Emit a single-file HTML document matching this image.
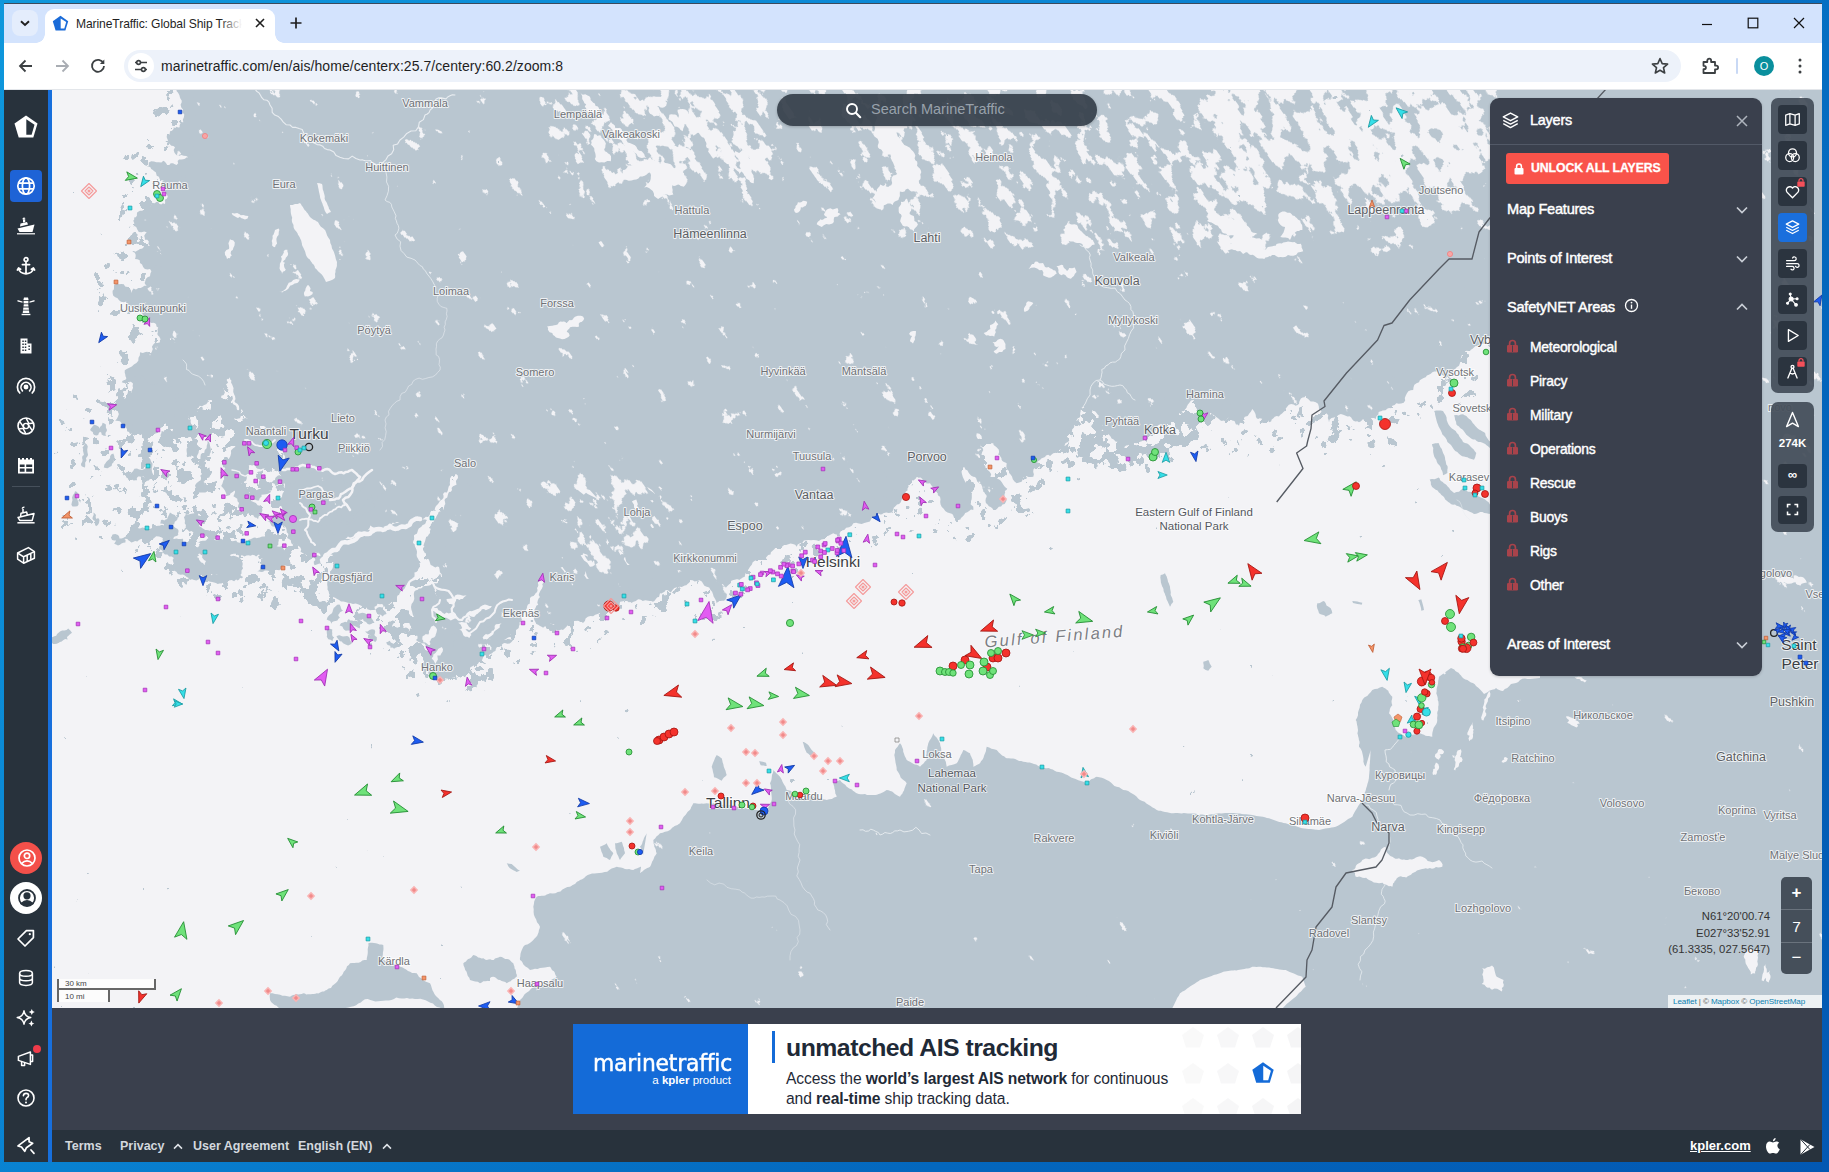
<!DOCTYPE html>
<html lang="en">
<head>
<meta charset="utf-8">
<title>MarineTraffic: Global Ship Tracking Intelligence</title>
<style>
*{box-sizing:border-box;margin:0;padding:0}
html,body{width:1829px;height:1172px;overflow:hidden}
body{font-family:"Liberation Sans",sans-serif;background:linear-gradient(135deg,#0e97dc 0%,#0a86d4 35%,#0467bd 70%,#0358b2 100%);position:relative}
.abs{position:absolute}
#win{position:absolute;left:4px;top:3px;width:1818px;height:1159px;background:#fff;overflow:hidden}
#wintop{position:absolute;left:0;top:0;width:1818px;height:1px;background:#3b4a5c}
#tabbar{position:absolute;left:0;top:1px;width:1818px;height:39px;background:#d3e3fd}
#tab{position:absolute;left:41px;top:5px;width:230px;height:34px;background:#fff;border-radius:9px 9px 0 0}
#tab:before,#tab:after{content:"";position:absolute;bottom:0;width:9px;height:9px;background:radial-gradient(circle at 0 0,rgba(255,255,255,0) 8.5px,#fff 9px)}
#tab:before{left:-9px}
#tab:after{right:-9px;background:radial-gradient(circle at 100% 0,rgba(255,255,255,0) 8.5px,#fff 9px)}
#tabdd{position:absolute;left:8px;top:6px;width:26px;height:26px;border-radius:8px;background:#e4edfc}
#tabtitle{position:absolute;left:31px;top:6px;width:166px;height:18px;line-height:18px;font-size:12.1px;color:#1f1f1f;white-space:nowrap;overflow:hidden;letter-spacing:-0.1px}
#tabtitle:after{content:"";position:absolute;right:0;top:0;width:22px;height:18px;background:linear-gradient(90deg,rgba(255,255,255,0),#fff)}
#toolbar{position:absolute;left:0;top:40px;width:1818px;height:47px;background:#fff;border-bottom:1px solid #e3e6ea}
#omni{position:absolute;left:120px;top:7px;width:1557px;height:32px;border-radius:16px;background:#edf2fa}
#omni .chip{position:absolute;left:4px;top:3px;width:26px;height:26px;border-radius:13px;background:#fff}
#url{position:absolute;left:37px;top:8px;font-size:14px;color:#1f1f1f;letter-spacing:0.05px}
#side{position:absolute;left:0;top:87px;width:44px;height:1072px;background:#28323c}
#strip{position:absolute;left:44px;top:87px;width:4px;height:1072px;background:#176fdc}
#map{position:absolute;left:48px;top:87px;width:1770px;height:918px;background:#f3f3f6;overflow:hidden}
#adarea{position:absolute;left:48px;top:1005px;width:1770px;height:122px;background:#3a404d}
#footer{position:absolute;left:48px;top:1127px;width:1770px;height:32px;background:#28323c;color:#d3d8de;font-size:12.5px;font-weight:bold}
#footer span{position:absolute;top:9px;white-space:nowrap}
.sideact{position:absolute;left:6px;top:80px;width:32px;height:32px;border-radius:4px;background:#1e63d6}
.sico{position:absolute;left:11px;width:22px;height:22px}
</style>
</head>
<body>
<div id="win">
<div id="wintop"></div>
<div id="tabbar">
  <div id="tabdd"><svg width="26" height="26" viewBox="0 0 26 26"><path d="M9 11.2 L13 15 L17 11.2" fill="none" stroke="#1f1f1f" stroke-width="1.9"/></svg></div>
  <div id="tab">
    <svg class="abs" style="left:7px;top:6px" width="17" height="17" viewBox="0 0 17 17"><path d="M8.5 0.8 L16.2 6.2 L13.4 15.6 L3.6 15.6 L0.8 6.2 Z" fill="#1a6bd8"/><path d="M8.7 3.4 L14.2 7 L12.3 13.6 L8.7 13.6 Z" fill="#fff"/></svg>
    <div id="tabtitle">MarineTraffic: Global Ship Tracking Intelligence | AIS Marine Traffic</div>
    <svg class="abs" style="left:209px;top:8px" width="12" height="12" viewBox="0 0 12 12"><path d="M2 2 L10 10 M10 2 L2 10" stroke="#1f1f1f" stroke-width="1.6" fill="none"/></svg>
  </div>
  <svg class="abs" style="left:285px;top:12px" width="14" height="14" viewBox="0 0 14 14"><path d="M7 1.5 V12.5 M1.5 7 H12.5" stroke="#1f1f1f" stroke-width="1.7" fill="none"/></svg>
  <svg class="abs" style="left:1696px;top:12px" width="14" height="14" viewBox="0 0 14 14"><path d="M2 8.5 H12" stroke="#111" stroke-width="1.2"/></svg>
  <svg class="abs" style="left:1742px;top:12px" width="14" height="14" viewBox="0 0 14 14"><rect x="2.2" y="2.2" width="9.6" height="9.6" stroke="#111" stroke-width="1.2" fill="none"/></svg>
  <svg class="abs" style="left:1788px;top:12px" width="14" height="14" viewBox="0 0 14 14"><path d="M2 2 L12 12 M12 2 L2 12" stroke="#111" stroke-width="1.2" fill="none"/></svg>
</div>
<div id="toolbar">
  <svg class="abs" style="left:12px;top:13px" width="20" height="20" viewBox="0 0 20 20"><path d="M16 10 H4.5 M9.5 4.5 L4 10 L9.5 15.5" stroke="#3c4043" stroke-width="1.8" fill="none"/></svg>
  <svg class="abs" style="left:48px;top:13px" width="20" height="20" viewBox="0 0 20 20"><path d="M4 10 H15.5 M10.5 4.5 L16 10 L10.5 15.5" stroke="#a9adb3" stroke-width="1.8" fill="none"/></svg>
  <svg class="abs" style="left:84px;top:13px" width="20" height="20" viewBox="0 0 20 20"><path d="M15.4 7.2 A6 6 0 1 0 16 10" stroke="#3c4043" stroke-width="1.8" fill="none"/><path d="M16.3 3.6 V8 H11.9 Z" fill="#3c4043"/></svg>
  <div id="omni">
    <div class="chip"><svg width="26" height="26" viewBox="0 0 26 26"><path d="M13 9.5 H19 M7 9.5 H8.4 M7 16.5 H13 M17.6 16.5 H19" stroke="#3c4043" stroke-width="1.7" fill="none"/><circle cx="10.6" cy="9.5" r="1.9" fill="none" stroke="#3c4043" stroke-width="1.6"/><circle cx="15.4" cy="16.5" r="1.9" fill="none" stroke="#3c4043" stroke-width="1.6"/></svg></div>
    <div id="url">marinetraffic.com/en/ais/home/centerx:25.7/centery:60.2/zoom:8</div>
    <svg class="abs" style="left:1526px;top:6px" width="20" height="20" viewBox="0 0 20 20"><path d="M10 2.6 L12.2 7.6 L17.6 8.1 L13.5 11.7 L14.7 17 L10 14.2 L5.3 17 L6.5 11.7 L2.4 8.1 L7.8 7.6 Z" fill="none" stroke="#3c4043" stroke-width="1.6" stroke-linejoin="round"/></svg>
  </div>
  <svg class="abs" style="left:1695px;top:12px" width="22" height="22" viewBox="0 0 22 22"><path d="M4.5 7 H8.3 V5.6 A1.9 1.9 0 0 1 12.1 5.6 V7 H16 V10.6 H17.2 A1.9 1.9 0 0 1 17.2 14.4 H16 V18 H4.5 V14.2 H5.2 A1.7 1.7 0 0 0 5.2 10.8 H4.5 Z" fill="none" stroke="#3c4043" stroke-width="1.8" stroke-linejoin="round"/></svg>
  <div class="abs" style="left:1732px;top:15px;width:2px;height:16px;background:#c9d9f5;border-radius:1px"></div>
  <div class="abs" style="left:1750px;top:13px;width:20px;height:20px;border-radius:10px;background:#0a8f9d;color:#fff;font-size:11px;text-align:center;line-height:20px">O</div>
  <svg class="abs" style="left:1786px;top:12px" width="20" height="22" viewBox="0 0 20 22"><circle cx="10" cy="5" r="1.5" fill="#3c4043"/><circle cx="10" cy="11" r="1.5" fill="#3c4043"/><circle cx="10" cy="17" r="1.5" fill="#3c4043"/></svg>
</div>
<div id="side">
  <!-- logo -->
  <svg class="abs" style="left:9px;top:24px" width="26" height="26" viewBox="0 0 26 26"><path d="M13 1.5 L24.5 9.5 L20.3 23.5 L5.7 23.5 L1.5 9.5 Z" fill="#fff"/><path d="M13.3 5.2 L21.5 10.7 L18.6 20.8 L13.3 20.8 Z" fill="#28323c"/></svg>
  <div class="sideact"></div>
  <!-- globe -->
  <svg class="sico" style="top:85px" viewBox="0 0 22 22" fill="none" stroke="#fff" stroke-width="1.7"><circle cx="11" cy="11" r="8.2"/><ellipse cx="11" cy="11" rx="3.6" ry="8.2"/><path d="M3.4 8.2 H18.6 M3.4 13.8 H18.6"/></svg>
  <!-- ship -->
  <svg class="sico" style="top:125px" viewBox="0 0 22 22" fill="#fff"><path d="M2.5 13.5 L19.5 9.5 L17.5 17 H4.5 Z"/><path d="M5 11.5 L5.5 8.5 L12 7 L13 9.6 Z"/><path d="M8 7.6 V4.2 H10.2 V7.1 Z"/><path d="M7.6 4.6 Q7 2.6 8.8 2.4 Q10.4 2.4 10.4 3.6 Z"/><path d="M2 18.2 H20 V19.4 H2 Z"/></svg>
  <!-- anchor -->
  <svg class="sico" style="top:165px" viewBox="0 0 22 22" fill="none" stroke="#fff" stroke-width="1.7" stroke-linecap="round"><circle cx="11" cy="4.6" r="1.9"/><path d="M11 6.6 V18.6 M7.4 9.6 H14.6 M3.6 13 Q4.4 18.4 11 18.8 Q17.6 18.4 18.4 13 M3.6 13 L2.4 15 M3.6 13 L5.6 14.2 M18.4 13 L19.6 15 M18.4 13 L16.4 14.2"/></svg>
  <!-- lighthouse -->
  <svg class="sico" style="top:205px" viewBox="0 0 22 22" fill="#fff"><path d="M9 2.5 H13 L13.6 5 H8.4 Z"/><path d="M8.6 5.8 H13.4 V8.4 H8.6 Z"/><path d="M8.8 9.2 H13.2 L13.5 11.6 H8.5 Z"/><path d="M8.4 12.4 H13.6 L13.9 14.8 H8.1 Z"/><path d="M8 15.6 H14 L14.3 18 H7.7 Z"/><path d="M6.6 18.8 H15.4 V20.2 H6.6 Z"/><path d="M2.5 5 L7.5 6.6 V7.8 L2.5 6.6 Z"/><path d="M19.5 5 L14.5 6.6 V7.8 L19.5 6.6 Z"/></svg>
  <!-- building -->
  <svg class="sico" style="top:245px" viewBox="0 0 22 22" fill="#fff"><path d="M5.5 3.5 H12.5 V8.5 H16.5 V18.5 H5.5 Z M7.3 5.5 V7 H8.8 V5.5 Z M9.8 5.5 V7 H11.3 V5.5 Z M7.3 8.5 V10 H8.8 V8.5 Z M9.8 8.5 V10 H11.3 V8.5 Z M7.3 11.5 V13 H8.8 V11.5 Z M9.8 11.5 V13 H11.3 V11.5 Z M7.3 14.5 V16 H8.8 V14.5 Z M9.8 14.5 V16 H11.3 V14.5 Z M13.4 10.6 V12.1 H14.9 V10.6 Z M13.4 13.6 V15.1 H14.9 V13.6 Z" fill-rule="evenodd"/></svg>
  <!-- signal -->
  <svg class="sico" style="top:285px" viewBox="0 0 22 22" fill="none" stroke="#fff" stroke-width="1.7" stroke-linecap="round"><circle cx="11" cy="12" r="1.6" fill="#fff"/><path d="M7.4 15.8 A5 5 0 1 1 14.6 15.8"/><path d="M4.8 18 A8.6 8.6 0 1 1 17.2 18"/></svg>
  <!-- aperture -->
  <svg class="sico" style="top:325px" viewBox="0 0 22 22" fill="none" stroke="#fff" stroke-width="1.6"><circle cx="11" cy="11" r="8"/><path d="M11 3 L14.2 9.2 M18.4 8 L11.8 9 M17.4 15.6 L13.6 10.2 M11 19 L7.8 12.8 M3.6 14 L10.2 13 M4.6 6.4 L8.4 11.8" stroke-width="1.5"/><circle cx="11" cy="11" r="2.6" stroke-width="1.4"/></svg>
  <!-- calendar/table -->
  <svg class="sico" style="top:365px" viewBox="0 0 22 22" fill="#fff"><path d="M3 4.5 H19 V18.5 H3 Z M4.8 9.4 V12 H9.6 V9.4 Z M11.2 9.4 V12 H17.2 V9.4 Z M4.8 13.6 V16.7 H9.6 V13.6 Z M11.2 13.6 V16.7 H17.2 V13.6 Z" fill-rule="evenodd"/><path d="M3 3 H5 V5 H3 Z M7 3 H9 V5 H7 Z M11 3 H13 V5 H11 Z M15 3 H17 V5 H15 Z" /></svg>
  <div class="abs" style="left:8px;top:396px;width:28px;height:1px;background:#46505b"></div>
  <!-- ship outline -->
  <svg class="sico" style="top:414px" viewBox="0 0 22 22" fill="none" stroke="#fff" stroke-width="1.5" stroke-linejoin="round"><path d="M3 13.4 L19 9.6 L17.2 16.4 H4.8 Z"/><path d="M5.6 12.6 L6 9.2 L11.6 8 L12.4 11"/><path d="M8 8.6 V5 M7.4 4.8 Q7.4 3 9.4 3.2"/><path d="M2.4 18.8 H19.6"/></svg>
  <!-- box -->
  <svg class="sico" style="top:454px" viewBox="0 0 22 22" fill="none" stroke="#fff" stroke-width="1.5" stroke-linejoin="round"><path d="M2.6 9 L13.4 3.6 L19.4 7.6 V14.2 L8.6 19.2 L2.6 15.2 Z"/><path d="M2.6 9 L8.6 12.8 L19.4 7.6 M8.6 12.8 V19.2 M12.2 11.2 V17.4 M15.8 9.4 V15.8"/></svg>

  <!-- bottom -->
  <div class="abs" style="left:6px;top:752px;width:32px;height:32px;border-radius:16px;background:#f4504a"></div>
  <svg class="sico" style="top:757px;left:11.5px" viewBox="0 0 22 22" fill="none" stroke="#fff" stroke-width="1.7"><circle cx="11" cy="11" r="8"/><circle cx="11" cy="8.8" r="2.7"/><path d="M5.4 16.6 Q11 11.2 16.6 16.6"/></svg>
  <div class="abs" style="left:6px;top:792px;width:32px;height:32px;border-radius:16px;background:#fff"></div>
  <svg class="sico" style="top:797px;left:11.5px" viewBox="0 0 22 22" fill="none" stroke="#28323c" stroke-width="1.8"><circle cx="11" cy="11" r="8"/><circle cx="11" cy="8.8" r="2.7" fill="#28323c"/><path d="M5.4 16.6 Q11 11.2 16.6 16.6 Q11 20 5.4 16.6 Z" fill="#28323c"/></svg>
  <!-- tag -->
  <svg class="sico" style="top:837px" viewBox="0 0 22 22" fill="none" stroke="#fff" stroke-width="1.7" stroke-linejoin="round"><path d="M11.4 3.6 H18.4 V10.6 L10 19 L3 12 Z"/><circle cx="14.8" cy="7.2" r="1.1" fill="#fff" stroke="none"/></svg>
  <!-- db -->
  <svg class="sico" style="top:877px" viewBox="0 0 22 22" fill="none" stroke="#fff" stroke-width="1.5"><ellipse cx="11" cy="6.4" rx="6.4" ry="2.8"/><path d="M4.6 6.4 V15.6 Q4.6 18.4 11 18.4 Q17.4 18.4 17.4 15.6 V6.4 M4.6 11 Q4.6 13.8 11 13.8 Q17.4 13.8 17.4 11"/></svg>
  <!-- sparkle -->
  <svg class="sico" style="top:917px" viewBox="0 0 22 22" fill="#fff"><path d="M9 3.8 Q10 9.6 15.8 10.5 Q10 11.4 9 17.2 Q8 11.4 2.2 10.5 Q8 9.6 9 3.8 Z" fill="none" stroke="#fff" stroke-width="1.4" stroke-linejoin="round"/><path d="M16.8 2 Q17.2 4.6 19.8 5 Q17.2 5.4 16.8 8 Q16.4 5.4 13.8 5 Q16.4 4.6 16.8 2 Z"/><path d="M16.4 13.6 Q16.8 16.2 19.4 16.6 Q16.8 17 16.4 19.6 Q16 17 13.4 16.6 Q16 16.2 16.4 13.6 Z"/></svg>
  <!-- megaphone -->
  <svg class="sico" style="top:957px" viewBox="0 0 22 22" fill="none" stroke="#fff" stroke-width="1.5" stroke-linejoin="round"><path d="M3.4 9.4 L15.4 5 V17.4 L3.4 13.4 Z"/><path d="M6.6 14.6 V18.6 H9.6 V15.6"/><path d="M15.4 8 H17.6 V14.4 H15.4"/></svg>
  <div class="abs" style="left:29px;top:955px;width:8px;height:8px;border-radius:4px;background:#ef3b4a"></div>
  <!-- help -->
  <svg class="sico" style="top:997px" viewBox="0 0 22 22" fill="none" stroke="#fff" stroke-width="1.6"><circle cx="11" cy="11" r="8"/><path d="M8.4 8.8 Q8.6 6.4 11 6.4 Q13.6 6.4 13.6 8.6 Q13.6 10 11.8 10.8 Q11 11.4 11 12.8" stroke-linecap="round"/><circle cx="11" cy="15.4" r="1" fill="#fff" stroke="none"/></svg>
  <!-- pin -->
  <svg class="sico" style="top:1044px;transform:scaleX(-1)" viewBox="0 0 22 22" fill="none" stroke="#fff" stroke-width="1.7" stroke-linejoin="round"><path d="M9 3.2 L18.8 13 L15.2 13.6 L11.4 17.4 L10.2 13.6 L4.6 8.4 L8.4 7.4 Z" transform="rotate(-8 11 11)"/><path d="M6 16 L3 19.4" stroke-linecap="round"/></svg>
</div>
<div id="strip"></div>
<div id="map">
<svg id="mapsvg" width="1770" height="918" viewBox="52 90 1770 918" style="position:absolute;left:0;top:0">
<defs>
<filter id="lk" filterUnits="userSpaceOnUse" x="-700" y="-1000" width="3300" height="2900" color-interpolation-filters="sRGB">
<feGaussianBlur in="SourceGraphic" stdDeviation="12" result="den"/>
<feTurbulence type="fractalNoise" baseFrequency="0.07 0.042" numOctaves="5" seed="4" result="n"/>
<feColorMatrix in="n" type="matrix" values="0 0 0 0 0 0 0 0 0 0 0 0 0 0 0 1 0 0 0 0" result="na"/>
<feComposite in="na" in2="den" operator="arithmetic" k1="0" k2="1" k3="1" k4="0" result="s"/>
<feComponentTransfer in="s" result="t"><feFuncA type="linear" slope="70" intercept="-58.1"/></feComponentTransfer>
<feFlood flood-color="#f3f3f6"/><feComposite operator="in" in2="t"/>
</filter>
<filter id="il" filterUnits="userSpaceOnUse" x="0" y="0" width="1900" height="1100" color-interpolation-filters="sRGB">
<feGaussianBlur in="SourceGraphic" stdDeviation="7" result="den"/>
<feTurbulence type="fractalNoise" baseFrequency="0.085" numOctaves="4" seed="9" result="n"/>
<feColorMatrix in="n" type="matrix" values="0 0 0 0 0 0 0 0 0 0 0 0 0 0 0 1 0 0 0 0" result="na"/>
<feComposite in="na" in2="den" operator="arithmetic" k1="0" k2="1" k3="1" k4="0" result="s"/>
<feComponentTransfer in="s" result="t"><feFuncA type="linear" slope="70" intercept="-60.2"/></feComponentTransfer>
<feFlood flood-color="#b9c6d0"/><feComposite operator="in" in2="t"/>
</filter>
</defs>
<rect x="52" y="90" width="1770" height="918" fill="#b9c6d0"/>
<g filter="url(#lk)" transform="rotate(-35 900 300)"><g transform="rotate(35 900 300)" fill="#000">
<polygon points="150,60 177,89 182,102 183,122 167,136 175,147 188,157 163,161 147,167 157,176 167,189 165,204 140,211 133,221 147,232 150,246 127,247 135,259 150,269 147,286 117,284 113,296 130,306 150,322 160,342 150,356 140,352 127,369 122,382 137,389 147,406 163,422 183,426 197,409 210,399 230,377 233,389 223,409 237,419 242,409 250,422 263,426 270,442 283,452 283,452 281,468 285,485 279,500 284,512 281,524 287,538 300,547 313,556 322,562 330,553 338,542 352,537 363,532 380,527 397,522 413,520 428,517 436,506 443,494 450,481 456,474 458,478 452,490 445,502 438,514 431,524 426,537 423,550 429,560 439,567 442,577 433,583 422,588 414,596 411,607 414,617 411,628 416,640 428,652 424,668 436,678 458,671 478,664 484,654 497,647 510,637 519,626 524,613 530,600 537,588 543,578 546,583 540,597 535,612 540,626 563,630 583,623 600,613 617,607 637,600 659,597 660,593 680,587 690,580 707,587 717,603 727,597 733,580 750,567 767,557 780,547 797,547 813,540 833,533 853,523 873,517 893,510 903,497 907,483 917,477 930,483 940,497 950,513 960,520 973,510 967,487 960,467 973,477 987,497 993,510 1007,500 1000,480 983,450 977,433 993,443 1007,463 1017,483 1033,477 1040,460 1053,453 1070,440 1077,420 1083,407 1097,413 1107,433 1120,447 1137,443 1153,433 1173,420 1187,407 1193,400 1219,419 1239,426 1252,409 1269,422 1296,406 1306,396 1319,409 1329,422 1346,416 1359,422 1376,419 1392,406 1406,396 1419,382 1432,372 1446,379 1459,366 1472,349 1486,339 1496,322 1500,330 1500,60" fill-opacity=".075"/>
<rect x="1219" y="50" width="275" height="150" fill-opacity=".3"/>
<ellipse cx="1400" cy="140" rx="90" ry="55" fill-opacity=".12"/>
<rect x="1219" y="200" width="275" height="60" fill-opacity=".1"/>
<rect x="950" y="40" width="300" height="205" fill-opacity=".2"/><rect x="640" y="40" width="320" height="140" fill-opacity=".12"/>
<ellipse cx="895" cy="150" rx="45" ry="80" fill-opacity=".16"/>
<rect x="545" y="50" width="225" height="140" fill-opacity=".19"/>
<ellipse cx="605" cy="515" rx="60" ry="55" fill-opacity=".2"/>
<rect x="1765" y="90" width="60" height="540" fill-opacity=".1"/>
</g></g>
<path d="M52 89l125 0 -.3 0 -.2 2 1.4 1.4 .9 1.5 .7 1.6 .4 1.8 .7 1.6 1.1 1.5 0 1.9 -1.1 2.5 .7 2.6 1.7 2.2 -.6 2.7 1.9 2.1 -.4 2.8 -1.1 2.5 .5 2.6 -1.9 0 -1.2 1.5 -.6 1.7 .1 1.8 -1.6 .3 -1.5-.8 -1.4 1.1 -1.6-.7 .1 1.6 -.9 1.3 -1.2 1 -1.6 .2 -.2 1.6 -.3 1.5 -1.4 .7 -1.4 .6 .1 1.9 .8 1.8 .5 1.9 .5 1.8 1.5 1.3 1.3 1.4 2 .3 1.6 1.2 -1.3 2.7 .8 2.8 1.8 2.1 2.6 1.1 2.4-.9 2.4 .6 2.5 .3 2.1 1.3 -1.9 .1 -1.4 1.4 -1.8 .5 -1.9 .1 -2.2 .1 -1.5 1.5 .6 2.3 -1.6 1.7 -1.8-.8 -1.8-.9 -2.3-.1 -1.4 1.8 -2.1-.1 -1.1-1.7 -1.2-1.5 -1.6-1 -1.9 1.8 -2.7-.3 -2.4 .1 -2.3-.9 -2.8-.2 -2.4 1.3 0 2.9 -2.1 1.9 1.8-.9 1.9 .9 .8 1.8 1.7 1 1.3 1.1 1.6 1 .5 1.7 .4 1.8 2.2 1.1 .8 2.3 2 1.1 2.3 .4 1.7 1.7 1.4 1.9 .6 2.5 -1 2.3 -1.5 1.8 0 2.3 1.7 1.5 .9 2.1 -1 2 -2 1.1 .4 2.1 -.2 2.1 -2.1-.8 -1.7 1.4 -1.9-.8 -1.1-1.7 -1.9 0 -1.6 1.1 -1.8-.1 -1.7-.7 .3 2.1 -1.3 1.7 -1.9 .6 -1.8 1 -1.5 1 -1.3 1.4 -1.8 .5 -1.9 0 -1.4 .9 -1.5 .9 -.2 1.6 0 1.7 -1.1 1.4 -1.7 .3 .2 1.7 -1 1.5 1 2.5 -.5 2.6 2.4 1.3 1.1 2.4 1.5 2.4 2.8 .3 2.6-.8 2.5 .9 -1.5 1.6 -1 1.8 .6 2 .2 2.1 2.3 0 1.5 1.8 -.5 2.4 1.7 1.7 -1.7 .1 -1.3 1.1 -1.6-.4 -1.6 0 -.7 1.5 -1.5 .8 -1.7 .2 -1.3 .9 -1.6 .8 -1.5 1 -1.7-.8 -1.8 .6 -1.5-.9 -.9-1.5 -1.1-1.6 -1.8-.2 2.2-.2 2 .8 1.1 1.9 .8 2 2 1 .9 2 -.1 2.2 -.6 2 2.5 .3 2.2 1 .3 2.7 2.1 1.6 1 2.4 1.8 1.9 2.5 .6 2.6-.5 1.4 2.2 -1 2.4 -.4 2.6 -2.5 1 -1.6 1.7 -.7 2.3 -.4 2.6 1.9 1.9 -2.3 .1 -1.8 1.2 -2 .9 -2.2 .2 -2.4 1.4 -2.5-1 -1.3 2.1 -1 2.3 -.2-2.5 -1.4-2.1 -2-1.4 -2.5-.4 -1.3-2.2 -2.5-.4 -2.3 .4 -2.3-.3 -1.8 .5 -.9 1.6 .1 1.7 -.3 1.7 -1.2 1.2 0 1.8 .2 1.6 .5 1.6 2 1.5 2.3 1 1.4 2 2 1.6 2.7 .4 2.7-.6 -.3 1.7 1 1.3 1.3 .9 1.6 .2 1.1 1.3 1 1.4 .8 1.6 1.7 .7 1.9 .3 1.8-.8 2 .6 .7 2 1.4 .9 .7 1.7 .6 1.5 1.3 1.2 1.1 1.2 1.4 .9 .7 1.6 1.8 .5 1.6 .6 1.8-.2 1.7 .5 1.1 1.3 .3 1.9 1.7 1.1 -.6 1.7 .1 1.8 .1 1.6 -.5 1.5 .7 1.4 1.2 1.1 .8 1.3 .6 1.4 -.8 1.4 .2 1.6 -2.5 .6 -2.5-.1 -1.7 1.8 -1.4 2.1 .9 2.3 -.9 2.4 -1 2.1 -.9 2.2 -.4-1.5 -1.1-1.2 -1.2-1.2 -1.7 .3 -2.8 .8 -2.8-.6 -.1 3 -1.4 2.5 -.2 3 -1.9 2.3 -2.5 1.4 -2.1 2 -2.5 1.3 -2.6 1.2 -1.9 1.2 -.1 2.2 .5 1.9 .3 1.9 .9 2.1 -1.3 1.9 -2.2 .3 -1.2 1.8 2.3 .6 2.3 .3 2.2-1.2 2.4-.2 2.1 1.8 -.4 2.8 2.6 .4 1.5 2.2 1.9 2.2 2.9 .4 1.1 2.7 -.5 2.8 2.9 .6 1.1 2.8 -.1 2.6 .7 2.6 .3 1.5 1.2 1.1 .7 1.5 1.6 .4 1.5 .7 .7 1.5 1.4 .5 1.4 .6 1.8-.1 1.8 .1 .6 1.7 1.3 1.3 1.4 1 .8 1.5 .4 1.7 -.3 1.6 2.3 1.4 2.5 .7 2.2 1.6 2.7 .2 2.7 .4 2.4-1.3 2.5 1.4 2.7-1 1-1.6 1.7-.4 .7-1.6 .8-1.5 .6-1.7 -.8-1.5 -.8-1.5 -.4-1.6 1.6 .5 1.6-.5 1.7-.6 .6-1.7 2.5-1.6 2.6-1.4 1.9-1.2 1.2-2 2.3 .5 2.1-1.2 2-.9 1.4-1.7 .6-2.1 1.8-1.4 2.1 1.5 2.2 1.4 2.8-.3 2-1.8 2.1-1.6 .1-2.5 2.4-.8 1.2-2.3 -.8-2.1 -.5-2.2 1.4-1.8 1.1-1.9 1.5-1.6 1.5-1.5 -.6-2.3 1.5-1.9 .1 1.9 1.3 1.4 -.3 1.9 -1.5 1.2 .8 1.6 1.6 .7 1.3 1.2 0 1.8 -1.1 1.2 .1 1.7 -.1 1.6 .5 1.5 -.9 1.4 -.8 1.5 -.2 1.8 1.5 1.3 -.3 1.7 -.1 1.7 -.8 1.6 -1.4 1.1 -1.8-.2 -1.7 .3 -1.4 .9 -1.5 .9 1.5 1.7 .7 2.2 1.5 1.7 1.1 2 1.2 2.3 2.6 .5 2.3-1 2.5 .6 1.6-.4 1.7-.4 .7-1.6 .4-1.6 -.3-1.6 -.4-1.5 .6-1.4 .7-1.5 1.1 2.3 2.5 .4 -.2 2.2 -.1 2.3 1 1.8 1.9 1 .9 1.7 1.2 1.6 2 0 1.2 1.5 1.7 .2 1.8-.1 1.5 1.2 1.9-.6 1.3 1.3 1.9-.1 2.2 1.2 .7 2.4 1.4 1.8 1.2 2 -1.6 2.2 .6 2.6 1.2 2.2 1 2.2 2.2 .6 2.3-.1 .8 2.4 2.4 .8 1.7 1.6 2.4 .4 1.9 1.8 -.4 2.5 -.3-.3 .6 2.2 1.3 1.8 .1 2.2 -.6 2.1 -.8 2 -.3 2.1 -.4 2.3 -1.9 1.3 .8 2.2 .9 2.3 -.3 2.4 -1.4 2.1 1.6 1.7 1.6 1.7 .6 2.3 .2 2.3 -.4 2 -.3 2 0 2.2 -1.4 1.7 -.7 2 -.2 2.1 -1.7 1.3 -1.3 1.7 -.1 1.7 .2 1.7 .6 1.8 1.6 .9 .8 1.5 1.4 1.1 -.3 1.7 .8 1.6 -.4 1.7 -1.1 1.4 -1.7 .6 -.7 1.7 -.1 1.9 1.5 1.3 -.9 1.6 .4 1.8 1.5 1.5 2.1 .7 1.4 1.6 .6 2.1 .2 2.3 1.6 1.7 -.5 2.1 -.9 2 2 .9 1.8 1.3 .3 2.2 1.1 2 2.2-1 2.3 .4 1.4 1.9 1.9 1.3 1.2 2.2 -.6 2.5 2 1.2 2 1.3 2 1 2 1 2.2 .3 2.2-.5 1.5-.8 1.6 .4 1.6 .5 .7 1.5 1.7 2.3 1.9 2.1 .7-1.4 1.5-.7 .6-1.5 1.3-.8 1.1-1.3 .2-1.6 1.7-.2 .9-1.5 .5-2.1 1.9-1.1 2.1 .6 1.8-1.2 .9-1.7 -.2-1.9 .2-1.9 .8-1.7 1.7-.8 1.8-.5 1.8-.5 1.6-.9 1.8-1.2 1.2-1.7 2 1 2.1-.4 1.4-.8 .9-1.4 1.1-1.2 1.3-.9 1.3-1.1 1.7-.2 1.7 .3 1.6 .3 2.8-.2 2.1-1.7 1.7-2.1 .7-2.6 2.1 1.6 2.5 .9 2.5-.7 2.6-.2 2.4 .7 2-1.5 2.3 .2 2-1.1 2.5-.5 1.3-2.1 2.3 .2 2.2-.9 2.1 .8 1.8 1.1 2.3 .5 2.1-1.2 2.2 .4 2.3-.5 2-1.1 1.2-2 2 .4 2-.5 2.1-.6 1.8 1.2 1.6-1.2 1.7-1.1 1.6-1.5 2.2 .3 1.2-1.3 .8-1.5 .2-1.8 1-1.5 1.9-.4 1.6-1 .4-1.8 .9-1.7 1.3-1.2 1.1-1.4 .9-1.5 1.2-1.3 1.6-1.2 1.3-1.5 .2-2 -.6-1.9 1.6-1.7 2.3 .2 .9-2 .4-2.1 .5-1.9 1.3-1.6 -.2-1.9 .2-2 0-2.6 1.4-2.2 2.2-1.4 2.4-.8 1.8 1.6 .2 2.4 -1.1 1.5 -1 1.6 .3 1.8 .3 1.8 -1.8 .7 -1.7 .9 -1.4 1.6 .4 2.1 -1.1 1.7 -1.9 .4 -.8 1.6 -.5 1.8 -.5 2 -1.7 .9 -1 1.7 .5 1.9 .3 1.9 -.9 1.7 -.4 1.8 -.5 1.8 -1 1.7 -2 .4 -1.9 .8 -.6 1.9 -.9 1.2 -.7 1.4 -.6 1.4 -.9 1.3 -.9 1.3 -.5 1.5 -1.3 .9 -1.2 1 -.3 1.8 -1 1.6 1 1.8 -.8 1.8 .2 2.1 -1.4 1.4 -.9 1.7 -1.8 .8 -1.3 1.4 .1 1.8 -1.4 1.2 -.6 1.7 0 2.1 1.7 1.3 -1.5 1.4 0 2.1 1 1.4 .8 1.5 1.7 .4 1.6 .4 -.1 1.8 -.9 1.6 .9 1.5 1 1.4 .6 1.6 .5 1.6 .6 1.8 1.8 .7 1.4 1 1.6 .7 1.7-.9 1.8 .5 .6 2.6 .3 2.6 1.8 2.1 .3 2.7 -1.6 2.5 -1.6 2.5 -1.3 .9 -1.4 .7 -1.5-.6 -1.6 0 -1.3 .9 -1.1 1.1 -1.4 .5 -1.6 .2 -1.6 .2 -1.5 .2 -1.7 .3 -.8 1.6 -1.5 .6 -1.7-.2 -.9 1.4 -1.7 .4 -1.5 .9 -.7 1.6 -.2 1.6 .2 1.7 .3 2.9 -1 2.8 -1.7 2.4 -.6 2.9 .4 2.6 .8 2.5 .6 2.6 1.2 2.3 .1 1.6 -.8 1.4 -1.6 .5 -.6 1.6 -1.2 1.2 -.1 1.7 1.3 1.2 -.1 1.8 1.6 .8 1.5 1.1 .8 1.6 1.2 1.4 .6 1.8 .8 1.8 0 2.1 -1.5 1.4 1.9 1.4 2 1.1 2.2 .8 2.4 .2 1.2 2 1.1 2 1.2 2.1 0 2.4 -1.4 1.8 0 2.3 1.2 2 -.5 2.2 -.8 2.2 .6 2.3 -1.8 1.4 -1.3 1.8 1.7 1.2 1.6 1.4 1.1 1.9 .3 2.1 1.7 1.2 1.4 1.6 2.1 .6 2.1 0 1.6 .4 1.7-.3 1.6 .5 1.6-.8 1.7 .2 1.5 .6 1.8 0 1.2 1.3 .7-1.9 1.9-.8 1.9 .1 1.8-.1 1-1.4 .5-1.7 .4-1.7 1.1-1.4 1.3-.9 1-1.2 1.4-.9 1.6 .3 1.5 .6 1.5-.2 1.2 1 1.5 .6 1.2-2.8 2.6-1.4 2.4-1.4 2.8-.7 .4-1.6 1.4-.8 1.4-.7 .9-1.2 1.2-2.8 .7-2.9 1.8 1.5 2.4-.1 1.8-1.2 2-1 1.5-1.5 1.9-.8 .5-2.1 1.1-1.8 2.4 .1 1.8-1.6 .4-2.3 1.4-1.9 1.4-1.5 1.8-1.1 1.8-1.1 2-.6 .3-1.9 1.3-1.3 1.3-1.3 1-1.5 1.7-.8 1.6-.9 1.5-1.4 .3-1.9 .7-1.8 -.3-1.8 1.8-.9 .7-1.8 -.7-1.9 1-1.7 .9-1.5 .9-1.6 1.6-1.1 .3-2 .9-1.5 .5-1.8 .5-1.9 1.9-1 .2-1.8 .1-1.9 0-2.1 1.6-1.5 2-.3 1.6-1.1 .5-2 1.8-1.1 0-2 -.5-1.9 .9-1.3 .5-1.6 -.5-1.6 .3-1.6 1.3-1 .6-1.6 1.4-.6 1.5-.7 .6 1.4 .2 1.5 1.3 .9 .9 1.2 -1.8 1.1 -1.8 1.2 -1.4 1.6 -1.3 1.7 -.8 2 0 2.2 -.3 2.3 1.4 1.9 -1.4 1.6 -.8 2 -.5 2.1 .9 2 -1.9 1.1 -.8 2.1 -1.1 1.9 .6 2.2 -.5 2 -.4 2 -.3 2.1 .5 2 1.1 1.9 .9 1.9 1.9 .9 1.8 1.2 1.6 .7 1.5 1.1 1.4-1.2 1.9-.2 1.2-1.1 1.3-1 1.6-.5 1.7 .1 1.8 .7 1.4 1.2 1.1 1.7 -.3 2 1.6 .8 1.8 0 1.6-.7 1.8 .4 2.2-1.9 1.9-2.2 1.2-1.2 1.7 .2 .2-1.7 1.3-1.1 1.1-1.1 1.6-.4 1.6 .4 1.6-.3 1.5 .4 1.2 1 1.6 0 1.3 .9 1.9-2 .7-2.6 2.2-1.6 2.6-.7 2.7 .1 2.2-1.4 2.3-.9 2.4-.9 2.6 .5 2.3-1.5 1.1-2.3 1.8-1.7 2.4 .9 2.2-1.2 2.3-.4 2.3-.3 1.6-.5 1.1-1.4 0-1.7 .4-1.6 1.5-.2 1.5-.3 1.4-.6 1.5 0 1.6 .5 1.1 1.1 1.7-.4 1.3 1.1 1.2-.9 1.4-.6 1.6-.4 1.1-1.1 1.4-.7 1.6 .2 1.4 .6 1.2 .9 2.8-.8 2.9 .6 1.5 .3 1.5-.2 1.6 .8 1.5-.8 .9-1.2 .9-1.3 1.2-1.2 1.6-.2 1-3.7 1.6 .1 1.4-.8 1.4-.7 .8-1.4 1.6-.4 1.5 .3 1.1 1.2 1.4 .8 1.7-2.3 1.9-2.2 2.8-.7 2.8-.5 1.7 .3 1.5-.8 1.5-.7 1.6-.2 1.2-1.2 1.3-1 1.2-1.3 0-1.8 2.6 .2 2.1 1.3 2.4-.5 2.4-.7 2.3 1.1 1.2 2.2 1.4 2.1 2.3 1 2.5 .9 1.3 2.3 1.6 1.9 .9 2.4 .6 2.4 1.4 2.1 1.1 2.2 .6 2.4 1-1.2 1.3-1 1.6-.2 1.6-.1 1.7-.1 1.4-1 .9-1.4 .5-1.6 .1-2.5 -.8-2.4 -.3-2.5 .7-2.4 1.8-1.7 1.9-1.6 .8-2.5 2.4-1.1 1.6-.2 1.4-.6 1.6 .1 1.4 .6 1.3-.8 1.2-.9 1.3-.9 1.5-.4 .7-2.8 1.2-2.7 2.1-2.1 1.4-2.6 1.8-1.9 .9-2.5 2.1-1.5 2.5-.9 2.6 .2 2.7 0 2.4-1.3 1.7-2.1 1.5-1.8 2.3-.4 .4-2.2 1.7-1.6 1.7-1.5 1.3-1.8 2.3 0 2.1-.7 2.3-.2 1.8-1.4 2.1-.2 2.1-.6 2.3-.7 2.3 .4 2.3 .8 1.5 1.9 1-2.3 2.3-1.1 2.5-.6 1.4-2.1 2.4-.3 2.3-.3 2.4 .3 2.3-.3 2.9 .2 2.7 .8 2.4-1.4 2.8-.6 1.5-2.5 2.9-.7 2.3-1.4 2.5-1.1 1.4 .8 1.6 .4 1.6-.1 1.6-.4 .5-1.6 1-1.4 1.5-.7 1.7-.2 .9-1.2 1.1-1.1 1.5-.2 1.5-.3 2.6-1.5 1.5-2.5 2.8-.6 2.7 .9 2.9 .3 2.6-1 2.8-.7 2.8-.8 1.4-2.6 2-2.1 2.6-1.2 1.9-2.1 1.4 .6 1.4 .6 1.5-.4 1.2-.9 2.8-.8 2.7 .6 2.9-.6 1.6-2.5 .4-2.3 1.7-1.5 1.6-1.6 2.1-.7 1.5-1.5 .8-2 .7-2 1.2-1.7 .8-1.7 1-1.6 .7-1.8 1.7-1 0-2.1 1.1-1.7 -.3-2.1 -1.6-1.4 1.3-.6 1.3-.8 1.1-1.1 1.4-.6 1.7 .2 1.4-1.1 1.2-1.1 .6-1.5 1.8 1 2-.1 1.6 1.2 .9 1.8 1.8 .9 1.2 1.7 2 .2 2-.1 1.3 1.9 1.4 1.8 1 2.1 -.6 2.4 2.4-.1 2.1 1.2 .3 2.6 2.1 1.5 .5 2.6 -.3 2.6 .4 2.6 1.2 2.4 1.9 1.9 1.5 2.2 2.3 1.4 2.5 .9 1.7 .4 1.3 1.1 .6 1.6 .5 1.6 1.6-.1 1.7 .2 1.2 1 1.4 .9 1-2 1.7-1.4 1.4-1.7 1.1-1.8 2.1-.8 1.8-1.4 1.9-1.3 2.3 .4 .1-1.7 -.2-1.8 -1.3-1.1 -1.3-1.2 .4-1.6 0-1.6 .6-1.5 .2-1.7 0-1.6 0-1.6 0-1.7 -1.3-1.2 -.1-1.7 -1.1-1.4 -1.4-.9 -1.2-1 0-2.8 -1.7-2.3 -1.1-2.4 -1.1-2.3 -.8-2.6 -.5-2.6 .1-2.8 -1.6-2.2 2.2 .7 2.3-.2 .9 2.2 2.1 1.2 1 1.9 1.3 1.7 1.5 1.6 2 .9 1.7 .3 1.2 1.3 .5 1.6 .5 1.5 1.2 1 1 1.1 1.6 .6 .7 1.4 .7 1.5 0 1.5 .7 1.5 .1 1.5 1.3 1 .7 1.4 1.2 1.1 .3 1.7 -.9 1.9 -.3 2.2 .4 2.2 1.7 1.5 1.2 1.7 1.8 .9 1.7 1.1 1 1.8 2.3-.1 1.7-1.4 1.5-1.7 2.3-.4 1.4-1.8 2.2-.7 1.1-1.9 .9-2 -1.1-1.2 -.7-1.5 -.4-1.5 0-1.6 .7-1.6 -.4-1.7 1.6-.8 .9-1.4 -2.3-1.8 -1.7-2.2 -1.5-2.5 -1.8-2.2 -2.4-1.2 -1.9-1.9 -2.6 .1 -2.7 .1 .8-2.8 -1.5-2.5 -2-1.7 -2-1.8 -.5-2.5 -2.1-1.6 .4-2.5 -1.4-2.2 .4-2.6 -1-2.3 .6-2.4 1.2-2.2 -.8-2.3 -2.1-1.3 .7-2.5 -1.3-2.2 -1.1-2 -1.6-1.7 -.8-2.3 .4-2.4 2.8 .5 2 2.1 .4 2.8 1.4 2.4 2.6 1.1 2.6-.8 2.1 1.8 2.7 .1 .3 1.8 1.4 1 1.3 1 1.2 1.1 1.2 1.4 .3 1.7 -.1 1.7 -.8 1.6 1.5 .7 .9 1.4 .9 1.4 .2 1.6 .8 1.4 1.5 .8 1.4 .6 1.4 .8 -.3 3 .2 3 1.4 .8 1 1.1 .1 1.7 1.1 1.1 1.8 2.4 .8 2.8 1.7 2.3 2.2 1.8 2.4-.9 2.5-.7 1.1-2.3 1.1-2.4 2.4-1 2.4 1 2.4 0 2.3-.3 .6-2.4 -.7-2.3 .2-2.5 1.7-1.8 1.3-2 .4-2.3 1.2-2.1 2-1.3 1.3-1.5 1.8-.7 1.9-.7 1-1.7 2.2-.6 1.9 1.1 1.6-1.3 1.6-1.3 2.9-.5 1.8-2.4 2.6-.9 2.5-1 1.3-2.6 1-2.6 2.5-1.4 2.1-1.9 1.5-2.3 .3-2.8 .2-2.6 .1-2.7 1.9-2.1 .4-2.7 1.5-2.2 .8-2.6 1.1-1.7 1.9-.9 .7-2 -.3-2 .5-1.9 .1-1.9 1-1.8 1.6-1.1 1.3 1.5 1.8 .8 1.8 .8 2-.1 1.8 .5 1.8 .5 1.8 1 1.1 1.6 .9 1.2 1.2 1 -.3 1.5 .3 1.5 .9 2.7 1.3 2.5 1.1 1.1 .3 1.6 .6 1.6 -.8 1.4 2.3 2 2.2 1.9 2.1 1.1 1.6 1.9 1.2 2.1 2.1 1.2 1.8 2 2.7 .4 .7 2.4 1.1 2.3 2.2-.3 2.2 .7 1.7-1.5 2.3-.3 1.6-1.6 2.4-.1 2.1-.5 2.2 .2 2-1.4 2.4-.5 2.3-.9 2.1-1.3 2.1-1.8 .8-2.5 2.2-1.5 2.7-.1 1.4-1 .6-1.6 .9-1.4 .1-1.7 1-1.4 1.2-1.2 1.7-.5 1.7 0 1.5-1.1 1.8 .3 .9-1.4 1-1.5 1.5 .9 1.7-.6 1.3-1 1.7-.1 1.4-2.2 2.6-.6 .7-2.3 1.7-1.8 2-1.8 2.6-.2 1-2.3 1.4-2.1 1.2-2.1 1.5-1.9 1.5-2.1 2.4-.6 25.7 19 1.2 1.3 1.6 .6 1.7-.3 1.6 .6 1.2-1.2 1.1-1.2 1.4-1 1.8-.1 .8 1.3 .5 1.5 1.6 .3 1.4 .7 .4 1.6 .7 1.5 1.7-.2 1.3 1.3 .9-2.9 2.7-1.2 .7-2.6 1.6-2.3 2.8-.8 1.6-2.3 1.7-2.2 1.3-2.4 1.8 2.3 1.3 2.5 .4 1.5 .1 1.5 .8 1.4 1.4 .7 1.4-.7 1.6 .3 1.4 .4 1.5 .2 1.7-.1 1.4 .9 1.3 .9 .6 1.5 2.1-.8 .6-2.1 1.7-1.1 1.3-1.6 2.1-.7 2.1 .5 1.4-1.7 1.8-1.2 1.4-1.7 1.8-1.3 .5-2.1 1.4-1.8 1.6-1.9 2.4-.7 2.4 .3 2.1 1.3 1.9-.6 1.5-1.3 .1-1.9 .9-1.8 .8-1.7 1.7-.9 1.9-.2 1.2-1.6 1.1 2.2 1.9 1.6 1.9 1.9 2.7 0 2.5 .8 2.2 1.6 .8 2.6 .2 2.6 1.8 1.6 1.2 2.2 2.3 1 2.5-.2 1.5 2 -.5 2.4 .8 2.1 .4 2.2 .5-2.6 2-1.8 2.5-.3 2.5-.8 1.9-1.8 2.4-.9 2.5 .6 2.4 1 1.9 .7 2-.1 1.6 1.2 1 1.8 1.3 1.4 1.8 .9 2-.3 1.7 1 2-1.1 1.5-1.8 2.1-.8 2.2-.4 2.3 .8 2.2-.9 2.3-.1 2.1 1 .7-2.8 2.1-1.9 -.1-1.7 1.3-1.1 1.5-.3 1.4-.6 2.9-.3 2.1-1.8 1.5-.5 1.5 .2 1.1-1.1 .6-1.4 2.3-.8 1.8-1.6 2.3 .5 2.4-.3 2.6-.7 1.5-2.2 -.4-2.5 .9-2.4 1.1-2.3 1.5-2.2 2.4-.9 2.5-.4 .3-2.6 .9-2.5 2.1-1.6 2.5-.9 .8-2.1 2-1.1 1.8-1.1 2.1-.7 1.2-1.8 2-.8 1.9-.9 1.5-1.5 2-.7 2.1 0 1.8 1 1.7 1.3 1.8 .9 2 .7 .6 1.9 1.4 1.6 1.5-2.2 2.6-.3 1.2-2 1.7-1.8 .5-2.6 2.2-1.4 1.6-1.7 2-1.3 1-2.8 .5-2.9 .6-2.8 .9-2.8 .3-1.7 1.6-.7 1.3-.8 1.5-.4 1.6 .2 1.6 0 1-1.3 1.4-.7 1.6-1.6 1.6-1.5 2.2-.1 2.1-.7 2.1-1.1 2.2-.6 1-2.1 .6-2.3 2.7-.6 2.4-1.3 2.1-1.9 1.5-2.3 -.2-2.7 .3-2.7 0-2.7 1.2-2.5 44.3-22.3 0 378 -10 1 -2.5-.1 -2.5-.3 -2.6 .2 -2.3 1.2 -1.8 1.9 -2.3 1.1 -2.5 .5 -2.5 .5 -1.7 2.1 -2 1.8 -2.5 1 -1.8 2.1 -1.9-.2 -1.9-.7 -1.7-.8 -1.5-1.3 -1.3 1.2 -1.7 .4 -1.6 .4 -1.7 .5 -1.2 1.1 -1.5 .8 -1.5 .8 -1.5 .8 -1.8-2.2 -1.9-2.1 -2-2 -2.3-1.7 -1.2-1.8 -1.9-1.1 -1.9-.7 -1.9-1.1 -1.7-1.3 -2-.6 -1.8-1 -1.6-1.4 -1-1.5 -1.3-1.3 -1.1-1.4 -1.6-.9 -1.6-1 -1.1-1.4 -1.6-.8 -1.7-.7 -12 8.7 -.3 2.1 -.5 2 -.1 2.1 -.4 2.1 -.6 2 -.5 2.1 .1 2.1 -.4 2.1 .6 1.6 .5 1.6 .4 1.7 -.1 1.7 .7 1.6 .1 1.7 .1 1.7 -.4 1.7 0 1.7 0 1.7 -.7 1.6 -.3 1.7 .3 1.6 -.2 1.7 -.2 1.7 .2 1.7 -.3 2.2 -.8 2.1 -1.3 1.8 -1.3 1.9 -.5 2.1 -.6 2.1 -.3 2.2 .1 2.3 -1.7-.3 -1.6-.5 -1.8 0 -1.7-.2 -1.5-1 -1.6-.5 -1.7-.7 -1.7-.2 -1.7 .3 -1.6 .6 -1.7 .2 -1.7 .4 -1.8 .1 -1.6 .4 -1.5 .9 -1.7 .5 -1.4-.8 -1.1-1 -1.4-.5 -1.3-.8 -1.4-.7 -1.4-.6 -.8-1.4 -1.2-.9 -.6-2.2 -1-2.2 -.2-2.3 0-2.3 -1.2-1.9 -1-2 -1.1-2.1 -1.6-1.7 .6-2.1 .3-2.2 .9-2 1.5-1.7 -.6-2.1 -.2-2.2 .6-2.1 .2-2.2 -1.3-1.3 -1.1-1.4 -1.1-1.5 -.5-1.8 -1.5-1 -1.4-1.1 -1.6-.9 -1.5-1 -2.5 .7 -2.3 1.3 -2.7 .3 -2.5 1 -1.1 1.4 -1 1.4 -1.4 1.2 -1 1.4 -1.6 1 -1.6 .8 -1.2 1.3 -1.1 1.5 -.8 2.5 -1.5 2.3 -.3 2.6 -.9 2.5 -.8 2.6 0 2.7 -.9 2.5 -1.4 2.3 .9 1.5 .2 1.7 .3 1.7 .4 1.6 .2 1.7 .3 1.7 -.2 1.8 -.4 1.6 .5 1.6 .3 1.7 .5 1.6 .2 1.7 .6 1.6 .1 1.8 -.6 1.6 0 1.8 1.7 2 1.2 2.5 .6 2.6 .6 2.6 .4 2.7 -.1 2.7 .8 2.6 1.5 2.3 5-16.7 -.2 1.7 -.1 1.6 0 1.7 -.1 1.7 -.1 1.6 -.1 1.7 -.2 1.7 0 1.6 -.3 1.7 0 1.7 -.1 1.6 .1 1.7 -.2 1.7 -.1 1.6 -.2 1.7 -.1 1.7 -.1 1.5 -.3 1.5 -.3 1.5 -.4 1.4 -.5 1.5 -.3 1.5 -.5 1.4 -.5 1.5 -.3 1.4 -.5 1.5 -.6 1.4 -.5 1.4 -.4 1.5 -.4 1.5 -.6 1.4 -.5 1.4 -1.3 2 -1.4 2 -1.4 2 -1.2 2.2 -1.3 2 -1.2 2.1 -1.2 2.1 -1 2.3 -2 1.2 -2.2 1.2 -1.9 1.5 -2 1.5 -2.1 1.1 -2.1 1.3 -2.1 1.2 -2.2 1 -2.1 .5 -2.1 .4 -2.1 .4 -2.1 .3 -2.1 .3 -2.1 .4 -2 .6 -2.1 .4 -2.1-.2 -2.1-.2 -2-.4 -2.1-.2 -2.1 0 -2.1-.2 -2.1-.2 -2.1-.3 -2-.6 -2.1-.6 -2.1-.8 -2-.7 -2.1-.5 -2.1-.7 -2.1-.4 -2.1-.7 -2.2-.4 -2.1-.6 -2.1-.4 -2.1-.7 -2-.7 -2.1-.7 -2.1-.7 -2-.8 -2.1-.4 -2-.6 -2.1-.5 -2.1-.2 -2.1-.4 -2.1-.3 -2.1-.4 -2.1-.5 -2-.3 -2.1-.3 -2.1-.1 -2.1-.1 -2.1-.2 -2-.4 -2.1-.2 -2.1-.2 -2.1-.1 -2.1-.2 -2 .2 -2.1 0 -2.1 0 -2.1 .2 -2.1 .1 -2.1-.1 -12.3 1.7 -2.1 0 -2.1-.4 -2.1-.1 -2.1 0 -2-.7 -2.1-.3 -2.1-.1 -2.1 0 -2.1 .2 -2-.3 -2.1-.2 -2.1 .3 -2.1-.1 -2.1-.2 -2.1 0 -2.1 .2 -2.1-.1 -2.1-.4 -2-.5 -2.1-.4 -2.1-.5 -2.1-.6 -2.1-.1 -2-.7 -2-1.4 -2.1-1.2 -2-1.4 -2.1-1.3 -2.1-1.3 -1.8-1.7 -2.3-.8 -2.3-.9 -1.9-1.6 -1.6-1.8 -1.9-1.6 -2.1-1.3 -2.2-1.2 -2.1-1.4 -2.4-.8 -2.5-.3 -2-1.3 -2.1-1.4 -2.5-.5 -2.3-.8 -1.7-1.8 -1.8-1.6 -2-1.6 -2.2-1 -2.3-1.3 -2.6-.9 -2.5-.6 -2.6-.5 -1.4 .6 -1.2 1 -1.5 .4 -1.5 .5 -1.1 1 -.9 1.3 -1.2 .9 -1.2 .9 -1.7-.7 -1.5-.9 -1.8-.4 -1.7-.5 -1.7-.5 -1.6-.9 -1.7-.6 -1.7-.5 -2.1-.8 -1.9-1.2 -1.9-1.2 -2.1-.9 -2-1 -2.2-.7 -2.2-.5 -2.2-.3 -2.1-.9 -1.8-1.3 -2.1-.6 -2-.8 -2.3 .2 -2.2-.4 -2.1-.5 -2.1-.7 -2.1-.9 -1.7-1.3 -2.2-.4 -2-.9 -2.2-.6 -2.2 0 -2.1-.6 -2.2-.3 -2-.8 -2.2 0 -2-.8 -1.9-1.2 -2.1-.5 -2.1 .1 -2.2-.3 -2.1 .1 -1.4-.9 -1.2-1.1 -1.6-.6 -1.2-1 -1.3-1.1 -1.2-1.2 -1-1.2 -1.1-1.2 -2.6-.7 -2.6-.6 -2.3-1.2 -2.5-.8 -.5 2.2 -.3 2.3 -.8 2.1 -.9 2 -.6 2.3 -1 2 -1.6 1.7 -1 2 -1.7 .9 -1.7 .7 -1.5 1 -1.8 .8 .1-1.8 -.2-1.7 -.3-1.7 -.2-1.8 -.8-1.5 -.7-1.6 -.8-1.6 -.4-1.7 -1.7-.8 -1.6-1 -1.6-.9 -1.8-.6 -.7 1.7 -.8 1.7 -1 1.6 -.6 1.8 -.9 1.6 -.7 1.7 -.8 1.7 -1.1 1.5 -2.5 1 -2.6 .6 -2.6 .6 -2.3 1.2 -.3-1.5 -.3-1.6 -.2-1.5 -.6-1.4 -.7-1.4 -.8-1.3 -.6-1.4 -.7-1.4 -.5-1.4 -.6-1.4 -.2-1.6 0-1.5 -.1-1.5 -.6-1.5 -.3-1.5 -.2-1.5 -.8-1.3 -.6-1.4 -.8-1.2 -.8-1.3 -.9-1.2 -1.2-1 -.9-1.2 -.7-1.4 -1 2.6 -1.3 2.5 -1.6 2.3 -1.1 2.6 -.5 2.1 -.5 2 -.1 2.1 -.6 2.1 0 2.1 -.5 2.1 .4 2.1 .2 2.1 -1.8 1.6 -1.4 1.9 -1.9 1.5 -1.6 1.7 -1.5-1.2 -1.7-.8 -1.9-.2 -1.7-.8 -1.6-1 -1.6-1 -1.7-.8 -1.6-.9 -.9-2.1 -1.1-1.9 -.7-2.2 -.8-2.1 -.1-2.3 -.9-2.1 -.8-2.2 -1.4-1.8 -1.4 1.6 -1 1.9 -1.4 1.5 -1.2 1.7 0 2.6 -.7 2.4 .5 2.5 .4 2.6 .3 2.5 .6 2.4 .5 2.5 .1 2.5 1.2 1.7 1.1 1.8 1 1.9 .6 2.1 1.5 1.5 1.6 1.3 1.7 1.3 1.3 1.7 -.8 1.7 -.7 1.8 -.7 1.7 -.5 1.9 -1 1.5 -.7 1.8 -1.3 1.4 -1 1.6 -1.7-.8 -1.7-.8 -1.7-1 -1.3-1.4 -1.5-1.1 -1.8-.6 -1.8-.7 -1.8-.3 -1.6 .9 -1.5 1 -1.6 .8 -1.6 .8 -1.8 .4 -1.7 .8 -1.7 .3 -1.9 0 -2.1 0 -2.1 .1 -2.1-.2 -2-.8 -2.1 .1 -2.1 .1 -2.1-.4 -2-.6 -1.3-.8 -1.2-.9 -1.3-.8 -.9-1.2 -1.4-.6 -1.4-.6 -1.3-.9 -1.2-.8 -1.5-1.9 -1.9-1.4 -1.9-1.5 -1.4-1.9 -1.7 .8 -1.8 .5 -1.7 .8 -1.5 1.2 .4 1.7 .5 1.6 .2 1.8 .5 1.6 .3 1.7 .1 1.8 .9 1.5 .5 1.7 -2.6 .8 -2.2 1.4 -2.7 .3 -2.5 .8 -1.7-.4 -1.7-.3 -1.7-.5 -1.5-.9 -1.7 0 -1.8-.2 -1.5-.8 -1.8-.2 -1.7-.1 -1.6-.5 -1.7 .2 -1.6 .1 -1.7 .4 -1.6 .2 -1.7 0 -1.7-.3 -1.6-1 -1.6-1 -1.5-1.2 -1.5-1.1 -1.6-1 -1.8-.6 -1.9-.5 -1.8-.3 -.7-1.8 -.6-1.7 -1.1-1.5 -1-1.7 -.8-1.6 -.6-1.8 -1-1.6 -.9-1.6 -1.7-1.6 -1.7-1.7 -1.7-1.6 -1.6-1.8 -.1 1.7 -.6 1.7 -.6 1.6 -.2 1.7 -.2 1.7 -.2 1.7 -.7 1.6 -.7 1.6 .7 2 .2 2.1 .2 2.1 0 2.1 .3 2.1 .2 2.1 .2 2.1 -.1 2.1 -.5 1.7 -1 1.5 -.8 1.7 -.8 1.6 -.5 1.7 -1 1.6 -.3 1.7 -.1 1.8 -2.5-1.1 -2.3-1.3 -2.6-.5 -2.6-.4 -2.1-.3 -2.2-.1 -2-.5 -2.1-.4 -2.1-.4 -2.1-.4 -2.1-.6 -2-.6 -2.1 .2 -2.1-.4 -2.1-.5 -2-.8 -2.1-.1 -2.1 .3 -2.1-.2 -2.1-.2 -2.1-.2 -2-.6 -2-.6 -2.1-.4 -2.2 0 -2 .6 -2.1-.4 -2.1-.1 -1.7 .1 -1.7 .3 -1.6-.1 -1.7 .1 -1.7 .1 -1.6-.4 -1.7-.2 -1.7 .1 -.7 1.4 -.7 1.3 -.8 1.3 -.4 1.5 -.9 1.3 -1.2 .9 -1.1 1 -.8 1.3 -.8 1.3 -1.2 1.1 -1 1.1 -.8 1.3 -.7 1.3 -.7 1.3 -.9 1.2 -.6 1.4 -1.3 .8 -1.2 .9 -1.5 .5 -1.4 .5 -1.2 1 -1.3 .8 -1 1.1 -1.1 1.1 -2.4 1.2 -2.6 .6 -2.4 .9 -2.6 .6 -1.6 1.8 -2 1.3 -1.3 2 -1.8 1.6 .2 1.7 .1 1.7 .6 1.7 .1 1.7 .9 1.5 .7 1.6 .1 1.8 .7 1.6 -1 1.7 -1.2 1.4 -.6 1.8 -.7 1.7 -1 1.6 -.6 1.8 -.6 1.8 -1 1.6 -1.2 .9 -1.5 .5 -1.3 .7 -1.4 .6 -1.2 1 -1 1.1 -1.3 .7 -1.1 1.1 6.7-40 -.9 1.7 -1 1.5 -.9 1.7 -.5 1.8 -.8 1.7 -.4 1.9 -.9 1.7 -1.3 1.4 1.1 1.9 .9 2.1 .8 2.1 .2 2.3 1 2.1 1.1 1.9 .8 2.1 .8 2.1 -1.8 .7 -1.5 1.1 -1.6 1 -1.7 .9 -1.7 .7 -1.7 .7 -1.8 .5 -1.6 1.1 -2.1-.2 -2-.7 -2.2 .1 -2.1-.3 -2-.8 -2-.7 -2.2-.2 -2-.5 -2.5 1.1 -2.6 .8 -2.3 1.4 -2.1 1.7 -2.6 .4 -2.6 .6 -2.7 .2 -2.6 .4 -2.3 .1 -2.4 .1 -2.1 .8 -2.2 .8 -1.9 1.2 -1.7 1.7 -1.9 1.3 -2.2 .7 -1.2 1 -1.4 .5 -1.2 1 -.9 1.2 -1.4 .7 -1.3 .7 -1.3 .9 -1.3 .7 -2.7 .4 -2.5 1.1 -2.4 1.3 -1.9 1.9 -2.7 .6 -2.4 1.2 -2.7 .4 -2.7-.3 -1.7 .6 -1.6 .6 -1.5 .9 -1.7 .4 -1.7 0 -1.7 .1 -1.8 .1 -1.6 .7 -1.5 2.2 -1 2.5 -.3 2.6 -.6 2.7 .4 2.6 -.1 2.7 .3 2.7 1 2.6 1.3 2.3 .8 2.6 1.7 2.1 1.3 2.4 -.4 1.8 -.7 1.8 -.3 1.9 -.7 1.8 -.7 1.7 -1.3 1.5 -1.3 1.4 -1.3 1.4 -1 1.1 -1.2 1 -1.2 .8 -1.3 .9 -1.3 .7 -1.5 .3 -1.4 .8 -1.1 1.1 -.7 1.5 -.7 1.6 -.7 1.6 -.5 1.7 -.3 1.7 -.1 1.7 -.4 1.7 .1 1.8 1.5 1.1 1 1.5 .7 1.6 1.2 1.4 1.4 1.2 1.5 .8 1.5 1.1 1.2 1.3 2.5-.4 2.4-.8 2.6 .1 2.5-.8 2.5-.3 2.5-.4 2.5-.5 2.5-.2 1 1.2 .5 1.4 1 1.2 1.4 .8 .8 1.3 .4 1.5 .6 1.4 1 1.2 -1.4 1.3 -1.8 .8 -1.7 .8 -1.3 1.5 -1.8 .4 -1.7 1 -1.7 .7 -2 .1 -1.4 1.4 -1.8 .7 -1.8 .3 -1.9 .5 -1.8 .5 -1.7 .8 -1.6 1 -1.3 1.5 -1.2 1.3 -1.6 .9 -1.4 1.1 -1.4 1.1 -.9 1.6 -.9 1.5 -1.2 1.3 -1.4 1.2 -.5 2.6 -1.2 2.4 -1 2.4 -.6 2.6 .3 2 -465 0z" fill="#f3f3f6"/>
<path d="M270 993.3l2.6-.1 2.4 .8 2.5 .3 2.6 .4 2.3 1 2.6 .1 2.5 .5 2.5 .4 1.5-.9 1.6-.7 1.7-.4 1.6-.7 1.8 .5 1.7-.2 1.8-.2 1.6-.8 1.6 .3 1.3 .8 1.6-.1 1.5 0 1.5 0 1.5-.2 1.5-.2 1.5-.2 1.5-.4 1.5 .1 1.4-.7 1.4-.6 1.4-.6 1.6 .1 1.1-1 1.5-.6 1.9-1.5 2.4-.6 1.3-2.1 2-1.5 1.8-1.6 1.6-1.8 1.1-2.1 1.2-2.1 1.7-1.3 1.2-1.7 .8-2 1.5-1.5 1.1-1.8 .7-2.1 1.8-1.2 1.2-1.8 2.1-.3 2.2-.1 2.1-.2 2.2 .1 2-.9 1.7-1.3 2.2-.5 2.2-.1 .1-2.1 .5-2 .4-2.1 .1-2.1 -.1-2.1 .3-2.1 .5-2.1 -.2-2.1 1.9-.5 1.9-.1 1.9 .2 1.9 .3 1.9 .5 1.7 .8 2 .1 1.8 .4 .1 1.9 .1 1.9 -.2 1.9 -.4 1.8 0 1.9 -.4 1.9 .6 1.8 .2 1.9 2.2 .7 2.2 .3 2.1 1 2.1 .7 1.9 1.2 1.9 1.2 2.3 .4 2 1.2 2.2 .6 2 1.1 1.9 1.2 1.9 1.3 2.1 .9 2 1.2 2.3 0 2.3 .3 1.2 1.8 1.1 1.9 1.9 .9 1.6 1.5 1.6 1.4 1.9 1 2.1 .6 1.9 .9 .9 1.7 .5 1.8 .5 1.8 .7 1.8 .9 1.6 .8 1.7 1 1.6 1.4 1.4 1.7 1.5 1.5 1.7 1.9 1.4 1.3 1.9 .9 2.2 .2 2.3 1.5 1.8 1 2.2 -2.5-1.3 -2-1.8 -2.5-1 -2.7-.5 -2.2-1.6 -1.8-2 -2.6-.7 -2.4-1.4 -2.4-1.2 -2.6-.8 -2.7-.7 -2.7 .2 -2.7 0 -2.6-.4 -2.7 .2 -2.6-.7 -2.7 .6 -2.7 0 -2.7-.4 -2.6-.8 -2.3 1.5 -2.6 1 -2.6 .7 -2.8-.1 -2.6 .2 -2.7 .3 -2.6 .2 -2.7 .3 -2.5-.8 -2.6-.8 -2.6-.8 -2.7 .2 -2.3 1.5 -1.9 1.8 -2.5 1 -2.2 1.7 -2.4 1 -2.7 .4 -2.6 .8 -2.6 .5 -2.6 .4 -2.5 1 -2.7-.3 -2.5 .8 -2.6 .5 -2.6 .8 -2.6 .2 -2.5 .9 -2.6-.6 -2.7 .3 -2.5 1.3 -2.7 .3 -2.6-.5 -2.5-.7 -2.7 .4 -2.6-.5 -2.7 .4 -2.5 .8 -2.7 .3 -2.6-.4 -2.7 .4 -2.7-.3 -2.4-1.2 -2.7-.6 -1.6-1.6 -1.5-1.6 -2-1.1 -1.5-1.6 -2.1-.9 -1.8-1.3 -1.7-1.6 -1.1-2 -.1-1.7 -.2-1.6 .1-1.7zM463.3 963.3l1.2-1.1 1.5-.8 1-1.3 1.3-1 1.5-.7 1.5-.8 .9-1.3 1.1-1.3 1.8 .5 1.6 .8 1.4 1.1 1.8 .3 1.7 .7 1.9-.1 1.4 1.2 1.8 .5 1.7-.4 1.8-.4 1.7 .9 1.8-.2 1.3-1.3 1.7-.7 1.7-.4 1.6-.8 1.9 .3 1.6 1 1.7 1 2-.1 1.9 .5 1.4 1.3 1.3 1.5 1.5 1.1 .5 1.7 .6 1.6 .2 1.8 1 1.4 .4 1.7 .1 1.8 .8 1.6 -.2 1.8 -1.2 .9 -1.1 1.1 -1.4 .5 -1.3 .8 -1 1.2 -1.5 .5 -1.3 .8 -1.2 .8 -1.4-1.4 -1.8-.5 -1.9-.4 -1.6-.9 -1.9-.4 -1.5-1.2 -1.5-1.2 -1.8-.6 -1.9 .4 -1.6 1.2 -1.1 1.6 -1.5 1.2 -1.9 .1 -2 .1 -1.6 1.1 -1.7 .9 -2.2-1.5 -2.7-.3 -2.6-.7 -2.5-.8 -.7-2.2 -1.5-1.7 -.6-2.2 -.6-2.2 -1.4-1.8 -.6-2.2 -1-2.1zM600 846.7l1.8-.7 1.6-.8 1.7-.8 1.6-1.1 .6 1.4 .7 1.3 .8 1.4 .8 1.2 .8 1.3 .9 1.2 1.1 1 .9 1.2 -.8 1.7 -1 1.6 -.7 1.7 -.8 1.7 -1.7-.8 -1.5-1.1 -1.7-.7 -1.8-.7 -.7-2.6 -1.1-2.4 -.7-2.5zM615 843.3l1.7-.1 1.7-.4 1.7-.5 1.6-.6 .6 1.4 .4 1.4 .4 1.5 .7 1.4 .3 1.5 .1 1.5 .5 1.4 .3 1.5 -1.4 1.6 -1.2 1.7 -1.4 1.6 -1 1.8 -.9-1.6 -.7-1.8 -.8-1.7 -.9-1.6 -.5-2.5 -.8-2.4 -.1-2.5zM506.7 863.3l2.4 .5 2.6 .2 1.9 1.8 2 1.8 2.1 1.8 2.3 1.3 -1.7 .6 -1.6 .7 -1.7-.9 -1.7-.9 -1.7-.9 -1.6-1 -1-1.1 -.9-1.2 -.6-1.4zM716.7 755l1.2 .8 1.4 .7 1.1 1 1.3 .8 .6 2.1 .4 2.2 .7 2 .4 2.2 .8 2 .9 2 .5 2.1 .7 2.1 -1.4 1.4 -1.4 1.2 -1.2 1.4 -1 1.7 -1.9-.9 -1.8-1.1 -2-.9 -2-.5 -.3-2.7 -.7-2.6 -.5-2.7 -.8-2.6 .5-1.5 .5-1.5 .6-1.5 .7-1.5 .6-1.4 .5-1.6 .8-1.3zM759.3 761l1.7 .5 1.7 .3 1.7 .4 1.6 .5 .4 1.6 .3 1.7 -1.5-.1 -1.5-.3 -1.5-.1 -1.5-.2 -.9-2.1zM802.7 741.7l1.5 .6 1.4 .8 1.4 .9 1.3 1 1.5 2.3 1.5 2.2 1.9 1.9 1.8 1.9 -.8 2 -.9 2 -1.7-1 -1.7-1.1 -1.5-1.4 -1.7-1.1 -1.3-2.7 -1.1-2.7 -.7-2.8zM427 520l-1.8-.4 -1.8 0 -1.8-.7 -1.8 .6 -1.9 .5 -1.9-.3 -1.5 1.1 -1.5 1.2 -2.2-.2 -1.9-1.2 -1.9-1.1 -2.2-.2 -1.2 2.1 -2 1.1 -2.3 .2 -2.3 .3 -2.3 .3 -2.1 1 -1.6 1.6 -2 1.1 -2.3-.5 -2.3 .1 -2.3 .3 -2.1 1.1 -1.8 1.5 -2.3 .1 -2.2 .7 -2.1 .5 -2.3-1 -2.4 .5 -1.5 2.1 -2.4 .6 -1.3 2 -2 1.4 -2.4-.1 -2.3 .7 -2 1.3 -2.2 1 -2.3-.3 -2.4-.1 -2.4 0 -2.3-.3 -2.3 .4 -2.1 1 -1.2 1.5 -1.9 .4 -1.5 .9 -1.1 1.5 0 2 -1.3 1.5 -1.5 1.1 -1.5 1.1 2.3 1.1 2.1 1.5 1 2.3 .9 2.4 -.2 2.7 1.6 2.2 -1.5 2.2 -.2 2.6 -.6 1.7 -1.1 1.5 -1.3 1.4 .1 1.9 0 1.9 -.6 1.8 -.9 1.7 -1.6 1.1 .3 2.3 -.1 2.4 .4 2.3 -.1 2.4 1.2 2.2 .4 2.4 1.6 2 2.3 1 2.2 .8 1.9 1.2 2 1.1 1.9 1.3 2.3 0 2.2 .6 2.2 .7 2.3 .3 2.9 .9 2.9-.4 2.8 1 2.6 1.2 1.3 .9 1.2 1 1.5-.1 1.5 .2 .7 1.5 1.6 .5 1.5 .5 1.5-.2 2.2-.1 1.9-.9 1.7-1.4 2-.7 2.2 .6 2.1-.8 2-.6 1.9-1.1 1.3-.8 1.1-1 1.2-1.1 1.4-.5 1.3-.9 1.2-1 1.3-1 .2-1.7 .6-1.5 1.5-.7 .6-1.5 .7-1.3 1.2-1 1.5-.5 1.1-1.2 .8-1.3 1.1-2.5 1.5-2.3 2.8-.7 1.6-2.5 .6-2.1 1.8-1.2 .2-2.1 -.2-2.1 2-.5 1.5-1.5 .9-1.8 1.2-1.7 -.1-2.7 -1-2.4 -.5-2.6 -1.4-2.3 -.4-1.9 .3-1.8 .1-1.9 -.6-1.8 -.7-1.7 -.8-1.7 -.3-2 -1.6-1.2 .3-1.9 .8-1.6 .1-1.9 -.6-1.8 1.4-1.4 1.8-.7 .7-1.8 .5-1.9 .8-1.5 1.5-1 1.3-1.1 1-1.3 1.6-.7 1.4-1.2 .4-1.7zM1160.7 575l2.2-.6 2.1-1.1 .8 1.6 .9 1.6 .5 1.7 .5 1.7 .3 1.8 .8 1.6 .6 1.7 .6 1.7 .1 1.9 .4 1.9 .3 2 -.2 1.9 .7 1.8 .9 1.7 .4 1.9 .7 1.9 -.9 1.2 -1 1.1 -.6 1.4 -.8 1.3 -1.1-2.5 -1.1-2.4 -1.3-2.5 -.5-2.6 -.7-1.4 -.4-1.6 -.7-1.3 -.6-1.5 -.1-1.6 -.5-1.5 -.8-1.3 -.5-1.5 -.8-2.4 -.2-2.5 -.4-2.6zM1203.3 661.7l2.6-.6 2.4-1.1 .9 1.7 .5 1.8 1 1.6 1 1.6 -1.8 1.9 -1.6 2.1 -2.6-.8 -2.4-1.6 .4-1.6 0-1.7 -.4-1.7zM1317.3 603.3l1.8-.1 1.7-.6 1.5-1 1.7-.6 1.6 2 .9 2.4 2.1 1.4 2.1 1.5 1.1 2.4 .5 2.6 -1.8 .6 -1.4 1.2 -1.8 .7 -1.6 .9 -1.4-1.4 -1.9-.5 -1.8-.5 -1.6-1 -.7-2.5 -1-2.3 -.5-2.6zM1418.3 600l1.6-.2 1.4-.5 .8 2.7 .7 2.6 .7 2.7 .5 2.7 -2.7 .7 -.3-2.8 -.8-2.7 -.8-2.6zM1352.3 601l2.6 .2 2.5 .3 2.4 .7 2.5 .5 -.6 2 -2.2-.5 -2.2-.1 -2.1-.7 -2.2-.4zM1434.1 410.9l2.2-.4 2.3-.1 2.2 0 2.2 .5 1.2 2.2 1.5 2.1 .9 2.4 .1 2.5 .9 2.4 1.1 2.2 1.5 2 1.7 1.9 2 1.1 1.8 1.2 1.1 2 1.7 1.5 .8 2.1 1.3 1.8 1.5 1.6 .9 2 2 1 2.2 .6 1.8 1.2 1.5 1.7 1.5 1.6 1.7 1.5 1.1 1.8 1.5 1.7 -.5 1.7 -.4 1.7 -.5 1.7 -.9 1.6 -1.7-.4 -1.6-.6 -1.7-.5 -1.6-.9 -1.7-.2 -1.7-.5 -1.8-.4 -1.5-1 -1.8-1.4 -1.6-1.8 -2.1-1.1 -1.6-1.8 -1.3-2 -1.3-2 -1.8-1.6 -1.8-1.6 -.7-2.1 -1.2-2 -1.5-1.7 -1.6-1.6 -.7-2.1 -1-2.1 -1-1.9 -1.1-2 -.7-1.9 -.8-1.9 -.5-1.9 -.5-2 -.5-1.9 -.5-2 -.2-2zM1454.1 415.3l2.3-.2 2.2 .4 2.1-1.1 2.3-.2 1.6 1.1 1.8 .6 1.2 1.5 1.3 1.4 1.6 1 1.2 1.5 1 1.6 1.3 1.3 1.1 1.5 1.2 1.3 1.2 1.3 1.5 1.1 1.6 .8 1.5 1 1.5 .9 1.5 1 .6 2.6 1.5 2.2 1.4 2.3 2.1 1.7 0 1.7 -.5 1.7 .4 1.6 .1 1.7 -1.4-1.2 -1.3-1.1 -1.5-1 -1.3-1.2 -1.6-.8 -1.6-.8 -1.7-.6 -1.8 0 -1.9-.8 -1.5-1.5 -2.1-.2 -1.9-.8 -1.5-1.4 -1.6-1.2 -1.6-1.3 -1.2-1.6 -.9-1.3 -.9-1.4 -1.2-1.1 -1.4-.8 -1-1.1 -1.1-1.1 -1.4-.9 -1-1.2 -.2-2.3 -1-2.1 -.3-2.3zM1431.9 444.2l1.6-.5 1.7-.5 1.7 0 1.7-.2 .8 2.1 1 2.1 1.4 1.8 .6 2.1 .8 2.2 1.1 2 .7 2.1 .2 2.3 .5 1.6 .3 1.7 .4 1.7 1.1 1.4 .2 1.8 -.3 1.7 -.1 1.7 .1 1.7 -2.1 1.3 -2.3 .9 -.2-2.1 -.6-2.1 -1.1-1.8 -.5-2.2 -1.2-1.8 -1.6-1.4 -1-2 -.5-2.1 -1.3-1.6 -.9-1.9 -.5-2 -.4-2 -.1-2.1 .2-2 -.9-1.9zM1429.7 479.6l2.3-.5 2.3 .1 2.2-.7 2.1-1.1 1.1 1.2 .5 1.6 1.2 1 1.4 .9 1 1.2 1.4 .8 1.3 .9 .9 1.3 1.8 1.6 1.2 2.1 1.9 1.5 1.8 1.4 2.4-.9 2.5-.3 1.8-1.8 2.2-1.4 1.4 .7 1 1.2 1.4 .5 1.3 .9 1.5 0 1.5 .2 1.4 .7 1.5 .2 1 1.4 1.2 1.2 1.5 .7 1.6 .6 1.4 .8 1.6 .4 1.4 .8 1.4 .8 1.8 1.4 1.7 1.3 1.2 1.9 .9 2.1 .4 1.9 -.5 1.9 .5 2 -.4 1.9 -2.2-.2 -2-.5 -2.2-.3 -1.9-.9 -2.2 0 -2 .8 -2 .9 -2.2 .2 -1.8-1.2 -2-.7 -1.9-1.1 -2-.9 -2.2-.4 -1.9-1 -1.7-1.4 -2-1 -1.9-.5 -1.6-1.2 -1.9 .1 -1.9-.4 -1.3-1.4 -1.7-.9 -1.4-1.3 -1.6-1.1 -.8-1.8 -1.2-1.6 -1.8-1.1 -1.1-1.7 -1.6-1.2 -1.1-1.7 -1.9-.7 -1.6-1.3 -2-1.6 -1.2-2.3 -.1-2.6zM186.1 421.1l-1.4 1.1 -1.7 .3 -1.6-.6 -1.7-.1 -1.7 .2 -1.5-.7 -1.2-1.1 -1.3-1.1 -1.6-.3 -1.6-.1 -1.2-1 -1.3-1.1 -1.3-.7 -1.3-.9 -1.6-.6 -.7-1.5 .2 2 -.8 1.7 .3 1.8 -.2 1.9 -1.2 1.2 -1.4 1 -1.1 1.3 -1.1 1.3 -.3 1.9 -1.4 1.3 .6 1.7 .3 1.8 -1.7 .1 -1.5 .7 -1.6-.6 -1.6 .6 -.9 1.6 -1.4 1.1 -1.7 .5 -1.8-.2 .1-2 -1.3-1.5 -1.6-1.1 -.8-1.8 -1.4-1.3 -1.9-.4 -1.2-1.5 -1.7-.8 -1.6-1.2 -2.1-.5 -2.1 0 -1.7 1.3 -1.5-1.2 -1.7-.9 -.7-1.9 -1.8-.9 2.1-1.1 .9-2.2 2.1-1.2 .5-2.4 1-2.2 .3-2.3 .3-2.5 -1.6-2 2.3-1 2.2-1.2 2.2-1.5 2.6 .1 2.7 .3 1.9 2.1 2.5 .2 2.6-.3 -.7-1.3 -.3-1.5 .2-1.5 0-1.5 .3-1.7 -.7-1.6 .7-1.7 -.7-1.7 .3-1.7 .6-1.6 1.3-1.1 .9-1.6 2.7-.2 2.5 1.1 2.4-.9 2.4-1.3 2.7-.4 2.2 1.8 2.7 .3 1.6 2.3 1.7 .4 1.4-1 1.4 .5 1.6 .1 1.6 .2 1.6-.4 1.5 .8 1 1.3 .1 1.5 1.1 1.2 .7 1.5 1.5 .6 1.7 2.4 1.5 2.6 1.6 1.3 1.1 1.7 .7 2 1.4 1.5 .4 2 1 1.7 1.2 1.8 0 2.1 -1.4 .7 -1.7-.1 -1 1.3 -.7 1.3 .3 1.7 -.9 1.3 -1 1.2zM146 402l-1.8 1.7 -.7 2.5 -1.7 1.8 -1 2.2 -1.3-1.6 -1.9-.6 -1.8-.8 -1.5-1.2 0 1.9 .5 1.8 -.2 2 -1.6 1.2 .9 2.2 -.4 2.3 -.7 2.4 -2.1 1.2 -1 2 -1.9 1 -1.6 1.5 -1.2 1.7 -1.5-.6 -.8-1.4 -.7-1.5 -1-1.1 -1.1-1.3 -1.6-.3 -1.6-.2 -1.5-.1 1.7-1.9 1.1-2.3 .9-2.5 -1.1-2.5 .5-2.5 -.7-2.4 1-2.2 .5-2.4 1.8-2.2 2.9-.2 2.4-1.2 2.4-1 2.7-.9 .2-2.2 -.3-2.2 .9-2.1 .9-2 -.2-2.2 1.1-1.8 1.8-1.1 1.6-1.3 2-.9 .6-2 1.3-1.6 .3-1.9 1.2 1.1 1.1 1.2 .7 1.5 1.4 .9 .2 1.7 1.3 1.2 .5 1.6 .4 1.5 .2 2.1 -.4 2 -1 2 .8 2.1 .5 2.1 .1 2.2 -.6 2.3zM139 422l.2 2.1 -.3 2 -.6 1.6 -1.2 1.2 .8 1.6 -.6 1.7 -2-.2 -1.9-.2 -1.4 1.6 -2 .6 -1-1.9 -2-.8 0-2.1 -.9-1.8 .2-2.8 2-1.8 -2.8-.9 -2.9 .1 -1.5-1 -1.4-1.2 -.6-1.7 -.9-1.5 .8-2 -.7-2 1.2-1.7 1.6-1.2 2.5 .7 2.4-.5 2.5 .7 1.5 2.2 .9 1.7 1.3 1.4 -.2 1.9 -.3 1.8 2.6 .6 2.4-1.3 .8 1.9zM272.6 460l-2.2 .7 -1.1 2 -.6 2.1 -.1 2.1 -2 .6 -1.6 1.3 -2.1-.4 -1.9 1.1 -1.7-.4 -1.8-.3 -1.5-1.2 -.5-1.8 -1.6-.8 -1.8 .4 -1.6-.5 -1.7 .4 .3 2 -.3 2 .7 2 -.4 2 -1.5 1.5 -.8 1.9 -.1 2.1 -.7 1.9 -1.5 .7 -1.5 .5 -.7 1.5 -1.5 .7 -.1 1.8 -.9 1.4 -1.7 .5 -1.1 1.3 -1.3 .9 -1.5 .5 -1 1.2 -1.3 .9 -1.5 .8 -.5 1.7 -1.6 .4 -1.4 .6 -.8-2.8 -1.2-2.7 -1.6-2.4 -2.1-2.1 1.3-2.6 .8-2.9 .9-1.4 -.3-1.6 -.8-1.4 -.5-1.5 .4-1.9 .7-1.8 .8-1.8 1.2-1.5 .3-2 .8-1.8 -.3-2 .3-1.9 2.3-1.6 1.3-2.5 .7-2.6 -.1-2.7 1.9-2 2.1-1.6 1-2.5 .4-2.7 2.3-.8 2.5-.1 2.6-.2 2.2 1.4 1.7 .2 1.5 .8 1.5-.9 1.6-.5 .6-1.7 1.4-1 1.7-.2 1.6-.7 2.7-.2 2.6 .9 1.3 2.4 2.3 1.6 2.7-.3 2-1.9 2.6-.2 2.5 .5 .7 2.5 -.3 2.5 -.8 2.4 -1.2 2.2 -.6 2.5 .4 2.5 0 2.6zM266.4 434l1.4 1.3 1.3 1.4 -.3 1.9 .1 1.9 .9 2.6 -1.3 2.5 -.8 2.4 -1.1 2.3 -1.6-.9 -1.4-1.3 -1.9-.5 -1.7 1 -1.2-1.5 -1.3-1.2 -1.9 .2 -1.6-1 -2-.3 -1.4-1.5 -1.9-.1 -1.9 .1 -1.9 .2 -1.6-1 -1.2-1.4 -.9-1.5 1-1.5 -.4-1.8 1.3-1.1 1-1.2 .3-2 -1.1-1.6 -1.2-1.5 -1.8-.8 .8-2.3 .8-2.2 .8-2.3 -.3-2.4 1.5-.4 1.5-.4 1.5 .4 1.4 .6 2.9-.8 2.8-.8 .5 2.7 1.3 2.5 1.7 2.2 2 2 1.8 2 2.5 .9 .7 2.5zM335.5 464.2l-1.7 .7 -1.7 .2 -1.7 .7 -1 1.6 -1.8 .5 -1.6-1.1 -1.7 .6 -1.6 .6 -1.4 1.5 -2 .1 -.6 1.8 -1.2 1.5 -1.8-.5 -1.8-.2 -1.8 .3 -1.7 .8 -2 .5 -1.9 .6 -2 .8 -2.1-.2 -1.1 1.5 -1.3 1.3 -2.5 1.6 -1.9 2.2 -.9 1.3 -1.5 .5 -1.6 .4 -1.5-.5 -1.8 .9 -1.9-.7 -2-.4 -1.7 1.2 -1.9 0 -1.9-.4 -1.5 1.4 -2 .4 -.8-2 -2.1-.7 -2.1 .1 -1.8-1 1.8 .6 1.7-.8 1.2-1.3 1.7-.7 .3-1.8 1.3-1.3 1.4-1.2 1.8-.4 1.9 1.1 1.9 1.2 2-1.1 2.3 .4 1.5-1.6 1.9-.8 2.1-.5 1.9-1 1.6-.7 1.3-1.2 2-.6 2.1-.4 1.5-1.4 1.7-1.4 2.5-1.3 2.5-1.2 2.9-.2 2.7-1.1 2.8-.7 2.9 .1 2.6-1.2 2.5-1.4 2.6-.7 2.3 1.3 2 1.6zM302.6 459l-1.7 .7 -2 .1 -1.9 .6 -1.8-.7 .6 2.2 -1.4 1.6 -.3 2.2 -.3 2.1 -.8 2 -.8 1.6 -1.7 .6 -1.6-.3 -1.7 .4 -1.6-.2 -1.6 .4 -1.3-1 -1.6-.3 -1.2-1.9 -.1-2.2 .4-2.1 1.2-1.9 2-.2 1.7-1 1.2-1.6 1.7-1.1 2.6-.8 -1.1-1.2 -.8-1.4 -.9-1.3 -.9-1.4 1.7-1.1 1.9-.4 1.7-1.1 .8-1.9 1.6 1.6 1.9 1.2 2.2 .8 2.2-1 1.7 1 1 1.8 1.8 1 2-.7 -1.2 1.3 -.5 1.8 -1.2 1.4zM333.8 506l.6 2 -.1 2.1 -1 1.9 -1.5 1.4 -2 1.3 -.7 2.2 -1.7 1.5 -1.4 1.7 -.7 2.7 -1.7 2.2 -2.7 .5 -2.3 1.6 .3 2.6 -.9 2.5 -.1 2.7 -1.9 2 -2.4-.3 -2.4 0 -2.4-.4 -2.3-.7 -1.8-1.8 -1-2.2 -2.4-1.1 -.8-2.5 -1-1.4 -.9-1.5 -.8-1.5 -.3-1.7 -1.8-.4 -1.1-1.6 -1.1-1.3 -.7-1.6 -2.3 .3 -1.7-1.4 -1.3-1.7 -1.2-1.7 -1.4-1.7 -2.2-.5 -.7-2.1 -.2-2.1 1.7-2 2.6-.1 1.7-1.9 2.5-.4 2.5-.2 2.4-.4 2-1.5 2-1.4 2.9 .3 2.8-1 2.8 .5 2.9 .4 2.1-.8 1.2-1.9 1.1-1.9 .2-2.2 .5-2 .5-2 0-2.1 -.2-2.1 1.8 .4 1.7-.6 1-1.6 1.8-.4 1.7-.2 1.6-.4 1.5-.9 1.3-1.1 1.6-1 1.7-1 1.9 .2 1.8 .7 1.5-1.4 1.9-.4 .7-1.8 .6-1.8 .7 2.8 .7 2.8 1.3 2.6 2.3 1.8 -.9 2.8 1.1 2.9 .5 1.5 -.2 1.5 -1.3 1 -.8 1.3 -1.9 1.2 -2.2 .4 -.8 2.2 -2.1 1.1 -1.4 1.7 -.7 2.1 .6 2.3zM358.1 489l.3 1.8 0 1.9 -.6 1.8 -1.3 1.4 -2.3 .8 -2.4-.7 -2.1 1.1 -2.3 .4 -1.6-.2 -1.7-.2 -1.6-.4 -1.5-.5 -1.4-1.7 -1.6-1.5 -1.6-1.3 -2.1 .2 -2 .2 -1.4 1.4 -2-.3 -1.7-1.1 -1.4-1.4 -1.2-1.5 -1.9-.4 -1.9-.2 -1.9 .5 -2-.1 1.6-1.1 1.9 .4 1.8-.5 1.7 .9 1.1-1.5 .5-1.7 1.7-.6 1.2-1.5 1.4-1.5 2-.7 2 0 1.9 .8 2.8 .2 2.5-1.2 1.3 2.2 2.4 .8 2-1.3 2.3 .2 2 1.2 2.3-.6 .3 2 1 1.8 1.8 .8zM319 533.6l.6 2.6 -.7 2.5 2.2 1.4 1.3 2.3 -2.3 1.4 -.7 2.6 -.5 2.7 1.3 2.3 -1.7-.6 -1.8 .3 -1.6 .8 -1.4 1 -1.1 1.5 -.4 1.7 -1.8 .3 -1.4 1.3 -1.7-2.2 .2-2.7 1.6-2 .7-2.5 -.4-2.5 -1.8-1.7 -.2-2.5 -2-1.7 -2.3 .1 -2.3-.2 -.4-3 -1.2-2.8 .6-1.8 0-2 -.5-1.8 -.1-2 .4-1.8 -.9-1.6 1.2-1.3 .7-1.7 .3-1.6 .5-1.7 -.9-1.5 -.1-1.7 1.2-1 1.2-1 .4-1.7 1.3-1 .5-1.7 .8-1.5 1.5-1 1.7-.2 2.3-.2 2.1 .9 2 1.2 1.7 1.5 -1.6 1.4 -1.2 1.9 1 2.2 -.9 2.2 -.9 1.9 -.4 2.1 .2 2.2 1.1 1.9 -.3 2.1 .2 2.1 1.5 1.1 1.2 1.5 1.6 1.3zM348.4 523l-.6 1.7 .9 1.6 1.1 1.3 .9 1.3 -1.2 1.6 -.9 1.7 -2 .2 -1.9 .6 -2.1-.2 -2.1 .2 -1.6 1.5 -1.9 1 -1.8-1.2 -2.2 0 -.7-2 -1.1-1.7 1.2-1.2 1.1-1.3 .4-1.8 -.7-1.7 .3-1.6 -.9-1.9 -.8-1.9 -1.8-1.4 -2.2 0 -2 .5 -1.8-1.1 -1.9-.4 -1.7-1 2.1-1.2 .6-2.3 1.7-1.6 1.8-1.2 2.7 .9 2.9-.1 2.9 .6 1.9 2.3 1.4 .6 1.3 .9 1.3 .8 .7 1.4 -1.3 2.4 -.8 2.6 2.2 .7 2.2-.5 2.3 .2zM278.3 544.7l-1.9 1.7 -1.9 1.9 -1.5 2.2 -2.3 1.4 -1.4 1.4 -1.8 1.1 -2.1 .2 -2-.6 -2.1-.3 -1.9 .6 -1.8 .9 -1.5 1.4 -1.6-1.3 -2-.6 -1.9 1.1 -2.2-.5 -2 .2 -1.9 1.1 -1.7-1.2 -2.2-.1 -2.5-.1 -2-1.5 -2.3 .1 -2.4 .5 -2.1 1.1 -1.8 1.5 -1.1 2.2 -2.1 1.2 -1.4-.9 -.9-1.3 -.7-1.5 -1.6-.6 -1.4 .8 -1.7-.4 -1.5-.3 -1.6 .1 -2.3-.4 -1.9-1.4 -1.8-1.5 -1.3-1.9 -1.1-1.2 -1.3-.8 -.4-1.6 -1.3-1 -.3-1.8 -1.3-1.2 -1.4-1 -1.8 .2 1.8-.6 1.7-.9 2.1-.1 1.6 1.3 1.8-1.1 .5-2 1.7-1.1 2 .1 1.9-.2 1.5 1.3 1.5 .9 1.9 .1 2-.3 1.4-1.4 1.7 1 1.9 .1 2.1-.5 1.8 1.1 1.8 .8 1.9 .1 2.1-.3 2.1-.5 1.3 1.9 2.1 .5 1.8-.6 1.4-1.1 1.7 .6 1.8-.1 1.6-.6 1.1-1.4 1.6-.4 1.6-.7 1.4-.8 1.6-.2 1.6 .7 1.6-.5 1.6-.1 1.4-.8 1.6-.3 1.5 .1 1.9-.6 .9-1.6 1.7 .6 1.8-.1 1.3 1.2 1.4 .9 1.7-.9 1.8 .5 1.7 1.5 .2 2.3 -.5 2.1zM241.8 561l.7 1.7 .2 1.8 -.5 1.9 .9 1.8 -1.6 2.4 0 2.9 -1.7 2.2 -1.5 2.3 -2.2 1.5 -2 1.8 -2.5-1.2 -2.7 .5 -2.6-.5 -2.6 .4 -2.3-1.4 -1.4-2.3 -1.3-1.4 -1.7-.8 -1.9 .2 -1.8-.6 -2-.2 -1.6 1.2 -1.6-1.3 -2 .1 .4-2.2 .2-2.2 -1.9-1.4 -.4-2.3 .5-2.6 1.1-2.3 -1.6-.8 -1.2-1.3 -1.1-1.5 .3-1.9 -1.5-.8 -1.3-1.2 -1.7 .7 -1.7-.6 -.1-1.5 0-1.5 .9-1.3 .6-1.4 1.7-2.5 1-2.8 2.1-1.9 2.8 0 2.3-1.2 2.4-1 2.7 .9 2 1.9 2.7 .8 2.7-.7 1.2 1.5 1.8 .7 1.8 .9 .7 1.9 .5 1.8 .7 1.7 .4 1.9 1.1 1.5 1.3 1.7 1.8 1.2 2.1-.5 2.1 .5 1.9 .7 1.9 .8 1.6 1.4zM284.9 556l1.2 2.1 .8 2.2 1.6 2.1 2.6 .2 -2.3 1.2 -1.6 2.1 -2.7-.7 -2.4 1.3 -.3 1.6 -1.2 1.1 -1.3 1 -1.7-.1 -2.9-.3 -2.7 1.3 -1.9 .5 -1.8-.8 -1.8-.4 -1.8 .1 -1.6 1.3 -2 .2 -1.8-.5 -2-.3 1.8-.7 1.2-1.6 .1-2 1.2-1.5 -.1-1.9 .9-1.7 1-1.6 1-1.6 -3-.3 -1.8-2.3 -.9-2.5 -1.6-2.1 -2-1.7 -2.7-.5 2.3-.9 1.2-2.2 2.3-1 1.3-2.1 1.7 .3 1.4 1.1 1.7-.5 1.7 0 1.5-.9 1-1.6 1.7-.1 1.8 0 1.3 .8 1.2 .9 .4 1.5 1.3 1 1.3 1 1.6 .2 1.7-.1 1.3-1.1 1 1.6 .2 2 1.5 1.1 1.8 .8 .1 2.8zM198.8 558l.3 1.7 1.1 1.5 1.1 1.4 1.7 .5 1 1.4 .9 1.4 1.4 1.2 .2 1.8 -1.3 1.1 -1.5 .8 -.9 1.6 -1.7 .7 .1 1.9 -1.3 1.4 -.2 1.8 -1.2 1.3 -2.1 .9 -2.2-.4 -2.2-.7 -2.2 .6 -1.1-2 -2-1 -1.8-1.3 -1.9-1.1 -2.6 .2 -2.5-.8 -1.5-2.2 -2.5-1.1 .3-2 -.2-2.1 0-2.1 -.6-2 -.7-2.3 1.1-2.1 -2.1-1.5 -2.5 0 -1.8-1.9 -2.5-.2 -1.8-1.7 -.9-2.3 -2.4-1.1 -.9-2.4 1.5-1.3 .2-1.8 .8-1.7 1.5-1.1 -.4-2 1.2-1.6 .7-1.8 1.8-.9 2.1 1.2 1.1 2.2 2.5-.5 2.2 1.4 2.2-.5 2.2 .6 2.3 0 2.2-.4 .2 1.7 -.4 1.6 .5 1.7 .8 1.5 1.2 1.2 1.7 .5 1.3 1.1 .8 1.5 .1 2.7 1.7 2.1 1.4 1.9 2.3 .6 2.1 .3zM177.3 528.7l1.1 1.3 .1 1.8 -.5 1.6 .3 1.6 -1.7 1.1 -2 .3 -1.2 1.5 -1.6 1.3 -1.7-1.4 -2.1-.2 -2.2 0 -1.7 1.3 -2.4-1.5 -2.6-1 -2.9-.1 -2.3 1.9 -2.3-.7 -2.4-.3 -1.9 1 -2.1 .6 -2.2 0 -2.1 .3 -1.9 1 -1.7 1.4 -2.2-.4 -2.1 1 -1.7 .3 -1.4-1.1 -1.3-.9 -1-1.2 -1.6-.5 -1.5 .4 -1.5-.3 -1.6-.2 1.7-.7 1.6-.8 1.6-.8 1.3-1.2 1.6-.8 1.5-.9 1.2-1.3 1.7-.6 1.8-1.9 1.9-1.6 2.6 .5 2.5-1.1 2.5 .6 2.2 1.6 2.6-.6 2.4-1 1.9-.6 1.9-.5 1.7-1.1 2-.1 1.5-.7 1.6 .1 1.6 .5 1.2 1.1 1.1-1.2 1.5-.6 1.5-.6 1.6 .4 1.8 .6 1.2 1.5 1.4 1.1zM198.9 525l.7 1.6 1.6 .6 1.2 1.1 1.4 .8 1.3 .9 1.7 .1 1.6 .2 1.4 .6 -.8 1.8 -1.1 1.6 -1.7 1.2 -1 1.7 -2.8-.4 -2.1-1.7 -2.6-1.2 -2.7 1 -1.1-1.4 -1-1.4 -1.6-1 -1.9 .6 -1.6-1.7 -2-1.3 -.1-1.9 .2-1.8 -1.2-1.8 .3-2.2 -.4-1.9 -.7-1.8 1.3-1.5 .6-1.8 2.3 .6 2.3-.5 2.3-.5 2.3-.3 1.7 1.2 1.8 .9 2.1 .5 2 0 -.6 1.5 -.1 1.7 -.3 1.6 -.1 1.7 -.8 1.8zM255.9 503l1.7 2.2 2.7 .6 1.7 2.1 .4 2.6 -.9 2.4 -2.1 1.5 -.7 2.4 -.7 2.4 -1.2-1.4 -1.9-.4 -1.3-1.4 .1-1.9 -1.4-1.3 -1.9-.2 -1.7 .7 -1.7 .6 -.9-1.3 -.9-1.4 -1.4-.8 -.9-1.4 -2.6-.4 -2.5-1.1 .5-2.3 .8-2.2 -1.6-1.8 -.2-2.5 -1.9-1.2 -2-1.2 .9-2 .7-2.1 1.5-1.8 .4-2.2 2.6 .1 2.4 .9 2.5 1.1 2.6-1 1.5 1.3 .9 1.9 1.5 1.3 1.5 1.3 -.2 1.7 -1.4 1 0 1.6 .4 1.6 2.3 1zM267.3 494l-3 .5 -2.9 .3 .3 1.8 -1.9 1.5 -.8 2.3 -1.9 0 -1.7-.7 -2-.2 -1.5 1.3 -.8-2 -1-1.9 .3-1.5 .8-1.4 1.5-1.1 1.9-.3 .5-2.4 2.1-.2 1.8-.9 2.6-.2 2.6 0 2.2 .1 1.9 1 2.2 .5 2-.8 -1.5 1 -.6 1.7 -1.5 .9zM203.5 482l1.3 1.1 .1 1.6 1.6-.1 1.3 1 -.3 1.5 -.8 1.3 .9 1.4 -.3 1.7 -2 1.1 -2.3 0 -2.4 0 -2.4 0 -.8-1.4 .3-1.6 -1.3-.8 -.7-1.4 -.7-1.6 .7-1.6 1-1.3 1.3-.9 1.3-.9 1.3-.9 .7-2.3 -1.1-2.1 1.4-1.2 .4-1.8 .7-1.7 .3-1.8 1.7 .4 1.8-.1 1.3-1.3 1.7-.7 .2 2.5 .2 2.4 .5 2.6 -1.2 2.3 -1.8 .7 -1.9 .6 -.5 1.9zM151.7 470l.4 2.3 1 2.1 -.4 2.3 -1.4 1.9 -1.8 .9 -1.5 1.5 -1.7-1.1 -1.8-.8 -.5-2.4 -1.4-2 1.7-2.1 -.3-2.6 1.5-2.2 .2-2.4 -1.7-1.8 -.1-2.2 0-2.2 2-1 2.1-1.1 2.2 1.9 1 2.8 1.4 2 -.3 2.5 -.5 1.8zM146.1 474l-1.8 2.2 -2.8 .8 -1.6-.5 -1.7 0 -1.4 1.6 .2 2.1 -1.7 .1 -1.6 .3 -1.7-1 -1.5-1.2 -.8-2.2 -.9-2.2 2.3-.9 1.9-1.8 1.4-2.6 2.6-.1 2.2 1 2.8 .5 2.6-1.2 .1 2.7zM209.7 455.8l-2.2 .4 -1.3 1.8 -.4 1.5 -.6 1.4 -1.5 1.6 -.4 2.2 -2.2 .7 -1.1 2 -1.2-2.2 -1-2.3 1.3-2 1.3-1.9 .1-2.4 .4-2.3 1.4-1.2 1.9-.2 .6-2.9 1.8-1.8 .2-2.6 .8-2.3 -.1-2.5 1.3 1.2 .8 1.5 .5 2.6 .6 2.6 .2 1.8 -.2 1.8 -.9 1.7zM198.5 453l-1.3 2.6 -.9 2.8 -1.3 .7 -1.4 .6 0-3 -.9-2.8 -.8 1.4 -1 1.4 -1.9-.2 -1.8 .8 -.6-1.6 .4-1.6 -.2-1.6 -.2-1.6 0-1.8 .6-1.6 1.6-1 .4-1.8 1.8 1.7 1.7 1.8 .8 1.2 1.7-1.8 .8-2.3 1.6 .2 1.3 1.1 .2 1.7 -.8 1.5 .5 1.6zM243.2 577l-1.4 1.2 -1.8-.1 -.9 1.5 -1.5 1 -1.3-1.1 -1.8-.3 -1.6 .5 -1.8-.3 -1.5-.6 -1.6 .2 -1.5-.3 -1.6 0 -1 1.7 -.9 1.7 -1.4 1.4 -2 .1 -1.9 .3 -1.8-.8 -1.8-.6 -1.9-.4 -1.9-.4 -1.8-.5 .1-2.1 -.3-2.1 2.3-1.3 2.2-1.6 1.8 .1 1.8 .5 1.8 .4 1.8-.7 1.5-.9 1.5-1.1 1.6 1 1.9-.4 1.7-.4 1.3-1.3 1.3 1.1 1.6 .7 1.7 .2 1.6 0 2.3-.2 1.9 1.2 1.4 1.6zM66.9 637l.7 2.6 -2.4-.5 -2.1 1.1 -1.4 1.2 -1.7 .7 -1.6 .9 -1.6 .7 -1.8 .3 -1.8 .1 -1.3-1.2 -1.7-.4 -1.6-.9 -1.7 0 1.6-2 .4-2.6 1.8 .8 2-.7 1.7-.8 1.8-.6 .9-1.7 1.4-1.3 1.5-1.3 2.1-.8 2.2-.1 2.3-.5 1.6-1.6 2.1 2.1 1.7 2.3 -1.3 1 -1.3 1 -1.1 1.2zM288.3 517.6l-1.1 2 -1.8 1.4 -1.2 2.7 -1.7 1.3 -2.2-.4 -1.6-.2 -1.5 .8 -2.1 1.5 -2.6-.3 -1.2-1 -.7-1.4 -1-2.1 -2.3-.9 2 .3 1.8-.9 2-.3 1.5-1.4 2.3 .2 1.9 1.4 1.3-2.5 1.3-2.5 1.3-1 1.4-.7 1.6 .2 1.7 .2 0 2zM177.1 520l-2.3 1.7 -.7 2.7 -2.1 .1 -2-.2 -2.5-.5 -2.1 1.2 -2.5-1.2 -2.7-.3 .5-1.7 .3-1.8 1.7-.2 1.6 .7 1.3-1 1.6-.5 .4-1.6 1.3-2.3 1.1-2.5 2.3 1.3 2.5 1 1.1 1.7 2.1 .5zM125.6 540l-.2 2.4 -2 .4 -1.9 .6 -1.5 1.4 -2 .6 -1.9-.8 -1.9-.8 .9-1.6 1.1-1.6 -2.1 0 -2-.6 -1.2-2.4 .9-1.4 .7-1.6 2.8-.7 2.7 1.1 1.1 1.6 .4 1.9 2.7 .1 1.9 .1zM107 430l-.5 1.5 -.9 1.3 -.1 1.6 .8 1.4 -2.5-.1 -2.2-1.1 -.2-1.8 -1.4-1.1 -1.2 1.5 -.6 1.9 -1.9 .5 -1.9-.5 -1.2-1.2 -.4-1.8 -1.4-.9 -1.3-1.2 .7-1.6 1.1-1.2 1.1-1.4 1.3-1 1.7 .4 1.5 .7 1.5 1 .5 1.8 .5-1.7 1.9-1.8 .7-2.4 1.8 .6 1.5 1.1 0 2.9zM88.1 455l-1.1 2.1 -1 1 .5 2.5 -1.4 2.1 .2 2.4 -.3 2.4 -1.9-.5 -1.7-.9 -.5-2.2 1.2-1.8 .5-2.1 -.5-2 .3-1.9 1.5-1.1 -.2-1.3 -.4-1.5 -.4-1.6 .3-1.6 -.7-1.5 1.5-2.1 1-2.3 1.9 1.3 .9 2.2 -.6 2.9 .3 3zM113.8 462l-1.7 1.8 -.5 2.3 -1.6 .6 -2.4 1.5 -1.9-.2 -1.9-.6 .3-1.5 .3-1.5 1.1-1.1 .7-1.3 1.8-1.7 1-.8 1.1-1.4 -.1-1.7 1.1-2 2.2-.9 .9 2.2 .3 2.4 -.7 1.9zM77.5 500l.8 1.4 .2 1.6 0 1.8 -1.1 1.5 -2.4 .3 -2.5-.2 -1.1-1.6 .3-1.9 .4-1.4 .4-1.5 -.5-2.6 1-2.5 1.4-1.6 .6-2 1.6 .5 1.1 1.3 .6 2.6 -1.2 2.5zM99.5 520l-.5 2.9 -1.2 2.2 -1.8 1.2 -.8-1.3 -.4-1.5 .1-2.4 -1.6-1.1 -.9-1.4 .3-1.7 1-2.1 -.3-2.3 1.4 1.1 1.2 1.3 -.4 2.1 .8 1.9 1.8-1zM180.1 435l-1.6 2.5 -.7 1.7 -.7 1.7 -2.3-1.8 -2.8-.7 -2.3 .6 -2.1 1 -2.7-.6 -2.6-.7 -1.4-1.6 -.4-2.1 .9-1.9 .3-2.1 2.2 .8 2.2 .1 2.5-.2 1.9 1.5 1.5-1.5 1-1.7 1.8-.8 1.8-.3 1.6-1.1 2.6 1.4 2.6 1.4 -1.2 2.5zM190.6 422l.6 2 1.6 1.2 -1.4 1.5 -1.3 1.6 -2.1-2.1 -3-.1 -2.3-1.3 -2.2-1 -2.1-1 -2.3-.8 1.2-1.3 .6-1.6 1.2-1.6 1.9-.5 2-.2 2 .1 1.1 1.2 1.2 1 1.8 .1 1.7 .4zM357 487.1l2.2-.6 1.8-1.4 2.2-.7 2.3 .4 -2.1 1.4 -.7 2.5 -1.6 1.7 -1.4 2 -1.7-.5 -1.7 .8 -1.4 .9 -1.6 .7 -1.5 .9 -1 1.3 -1 1.5 -1.8 .4 -.5-1.7 -.5-1.7 -1.5 1.2 -1.4 1.2 -1.9 .3 -1.6 .9 -2.5-.2 -2.5-.1 -2.4 .8 -2 1.6 1.7-1.1 .8-1.9 1-1.7 .7-1.8 1.9-.6 1.8-.7 1.8-.7 1.8-.5 1.5-2.6 2.4-1.7 2.9-.3 2.5-1.5 2.1 .1 2.1 0zM373.4 502.5l.8 1.4 .7 1.4 -.4 1.6 -1.1 1.1 -1 1.4 -1.4 .6 -1.4 1 -1.1 1.2 -1.6-.2 -1.6 .2 -1.5 1.9 -2.2 1.3 -2.4 1.1 -2.4 .9 -1.2 2.4 -1.3 2.2 -2.6 0 -2.7 .5 -1.9 1.9 -1.9 1.7 1.5-1 1.8-.5 .9-1.8 1.7-.9 1.5-1.2 1-1.6 .8-1.7 .6-1.8 1.3-2.5 2.5-1.3 1-1.6 1.5-.9 1.1-1.5 .3-1.7 1.7-.5 1.5-.8 1.2-1.4 1.8-.4 2.2-.5zM354 512.8l.9 2.3 -1.6 .4 -1.2 1.2 -1.1 1.3 -.6 1.5 -1.7 .6 -1.2 1.2 -1.7 .9 -1.7-.5 -.3-1.6 .5-1.5 -1.8 .6 -1.1 1.6 -1.5 1.2 -1.9 0 -2.6 .5 -2.4-1 1.9-.7 1.5-1.4 .9-1.8 1.5-1.4 1.8 0 1.5-.9 1.4 1.2 1.9 0 1.8-.6 2-.1 1.9-.3 1-1.8zM377.5 494.5l1.5 .2 1.5-.6 1.5-.4 1.4-.6 -2 1.6 -2.4 .7 -1.8 2 -.2 2.7 -2.8 .3 -2.2 1.8 -2.2 1.3 -.7 1.7 -1.7 .7 -1.6 .7 -1.4 1 -.3-2.8 1.7-2.3 1.2-2.6 1.7-.5 1.6-.8 1.1-1.4 .5-1.7 .1 1.7 .8 1.5 1-1.2 .8-1.5 1.4-.8zM337.2 552l-2.6-.1 -2.4 1 -.6 1.9 -2.4 .4 -1.9 1.5 -2.6-1.3 -2.8 0 -.4-1.8 .8-1.6 1.8-1.1 2.1-.5 2.7-.4 1.6-1 1.8-1 2.1 .1 1.8-.9 2.1-.2 2 .7 -.8 2.8zM322 560l-1.4 1 -.4 2.3 -2.8 .9 -2.8 1.1 -.7-1.9 -.1-1.9 1.7-1.5 -.6-1.1 -.3-1.7 .5-1.7 2.7-.3 2.6 1.2 1.3 .9 1.2 .9zM338.1 615l.8 1.4 1 1.3 -1.5 1.1 -1 1.7 -1.8 .4 -1.7 .4 -1.7 .8 -1 1.6 -.4-1.7 -1-1.3 -1.7-.4 -1.4-.8 .9-2.5 1.8-2 2.5-1.7 .7-1.5 .3-1.6 .8-2.2 1.7-1.6 1.8-1.6 2.3-.2 .9 1.5 .5 1.7 .6 1.8 1.5 1 -1.5 .8 -1.5 .8 -.8 1.5zM359.6 628.5l-2-.9 -1.8-1.1 -2.2-.9 -2.1 .7 .5 2.3 -.9 2.2 -1.7-.4 -1.8 0 -1.8 .3 -1.6-.9 -1-1.4 -.6-1.6 -1.4-.9 -1.6-.5 1.4-2.1 2.4-.7 1.7-.8 1.9 .5 .4-1.9 1.5-1.3 1.3 1.3 1.8 .2 1.6 .5 1.7-.5 2.1 2.1 2.1 2 .7 1.9zM371.4 618l1.7 2.4 1.4 2.5 -1.8 0 -1.5 1.1 -1.8 .6 -1.7-.7 -1.7-1.9 -2.3-1.1 -.7-1.8 -1.8 .8 -1.9-.3 -1.5-1.4 -1.9-.2 -.2-2.3 .8-2.1 1.6 0 1.5-.2 1.5-.4 1.5-.2 2.2 .5 1.9 1 1.3 2.2 1.9 .2zM350 640l.8 1.5 1.2 1.4 -1.7 1.7 -2.2 .8 -2.5-1 -2.5-1.1 -1.4-1.9 -1.7-.2 -1.1-1.2 -1.3-1.8 -1.2-1.8 1.5-1 1.8-.1 1.6 .6 1.7 .5 2.1-.1 2.1-.2 1.5 .7 1 1.3zM374.3 635l1.1 1.3 1.4 1 0 2.6 -1.4 2 -1.5-.6 -1.1-1.3 -1.6 .2 -1.7-.1 -.3-2.3 1.2-2 -.7-.8 -2.4-1.6 -2.3-1.8 2.6 0 1.9-1.7 2.5-.7 2.6 .5 .6 1.9 -.3 2zM332.1 635l.7 1.5 1.4 1 -1.3 1.6 -.4 2.2 -1.8-1.6 -2.4-.4 -1.5-2.5 .3-1.8 -.3-1.8 -.1-2.2 .9-2 2.4-.2 2.3 .6 -.2 2.1 .2 2.2zM383.2 610l2.3 1.4 1.1 2.6 -2.4 .7 -1.6 1.9 -1.8-1.8 -2.6-.3 -1.9-2.2 -.5-2.3 -1.1-1.5 -.2-1.8 2.1-.9 .9-2.1 2.4 .5 2.4-.1 1.2 1.9 -.5 2.2zM455.3 640l-2.3 1.4 .8 2.5 -.4 2.7 -1.2-1.2 -1.8-.4 -1.7 .3 -1.6 .3 -2.4-1.6 -2.8-.3 1.3-2 1.6-1.7 .3-2.2 1.5-1 1-1.4 1.5-.4 1.6 .1 1.5-.6 1.2-1 2.7 1 2.3 1.7 -1.1 2.3zM476 629.8l-1.3 1 -.8 1.3 -.1 1.8 .5 1.7 -2.1 1.1 -1.6 1.7 -1.9 1.5 -.6 2.5 -.6-1.6 -1-1.3 -.9-1.3 -1.1-1.3 1.5-1.9 1.3-2 -2.1-1.5 -2.6 .2 1-2 1.6-1.7 1.3-1.3 1.3-1.2 1.7-.8 1.9-.2 2.5 1.2 2.8 .3 -.5 1.9zM501.3 619.9l-2.5 1.4 -.9 2.7 -1.6 .7 -1.4 .9 -1.7-.4 -1.7-.1 -1.3 1.1 -1 1.3 -2.1 .4 -2.1 .3 -1.7-.6 -1.7 .6 -1.8-.4 -1.7 .5 1.1-2.2 1.3-2.1 2 .5 2.1-.1 2.1-.3 1.7-1.3 1.9-.1 2.2-1.4 2.6 .3 .8-2.4 1.9-1.7 2 .8zM448.4 612l-.8 2.6 1 2.6 -2-.3 -1.6 1 -1.8-.5 -1.5-1.1 -1.2-1.1 -1.4-.8 -2-.6 -2-1.4 -2.4-.4 -.2-2.1 .6-2.1 1.6-2.1 2.2-1.6 -.3 2.3 .6 2.1 .8 2.2 2 1.2 2.4-1.4 1.7 .1 1.6-.3 1.2 1.1zM512.8 639.2l-.3 1.6 -1 1.2 -1.8 1.6 -2.3 .2 -2.6-.7 -1.6 .3 -1.2 1 -.8 1.3 -1.5 .7 -2-1.7 .9-1.4 1-1.3 1.8-.3 1.2-1.5 1.4-.4 1.5-.1 1.6-.3 1.5-.4 2 .6zM409.7 630l-1.3 2.1 -2.3 .9 -1.1-1.2 -1.6-.2 -1.6 0 -1.4-.7 -.7 1.5 -1.3 1 -2.3-.2 -2.2-.2 -.6-1.7 -1.3-1.3 1.5-1.2 1.4-1.3 1.9 .3 2-.3 2.7-.6 2.8 1 1.6-.3 1.5 .4 1.1 1.1zM397.6 645l-.7 2.2 -1.5 .6 -1.3 1 -1.6-1.2 -2 .1 -.2-2 -2.7-.7 -1.5-2.6 1.9-.6 1.7-1.1 1.1 1.9 2.1 .8 1.3 .6 1.9 0z" fill="#b9c6d0"/>
<g filter="url(#il)" fill="none" stroke="#000" stroke-linejoin="round" stroke-linecap="round">
<polygon points="115,392 330,392 345,470 330,610 200,600 125,545" fill="#000" stroke="none" fill-opacity=".29"/><polygon points="55,400 115,392 125,545 60,540" fill="#000" stroke="none" fill-opacity=".2"/>
<polyline points="177,89 182,102 183,122 167,136 175,147 188,157 163,161 147,167 157,176 167,189 165,204 140,211 133,221 147,232 150,246 127,247 135,259 150,269 147,286 117,284 113,296 130,306 150,322 160,342 150,356 140,352 127,369 122,382 137,389 147,406 163,422 183,426 197,409 210,399 230,377 233,389 223,409 237,419 242,409 250,422 263,426 270,442 283,452" stroke-width="50" stroke-opacity=".23"/>
<polyline points="450,481 456,474 458,478 452,490 445,502 438,514 431,524 426,537 423,550 429,560 439,567 442,577 433,583 422,588 414,596 411,607 414,617 411,628 416,640 428,652 424,668 436,678 458,671 478,664 484,654 497,647 510,637 519,626 524,613 530,600 537,588 543,578 546,583 540,597 535,612 540,626 563,630 583,623 600,613 617,607 637,600 659,597 660,593 680,587 690,580 707,587 717,603 727,597 733,580 750,567 767,557 780,547 797,547 813,540 833,533 853,523 873,517 893,510 903,497 907,483 917,477 930,483 940,497 950,513 960,520 973,510 967,487 960,467 973,477 987,497 993,510 1007,500 1000,480 983,450 977,433 993,443 1007,463 1017,483 1033,477 1040,460 1053,453 1070,440 1077,420 1083,407 1097,413 1107,433 1120,447 1137,443 1153,433 1173,420 1187,407 1193,400" stroke-width="55" stroke-opacity=".23"/>
<polyline points="1100,440 1219,419 1239,426 1252,409 1269,422 1296,406 1306,396 1319,409 1329,422 1346,416 1359,422 1376,419 1392,406 1406,396 1419,382 1432,372 1446,379 1459,366 1472,349 1486,339 1496,322" stroke-width="70" stroke-opacity=".23"/>
<polyline points="330,600 400,640 470,660" stroke-width="50" stroke-opacity=".2"/>
</g>
<path d="M1170 1011.7l1.3-2.3 1.5-2.2 1.1-2.3 1.2-2.3 1.1-2.4 1.1-2.4 1.5-2.1 1.2-2.4 1.2-.8 1.3-.9 1.3-.6 1.3-.8 1.2-.9 1.2-1 1.2-.8 1.3-.9 1.2-.9 1.2-.8 1.4-.7 1.2-.8 1.3-.9 1.2-.8 1.3-.8 1.2-.9 1.5-.5 1.4-.4 1.5-.5 1.5-.5 1.4-.6 1.5-.5 1.4-.6 1.5-.4 1.4-.7 1.5-.5 1.5-.4 1.5-.5 1.5-.4 1.4-.5 1.4-.6 1.4-.7 1.6-.3 1.7-.2 1.6-.2 1.6-.2 1.7-.3 1.6-.1 1.6-.1 1.7 .1 1.6-.4 1.6-.2 1.6-.4 1.6-.2 1.7-.2 1.6-.4 1.6 0 1.6-.3 1.6-.7 1.4-.9 2.1 0 2.1 .2 2.1-.1 2.1 0 2.1 .4 2.1 .1 2.1 .3 2.1 0 2 .4 2.1 .3 2 .5 2.1 .3 2.1 .5 2.1 .2 2.1 .2 2.1 0 2 .9 2 1 2.1 .9 2.1 .8 2.1 .9 2 .9 2.2 .5 2.1 .8 .8 2.5 .9 2.5 .8 2.5 .9 2.5 -1.4 1.1 -1.3 1.2 -1.1 1.4 -1.2 1.3 -1.4 1.1 -1.2 1.3 -1.1 1.4 -1.3 1.2 -2.3 1.7 -2.1 1.8 -2.1 1.9 -2.3 1.6 -1.9 2.1 -1.9 2 -2 2 -2.1 1.9 -1.7-.1 -1.7-.2 -1.7-.3 -1.7-.3 -1.7-.1 -1.7-.1 -1.7 0 -1.7 .1 -1.7-.2 -1.7-.1 -1.7-.2 -1.7-.1 -1.7 0 -1.7 0 -1.7 0 -1.7 .1 -1.7 .1 -1.7 .1 -1.7-.1 -1.8 0 -1.7-.1 -1.7 0 -1.7-.2 -1.7-.1 -1.7 .2 -1.7 .2 -1.7 .1 -1.7 .1 -1.7 0 -1.7 .2 -1.7 0 -1.7-.1 -1.7-.1 -1.7 0 -1.7-.1 -1.7 0 -1.7-.1 -1.7-.2 -1.7-.2 -1.7-.3 -1.7 0 -1.7 .1 -1.7 0 -1.8-.1 -1.7 .1 -1.7-.1 -1.7 .2 -1.7 .3 -1.7 0 -1.7 0 -1.7 .2 -1.7-.1 -1.7-.1 -1.7-.1 -1.7 0 -1.7 .1 -1.7 .4 -1.7 .3 -1.7 .2 -1.7 .3 -1.7 .3 -1.7 .1 -1.7 0zM1352.3 870l1.8-.6 1.3-1.5 .4-1.8 1.1-1.6 1.5-1 1.6-.7 1.5-1.2 .8-1.6 1.7-.8 1.6-.8 1.8 .3 1.8 .5 1.6-.6 1.6-.8 1.7-.3 1.6-.8 1.5-1.1 .8-1.6 1.3-1.2 1-1.5 .6-1.8 1.5-1.2 1.5-1.1 1.8-.5 0 1.6 1 1.4 -.3 1.7 .8 1.5 1.2 1 1.1 1.3 1.3 1 1.5 .5 1.5 1 1.6 1 1.8 0 1.8-.4 1.5 .9 1.7 .5 1.8-.3 1.7 .6 2.1-.1 2-.7 2.2 .2 2.1-.6 1.8-1.2 2.1-.8 2.1-.5 2.2 .4 2 1.1 1.9 1.2 1.5 1.9 2.4 .5 2.2 .8 2.4-.5 2.1-.8 2.2-.9 1.5 1.3 1.2 1.5 .9 1.8 -.3 2.1 -2 .5 -2.1 .4 -2.2-.5 -1.9 1.1 -2.1 .5 -2.1-.6 -2.1 .7 -2.1-.5 -1.8 .5 -1.8 .3 -1.7 .4 -1.8 .4 -1.6 .7 -1.4 1.2 -1.7 .7 -1.6 .8 -1.3 1.4 -1.7 .7 -1.6 .9 -1.4 1.1 -1.8-.5 -1.9 .2 -1.7-.9 -1.9 .5 -1.2 .9 -1.2 1 -.6 1.5 -1.3 .9 -.5 1.5 -1.2 1.1 -.2 1.6 -.5 1.5 -1.6-.8 -1.8 .3 -1.6-.9 -1.5-.7 -2-.4 -1.2-1.5 -1.8 .3 -1.8 .3 -2.6-.6 -2.6-.3 -2.3-1.5 -2.5-.9 -1.5-1 -1.4-1.2 -1.8 .2 -1.8-.2 -1.7-.7 -1.6-.5 -1.8 .3 -1.7-.2 -.7-1.9 .1-2 -1.8-.9zM290 205l2.6-.1 2.4-.8 2.6-.2 2.4-.9 1 1.3 .8 1.5 1.1 1.2 .8 1.5 .9 1.4 1.2 1.1 1 1.4 1 1.2 .9 1.5 .9 1.4 1.2 1.2 1.3 1.1 1.4 1 1.6 .5 1.3 1 1.6 .7 1.3 2.4 1.6 2.3 2.2 1.6 2.1 1.9 1 2.6 .9 2.6 1.3 2.4 1.6 2.2 .3 2.9 1.2 2.7 .5 2.9 1.5 2.5 1 2.7 .8 2.8 .6 2.8 1.1 2.7 -.1 2 0 2.1 -.6 2 -.8 1.8 0 2.1 -.5 2 .2 2 -.2 2 -2 1.4 -2.3 1 -2.4 .8 -2.3 .8 -.9-2.1 -1.1-1.9 -1.1-2 -1.4-1.8 -1.7-1.4 -1.7-1.6 -1.4-1.7 -1.7-1.5 -.4-1.7 -.8-1.5 -1.3-1.1 -.9-1.5 -1-1.3 -.8-1.5 -1.5-.9 -1.1-1.2 -.9-1.5 -.5-1.6 -.4-1.6 -.5-1.6 -.7-1.5 -.7-1.5 -.8-1.5 -.7-1.5 -.1-1.6 -.4-1.5 -.4-1.6 -.7-1.4 -.6-1.5 -.9-1.3 -.9-1.3 -.5-1.5 -.8-1.4 -1.1-1.2 -1-1.2 -.8-1.4 -.3-1.6 0-1.6 -.8-1.5 -.7-1.4 -.2-2.2 .4-2.1 -.8-2.1 -.5-2.1 -.2-2.1 0-2.2 -.5-2.1zM317 183l2.6 .2 2.4 .8 .5 1.8 .1 1.9 .2 1.8 .7 1.8 .4 1.8 .6 1.8 .3 1.8 -.2 1.9 .7 1.8 1.1 1.5 .7 1.7 .6 1.7 .9 1.7 .4 1.8 1.1 1.5 .9 1.7 -2.2 .7 -1.8 1.3 -1.2-1.5 -1-1.7 -.6-1.8 -.5-1.9 -.7-1.7 -.6-1.8 -.8-1.8 -.6-1.8 -.8-2.1 -.3-2.1 -.5-2.2 -.5-2.1 -.3-2.1 -.5-2.2 -.4-2.1zM683.7 186.8l-1.5-.5 -1.5-.3 -1.1-.9 -1.4-.7 -1.3 .7 -1.5 .6 -1.6 .2 -1.5-.7 -.2 2.4 .6 2.3 -.3 2.3 1 2.2 -2.1 .6 -2.2 .5 -1.9-1 -2.2-.5 -2.1 .8 -1.1 2 -1.8 1 -1.9 1.1 -2.1-1.3 -1.9-1.7 -.2-2.5 -1.1-2.3 -1.9-1.5 -1.9-1.5 -2.3-1 -2.5 .4 1.9-2 2.2-1.7 1.6-2.2 .8-2.7 .1-2 .2-2 -.8-1.9 -1.7-1.1 .4-2 -.7-1.9 2.3-.3 2.3 .8 2.3-.7 1.9-1.6 1.5-1.1 1.7-.6 1.7-.9 1.6-.9 1.8 .3 1.9 .2 1.8 .5 1.7 .6 1.5 1.4 1 1.9 1.9 .9 1.3 1.6 2.1 .1 2 .7 1.8 1 1.7 1.3 .2 2.3 1.2 2 -.1 2.4 1.6 1.8 -.4 1.5 -.8 1.4 -1 1.1zM919.4 189.6l-1.6 1.5 -2.1 .7 -2.2-.5 -2.2 .2 -1.7-1.2 -1.5-1.5 -1.8-1.3 -2.2 0 -2.1-1.8 -2.3-1.5 -1.3-2.4 -1.4-2.3 -.3-2.8 .5-2.7 -.3-2.9 -2-2.1 -.2-2.2 -.8-2.1 -.9-2.1 -1.1-1.9 -.6-1.5 -.8-1.4 .6-1.6 -.6-1.7 -1.7 0 -1.5-.6 -1.3-1.1 -1.6-.4 -1.5-.8 -.9-1.4 -1.3-1 -1.5-.5 -1.3-1.4 -.1-1.9 .6-1.7 .4-1.7 -.6-1.7 -.6-1.6 -1.4-1 -1.4-1 1-2.8 -.9-2.9 0-2.9 -.5-2.8 .8-2.7 1-2.8 .7-1.4 0-1.5 -.6-1.4 -.5-1.4 1.2 1.6 1.6 1.4 2.1-.6 2 .9 1.4 1.3 1.3 1.4 1.3 1.4 1.5 1.2 1 1.8 .9 1.8 1.6 1.3 2 .4 .8 1.9 1.6 1.2 .5 1.9 .6 1.8 .5 1.6 1.3 .9 .7 1.4 .9 1.3 1 1.2 .8 1.4 1 1.2 .9 1.2 1.9 .7 1.9 1 1.8 1.1 1.2 1.8 1.9 1.7 1.4 2 1 2.4 -.8 2.5 .7 2.1 1.8 1.3 .3 2.1 -.4 2 1.4 1.5 1.4 1.4 1 1.7 .5 2 -1 2.1 .4 2.3 -.2 2.4 -1.7 1.7 .3 2.4 1.6 1.9 -1 2.2zM899.9 191.5l-.1 2.2 .1 2.2 -.9 2 -.6 2 -1.8 .9 -1.8 .8 -1.5 1.3 -.5 2 -2.4-1.5 -2.7 .2 -2.2 1.2 -2.3 .8 -2.6-.3 -2.1 1.5 -1.3-2.3 -1.4-2.2 -1.2-2.5 -2.2-1.7 1.4-1.5 .9-1.7 .8-1.9 1.4-1.4 -.1-2.2 1.4-1.6 1.4-1.5 .7-1.9 2.5 1.4 2.8 .4 1.4 .6 1.6 0 1-1.1 1.6-.4 1-2.4 -.7-2.6 .1-2.6 1.6-2.1 2.7-.7 2.1-1.8 .6-2.8 2-2.1 2.2 .1 2.2-.7 2.1 .9 2.2 .4 1.2 1.2 .5 1.6 .5 1.5 1.3 1.1 .3 1.7 -.9 1.5 0 1.6 -.4 1.6 -2.1 1.1 -1.1 2.1 -.7 2.2 .1 2.3 -2.3 1 -1.1 2.2 -2.4 .4zM913.8 216l.5 2.4 .1 2.5 2.3 1.3 1.2 2.2 -1 1.8 -1.5 1.5 -1.3 1.6 -.4 2.1 -1.5-1.6 -2.1-.6 -1.2-1.9 -1.9-1.1 -2.2 .3 -2-.7 -1.3-2.3 -1.4-2.2 .7-2.7 .9-2.6 -.8-1.8 -1.7-1 -.5-1.8 0-1.8 0-2.2 1.4-1.6 1.1-1.8 -.3-2.2 1.9 .1 1.8-.6 .8-1.8 1.6-1.1 .7 2.3 .7 2.3 1.3 2 1.2 2 .6 1.8 -.5 1.9 -1.2 1.5 -.2 1.8 2 1.2zM1086.1 236l1.6 .3 1.1 1.2 1.6 .6 .8 1.5 1.6 .5 .8 1.6 .7 1.4 .5 1.5 -2.6 .5 -1.8 1.8 -2.2 1.6 -2.7-.2 -2.3-1.6 -.9-2.6 -2.5-1.2 -2.8 .2 -2-.6 -1.7-1.1 -2.9 .1 -2.6-1.1 -1.3-2.3 -1.7-2.1 .6-2.6 1.1-2.4 -1.2-2.1 .1-2.4 1.4-1.9 .8-2.2 1.8 1.9 2.7 .2 2.5-.3 2.4 .7 .8 1.6 .4 1.7 1.2 1.3 1.2 1.2 1.4 1 .9 1.4 1.7 1.4zM1076.6 272l-1.7 1.8 -1 2.2 -1.6 1.2 -1.4 1.6 -2-.6 -1.9-.9 -1.7-2.3 -2-.7 -1.9 .9 -2.1-1.1 -1-2.1 .2-1.7 -.3-1.6 -.7-1.6 -1.1-1.2 1.7 .1 1.6-.5 1.6-.8 1.8 .5 .3 1.8 1.2 1.4 1.3 1.2 1.1 1.4 1.4-1.2 .8-1.7 2.9 .1 2.7-.7 .9 2.2zM1052 269l1.4 1.2 1.8 .3 .9 1.5 .5 1.7 -1.5 .9 -1.1 1.2 -1.5 .7 -1.4 .9 -2.2 .4 -2-.8 -2-.7 -1.9-1 .4-2.8 -1.3-2.5 -2.6 .2 -2.4-1.8 -2.8-.9 -3 .3 -2.7 1.2 1.6-1.9 1-2.2 1.2-.9 1.6-.1 .5-1.5 1.2-1 2 .3 1.4 1.6 2-.1 1.9-.1 1.1 1.9 .9 2 1.7 .6 1.8-.5 1.6 1.1zM805.6 206l-1.6 .4 -1.3 1.2 -1.9-.3 -.1 1.8 -.7 1.7 -1.8 1.7 -2.3 .6 -1.4-1.6 -.5-2 1.4-1.5 .2-2 1.6-1.6 .7-2.1 2.1 .1 1.7-.4 1.3-1.2 2.2 .3 2 .7 -.5 2.2zM840.6 214.2l-1.6 .8 -1.1 1.4 -1.7 .4 -1.8 .1 -.5 1.6 -.2 1.5 .2 1.5 -.8 1.4 -1.3 .9 -2.7 .8 -2.8-.7 -2.5 1.3 -2 1.9 -2.6-1.3 -2.5-1.6 .5-1.5 .9-1.2 1.4-.9 .9-1.3 1.6 .6 1.6-.6 1.2-1.1 1.6-.2 .8-.9 -1.9-.8 -1.3-1.6 .6-1.6 1-1.4 .8-1.6 1.5-1.1 2.5-.8 2.4 1.2 2.3-.7 2.3-.8 1 2.3 -.6 2.5 1.5 .5zM996.4 328.4l-1.3 1.7 .7 2.2 -1 2 -.5 2.1 -2.1-.7 -2.2 .2 -1.9-.6 -2 .1 -1.2-1.2 -1.2-1.2 2.7-1.1 2.1-2 1.9-.9 -.4-2 .1-2.1 1.8-.3 1.6-1 1.3-1.3 .5-1.8 1.4 1.9 1.6 1.8 -1.6 1.8zM1005.5 344l-.1 2 .2 2.9 -2.1 1.1 -1.3 2 -3 .1 -2.5 1.7 -1.8-.8 -1.3-1.7 1.6-1 1.5-1 1-1.6 1.3-1.3 -2.3 .5 -2.1-.9 -.4-2.3 -1.7-1.6 1.6 .2 1.5-.4 1.1-1 1-1.2 2.5-.9 2.5 .8 1.1 1.2 .7 1.4zM1030.9 306l-1.3 .9 -.1 1.7 -1.5 2 -1.7 .6 -1.7 .7 -.7-1.7 .1-1.9 1.3-2.3 .9-1.1 0-2 1.8-1.7 2.4 .6 1.5 .5 1.4 .6 -1 1.7zM915.5 336l-.8 1 .3 2.4 -1.1 2 -.9 2.1 -1.4-1.3 -1.7-.9 .6-2.3 .9-2.1 .8-.9 -1.9-.6 -1.2-1.7 1.5-1.9 2.4-.9 2.9 .1 0 1.7 -.2 1.7zM741.4 169.6l-.5 2.4 -1.5 1.9 -.5-1.8 -1.5-1.2 -1.4-1.2 -1.5-1.1 -2 .1 -1.6-1.2 -1.6-1.2 -.5-2 -1.8-.4 -1.5-1.1 -1.5-1.1 -.7-1.8 -.3-1.8 .1-1.8 -1-1.5 -1-1.6 .2-2.8 -1.1-2.6 -2.1-.5 -1.2-1.6 -1.7-1 -1.6-1.1 -.2-2 -.5-2 -1.7-1.2 -1.4-1.6 -.5-2.2 -.5-2.2 -1-2 -1-2 1.6 1.5 2 .9 1.8 1.5 2.3 .2 .7 2.3 2 1.3 2.1 1 2.3-.1 .9 1.3 .2 1.6 1.5 .8 .9 1.3 1 1.2 .9 1.4 1.7 0 1.3 1.2 1.2 2.1 -.1 2.4 1.6 1.6 1 2.1 -1 2.7 .6 2.1 1.5 1.6 .4 2.1 -.3 2.1 1.5 1.5 1.2 1.8 1.9 .9zM753.5 177.2l.7 1.4 -.3 1.6 -.1 1.5 0 1.5 -1.9-.3 -1.8-.8 -.9-1.9 -1.9-.9 -1.4-1 -.4-1.7 -1.2-1.2 -.6-1.5 -1.1-1.3 -1.4-1.1 -.8-1.6 .1-1.8 -.9-1.3 0-1.5 .6-1.5 0-1.5 -1.4-1.9 -.7-2.2 -1.8-1.5 -1.2-1.9 -.3-2 .3-1.9 2 1.1 2.1 1 1.7-1.4 1.6-1.6 1.7 .9 1.7 .6 1.4 1.3 .8 1.7 .8 1.7 -.2 1.8 1.4 1.4 .2 1.9 .3 1.9 1.3 1.5 -.5 1.8 -.4 1.9 .8 1.5 -.4 1.7 .5 1.4 .9 1.2 .7 1.4zM716.6 148.9l-1.6 1.1 -1 1.6 -1.1-1.3 -1.6-.7 -1.4-.7 -1.7-.5 -1.6-.9 -.6-1.7 .5-1.8 -.4-1.7 -.9-1.4 -.4-1.6 -.9-1.5 -1.6-.5 -1.5-1.2 -.5-1.9 -1.3-1.4 -1.8-.4 -.7-1.8 .7-1.8 .5-2.5 -.9-1.6 -.1-1.7 -.4-1.7 .4-1.7 1.8 0 1.4 1.2 1.4 1.2 1.8 0 .9 1.3 .5 1.4 .6 1.5 1.4 .8 .2 1.5 .2 1.5 -.1 1.5 .6 1.4 .3 1.6 .4 1.5 1.8 1.1 1.1 1.8 1 1.8 1.7 1.2 .6 1.8 .5 1.8 .3 2.1zM684.6 123.9l-.2 2.2 -1.1 2.4 -.6 2.7 -2.1-1.2 -1.5-1.9 -2.1-1.3 -2.4-.4 -1.1-2.2 -1-2.2 -2-1.5 -2.1-1.2 .7-2.2 .2-2.4 2-.5 2 .2 1.7 0 1.4 .7 1 1.3 .9 1.3 .6-2 -.5-2 -.8-1.9 0-2 2.5-.5 2.6-.2 2.6 .4 2.2 1.6 .9 2.3 1 2.2 -.4 2.5 .5 2.5 .8 2 -.4 2.2 -2.8 .2zM657 106.1l1.8 1.4 .6 2.1 .1 1.6 -.4 1.6 .1 1.6 -.4 1.6 -2.4-.2 -2.4 .6 -1.8-1.6 -2.2-1.1 -1.1-1.6 -.4-2 .8-1.9 -.8-1.9 -1.7-2 -1.8-1.8 .8-2.8 1.8 .6 1.4 1.3 1.6 1.1 2-.2 .2-2.9 -.7-2.9 1.9-.5 1.9 .6 1.9-.1 1.9 .1 2.6 .3 2.1 1.3 .7 2.4 1.7 1.9 -.5 2.7 -2 1.9 -1.9 .4 -1.9-.1 -1.5-1.4zM655.9 170l-2.3 .1 -2.3 0 -1.4 1.8 -1.9 1.4 -1.6 1.4 -1.8 1 -2.2 .8 -2.4 0 -1.6 1.9 -2.1 1.2 -2.4 .1 -2.4 .8 -2.8 .2 -2.7-.9 -2.9 0 -2.2-1.9 .7-2 1.3-1.7 -.3-2.1 .4-2.1 2-.2 1.4-1.4 1.1-1.5 1-1.6 2.6 .3 2.4-.9 1.9 1.8 2.4 .8 .5-1.9 1.7-1 1.4-.9 1.5-.8 .5-1.6 1.2-1.2 1.6-.5 1.8 .3 .8-1.6 1.5-.9 1.5 2.4 2.7 .7 2.3 1.3 2.6 .4 .8 2.4 -1 2.3 -1.3 2zM611 156.3l.1 2.5 -.3 2.4 -1.7-.1 -1.7 0 -1.6 .6 -1.4 .9 -2.7-.3 -2.7 .2 -2.6-1.2 -1.6-2.3 .9-1.9 -.1-2.1 -.4-2.1 -.8-1.8 -.1-2.5 -1.4-2.1 -1.9-1.7 .8-2.1 -.8-2 1.6-1.3 1-1.7 .2-1.9 .6-1.9 1.9 .6 1.1 1.6 1.8-.9 1.9 .5 .3 1.8 1.4 1.2 1.1 1.4 1 1.4 1 1.9 -.5 2 -.1 2.1 -1.1 1.7 .7 2 1.8 .9 1.5 1.3 1.7 1.2zM646.5 158l-2.3-.6 -2.2 .5 -2.3-.3 -1.9-1.1 -.7-1.5 -.9-1.4 -1.6-.5 -.9-1.4 -1.6-.6 -1.7 .2 -.9-1.5 -1.7-.6 -1.4-1.5 -1.8-1.2 -.6-2.1 -1.3-1.7 -1.1-2.1 -2-1.3 -1.6-.4 -1.1-1.1 -1.2-1.2 -.2-1.6 -.7-1.4 -1.1-1 -1-1.3 -.3-1.5 -1.2-1 -.8-1.3 -1.2-.8 -1.2-1 1.6-1.8 1.4-2 1.1 1.6 1.6 .9 1.3 1.4 0 2 1.8 .3 1.9-.2 1.9 .4 1.3 1.4 .4 2.5 1.7 1.7 2.3 .8 1.7 1.7 -1.1 1.8 -.5 2 1.4 2.2 2.6 .8 2.3 1 2.2 1 1.6 1.7 .8 2.2 1.7 1.6 2.4 .3 1.5 1.5 1.4 1.7 .6 2.2zM599.9 110.7l-1 1.7 -1.2 1.5 -2.7 .3 -2.8-.1 -1.5-.6 -1.7-.3 -1.3-1.1 -1-1.3 -.5-2.4 -1.4-1.9 1.4-2.2 -1.8-1 -.8-2 -1.4-2.4 0-2.7 -1.1-2.6 -2.3-1.5 2.1 1.1 1.9 1.6 2.5-.5 2.3 1.1 1.8 .9 1.1 1.6 .1 2 1.5 1.5 1.1 1.4 1.6 .8 .8 2.5 1.8 .1 1.2 1.4 .6 1.6zM566.7 331.8l2 1.3 1 2.3 -1.3 1.7 -1.9 1 -2.1 1 -2.3 .1 -2.1-.6 -2.2-.5 -1.8-.7 -1.4-1.3 -1.6-1.2 -.7-1.9 -2.7-.8 -1.7-2.4 .2-1.8 -1-1.5 2.6-.5 2.6-.3 1.9-.4 1.9-.2 1.8-.8 .8-1.8 1.6-1.1 1.9 .3 1.7-.1 1.5 .5 1.1 1.2 1.1 1.2 1.6 .2 1.5-.3 1.5 .2 1.5 0 -1.3 1.7 -2.2 .6 -1 1.8 -1.5 1.4zM581.6 322l-1.6 .2 -1.2 1.2 0 1.5 .3 1.5 -2 .6 -2.1-.3 -2.5 .1 -2.4 .5 -2.3-.9 -2.3-1 .8-1.9 1.3-1.5 1.9-2 1.7 .2 1.6-.6 .8-1.6 1.4-1.2 2.8-1 3-.1 2.2 .9 1.2 2.1 -1 1.9zM1757.3 961.4l.4 1.6 .2 1.6 -.5 1.7 -1.2 1.1 -.3 1.5 -.2 1.5 -.7 1.5 .2 1.6 -2.3-.2 -2.1 1.1 0-2.5 -1.4-2.1 -1.2-1.8 -1.3-2.6 -1.1-1.7 -.4-2 -.1-2.1 -1.1-1.7 -.5-1.5 .6-1.5 .7-1.4 0-1.6 1.5-.6 .9-1.3 .5-1.6 1.1-1.1 1.6 1.7 2.3 .7 1.6 1.1 1.6-.9 1.3-1.4 .4 2.4 .5 2.5 -.7 1.9 .4 2.1 -.3 2zM1770.5 975.8l0 1.8 -.5 1.6 -.9 1.6 -.4 1.7 -2.6-1.4 -.1-1.7 -.5-1.6 -1.1 1.6 -.8 1.9 -2-1 .5-3 .4-2.9 1.1-2.3 .4-2.5 -.1-1.6 -.1-1.6 1.2-1.1 .8-1.3 -.4 1.6 .3 1.6 .9 1.5 .2 1.6 0 2.5 2-.7 1.2-1.8 -.8 2.8zM1503.6 980l-.7 2.4 .9 2.3 -.4 2 -1.6 1.2 .6 1.9 -.7 1.8 -2.3-1.5 -2.2-1.4 -2.7-.1 -2.5 1.1 -1.4-1 -1.1-1.3 -1.7 .4 -1.5-.9 -1.9-2.1 -2.7-.7 1.7-1.7 .2-2.4 -.4-1.8 -.1-1.8 -.8-2 .9-2.1 .2-2.2 -1.2-1.8 2.7 .4 2.3-1.4 2.6-.6 2.2-1.3 1.9 2.1 .6 2.7 .6 2.6 .8 2.6 .8 1.4 1.5 .7 2.7 1.3zM1795.5 438l-2.1 2 2.4 1.5 1.6 2.3 -1.6 .3 -1.1 1.3 -.7 1.4 -1.2 1 -2.7-.7 -2.5-1.4 -.4-1.6 -.2-1.6 -1.8-.7 -2.2-1.8 -.6-1.8 .6-1.8 1.8-2.3 2.8-.7 2.1 1.1 2.2 .9 1.9-.4 1.9 .3zM1801.6 583.8l-1.3 2 -1.4-.8 -1.5-.3 -1.4-.9 -.4-1.6 -2 .3 -2.1 1.1 -2.2 .2 -2.4 0 -1.9-1.3 -1.8-.8 -1.2-1.4 -.3-1.9 -1.2-1.5 1.9 .1 1.9 .2 1.8-.6 1.7-.7 1.3 1.1 1.4 .9 1.8-.2 1.5 1 -.1-1.6 0-1.6 1.9-.3 1.8 .7 1.4 1.1 1.8-.2 1.7 .1 1.5 .9 1.9 2.2 1.2 2.6 -2.7 .4zM1249.7 236.7l1.5 .8 .7 1.6 1.5 .7 1.1 1.2 1.1 1.3 .6 1.5 1.1 1.1 1.2 1.1 1.3 1.2 1.6 .7 1.4 .9 1.6 .8 1.9-.1 1.3-1.3 1.8-.1 1.8 .1 -.2 1.7 -.3 1.7 -.1 1.8 -.8 1.6 -.9 1.5 -1.7 .7 -1.8 .4 -1.1 1.5 -1.7-.5 -1.8-.1 -1.8 0 -1.8-.4 -1.4-1.1 -1.4-1.3 -1.7-1 -1.9 .2 -1.8-.7 -1.2-1.4 -1.6-.9 -1.8-.3 -1.6-1.2 -2-.4 -1.6 1.3 -2.1-.1 -1.6-1 -1.8-.5 -.2-1.9 -1.3-1.5 -.3-1.8 -.8-1.6 -.9-1.5 -1-1.4 1.3-.9 1.4-1 1.2-1.2 .6-1.6 -1.6-.1 -1.6 .1 -1.7 .5 -1.5-.6 -1.1-1.4 -1.6-.4 -1.7-.4 -1.1-1.2 -.7-2.4 -1.9-1.5 -1.3-2.1 -2.4-.8 -1.9-1.3 -2.1-1.1 -2.2-.7 -2.2-.9 1-1.3 1.2-1.2 1.3-1.2 .5-1.6 1.1-1.2 1.2-1.2 1.1-1.2 1.1-1.3 .6 1.9 1.3 1.5 1.8 .7 1.5 1.4 2-.8 2 .4 2.1 .8 1.2 1.8 1.9-.3 1.9-.1 1.4 1.3 1.9 .7 1.7 .8 1.9-.2 1.8 .3 1.8 .6 1.5 .5 .9 1.2 .8 1.3 .9 1.2 1.6 .4 1.1 1.2 1 1.2 .4 1.5 1 1.9 2 .7 2.1 .3 1.7 1.1 -2.2 .4 -1.4 1.7 -2.1 .1zM1300.8 243.7l.8 1.8 0 2.1 .9 1.7 .7 1.9 -2.6 .8 -2.7 .4 -1.6 2.4 -2.7 1 -2.9-.1 -2.7-.8 -2.2 1.8 -2.9 .5 -2.2-.1 -2.3 .2 -2-1.1 -1.8-1.2 -2.4 0 -1.9 1.5 -2.1-.9 -2.2-.2 -2.6 .6 -1.7 2 -2.4-.6 -2.5 0 .6-2.1 -.5-2.1 -1.8 .5 -1.8-.1 -1.9-.4 -1.5-1.2 -1.8-.6 -1.8 .7 -1.6 .8 -1.6 1 -1.9-1.9 -2-1.8 -2.7 0 -2.7-.2 -2.6-.9 -2.5 1.2 -2.7-.1 -2.2-1.5 2.2-1.9 2.9 0 1.2-2.5 2.2-1.8 2.5-.8 2.6 .2 2.6-.7 2.6-.2 2.6-1.5 3 .5 2.4-1.6 2.7-.8 2.9 .8 3-.2 1.3 .8 1.4 .7 1.3 .9 .4 1.6 .4 2 -.1 2.1 -.4 2.2 1 1.9 1.5-.8 .7-1.4 1.2-1.2 1.6-.3 1.6-.3 1.5-.2 1.5-.5 1.6 .1 .8-1.7 1.8-.6 1.8-.3 1.7 .4 1.4-1 1.6-.4 1.6-.2 1.6-.6 1.5 .4 1.7 .2 1.6 .3 1.7-.2 1.4 1 1.5 .9 1.7 .1zM1302.1 225l.3 2.5 0 2.6 -1.9 0 -1.5 1 -1.8-.2 -1.6 1 -1.7 1.9 -2 1.6 -.8 2.4 -1.1 2.2 -1.9-1.9 -2.7-.5 -2.6-.2 -2.5-.4 1.7-2.2 1.5-2.4 .9-2.6 .7-2.8 -2.5-.5 -2-1.5 -1.8-2.3 -1-2.7 1-1.9 -.6-2 .3-2.1 1.5-1.3 2.4-1.2 2.6 .1 2.4 1.2 2.6 0 1.5 1.2 1.1 1.6 2 .5 1.3 1.5 2 1.9 2.3 1.3 .5 2.3zM285 262.7l-1.1 1.6 .2 2 .5 1.8 1.2 1.4 -1 1.4 -1.5 .6 -1.1 1.4 -.1 1.7 -.4-2.6 -1.6-2.1 -.6-1.7 .3-1.8 .1-2.7 1.3-2.4 .6-2.5 -.9-2.4 1.4-.8 .7-1.5 .8-1.4 -.1-1.7 1.7-1.2 2 0 0 1.8 .7 1.6 -.1 1.8 -1 1.5 -1.2 1.3 -.5 1.7 -1.4 .9 -.9 1.6zM276.6 238l-.2 1.2 .2 2.2 .5 2.1 -1.4 1.7 -.7 2 -1.6-.5 -1.3-1.2 .2-2.4 -.6-2.2 .6-1.4 .4-1.5 -.2-2.2 1.1-1.3 .8-2.2 .6-2.3 1.8-.7 1.9-.8 .7 1.6 -.6 1.6 -.1 1.6 -.1 1.6 -1.2 1.4zM248.4 216l-.8 2.6 -2.6 .8 -2.5-.8 -1.6-.5 -.9-1.4 -2 1.3 -1.6-.7 -2.1-1.3 -1.8-1 -.8-1.9 2.8 .4 2.7-.4 1.4 .7 1.4 .7 .7 .8 2.6-.4 2.5 .8zM232.7 250l-1.6 1.1 -.5 2.3 1.2 2.1 -1.4 1 -.4 1.7 -1.6-.1 -1.4 .9 -.6-2.2 -1.3-1.9 -.3-2.7 1.6-2.2 2.6-1 .2-1.6 -.3-2.1 -.5-2.1 .9-2 .7-2 1.5 .9 1.7 .1 1.6 2.4 -.3 2.9 -1.1 2.2zM299.8 279.4l-.8 1.8 -1.2 1.6 -1.6 .4 -1.6 .4 -1.4 .8 -1.4 .8 -1.4 .4 -1.1 1.4 -.8 1.5 -1.5 1.2 -1.6 1 -1.8 .5 -1.4 1.3 -1.6-.7 -1.7-.4 2.8 .3 2.3-1.5 2-1.8 1-2.5 .7-1.2 1-1.9 2.6-.7 1.9-2.2 2.9-.8 1.8 .2zM312.7 292l-.1 2.1 -2.1 1.3 -2.5 1.1 -1.6-.2 -1.6 .2 -.9-2.6 .3-1.9 1-1.3 .4-2.1 1-2 1.4-1.8 1.5 1.7 1.1 1.9 -.7 2.7zM1486.6 708.4l-1.3 1.5 -.1 2 1.1 1.6 -.2 2 -1.8 2.3 -.8 2.8 -1.7-.7 -.7-2.5 .9-2.4 .8-2.6 .8-2.6 -.9-2.4 1-2.3 .5-2.4 .2-1.5 -.1-1.6 1.2-1 .8-1.4 .7-1.6 .5-1.6 .9-1.6 1.1-1.3 .9 2.6 -.3 2.8 -2 2 -.3 2.9 -.7 1.3 -.6 1.4 -.7 1.4 -.1 1.6zM1473.4 732.9l-.6 1.6 .3 1.6 -.3 1.7 -.7 1.5 -1.7 .5 -1 1.4 -.9-2.7 1.1-2.7 -.6-.4 -1.5-.3 -.2-2.1 1-2 .9-2.3 1-2.3 1.5-2 1-2.3 -.3 2.2 .6 2.1 -.2 2.5 1.1 .5 -.8 1.7zM1461.9 761.8l-1.8 .4 -1 1.5 -.2 1.7 -.6 1.6 -2.3 1.1 -.8 2.3 -1.5-1.2 1.4-2.6 .3-2.9 .2-1.8 -1-1.6 .3-1.8 .3-2.1 1.4-1.8 .1-2.2 .9-2 1.8-.3 1.5-.9 .6 2.2 -.5 2.1 -.3 1.9 -.7 1.7 1.5 .2 1.1 2.2zM1442.8 754l-1.6 .3 -1.7 0 1.1 1.1 .1 1.6 -1.2 1.2 -.5 1.5 -2.5-1.3 -1.7-2 .6-2.4 1.7-1.1 .6-1.1 .3-1.6 1-1.2 2.7 .3 2.2 1.9 -.1 1.6zM1438.7 769l-.9 1.2 -.9 .7 0 2 -.9 1.9 -1.6-.3 -1.4 .5 -.5-2 .6-2.1 .2-1.9 1.8-.6 -.6-2.3 .7-1.8 .8-1.8 1.3 .7 1.1 1.1 .8 2.6zM1577 723.9l1.1 2 -1.6 1.6 -2.5-1.2 -2.5-1.1 -2-1.5 -2.3-.9 1.6-1.7 .1-1 -1.9-1.5 -1.2-2 2.2-.3 1.9 .8 2.3 .8 2.2 1.2 1.6 1.5 2 .7 1.8 2.2zM1583.2 679l1.7 .9 1.8 .7 -1.8 1.8 -1.8-1.1 -2.1-.4 -.8-1.2 .1-.5 -1.7-.1 -1.7-.1 -2.3-1.8 1.9 .1 1.8-.6 2.7 .3 1.4 .7 0 .9zM1507.2 760l-.5 1 -.7 .8 -1 .2 -1.6 .8 -1.9-.8 1.3-2 1.5-.4 -.5-1.7 1.2-.8 1.5 .4 1.4 .9zM452.7 619.4l-1.9 1 -2.2-1.4 -2.3-1.2 -2.7-.4 -1.6 .4 -1.6-.8 -1.4-.7 -1.5-.7 -1.1-1.7 -1.1-1.9 -1.9-1 -2.1-.2 .8-1.4 .6-1.5 2.3 .1 2.3 0 1.1 2.2 2.4 .9 1.7 1.7 2.1 1.3 1.8-1.5 2.4 .8 2.5-.8 2.2 1.1 2.4 .4 0 2.6 1.6 2.1 -2.5-.3zM465.4 629.2l1.4 1.5 1.7 1.2 1.7 1.3 1.2 1.7 -1.2 1.4 -.8 1.7 -2-1.3 -2.3 .1 -1.8-1.5 -.7-2.2 -1.1-2.3 -2.3-1.4 1.7-.2 1.3-1.1 -.3-.9 -1.3-2.7 -2.4-1.8 1.7-.1 1.6-.7 1.7 .4 1.7 .2 1.7 .6 .9 1.5 1.6 2.4 2.3 1.6 -2.1 1.7 -1.8-1zM435.4 636l-1.4 1.4 -1.9 .6 -1.1 .9 -.5 1.5 -1 1.4 .9 1.5 -.4 1.7 -1.6-.1 -1.2-1.1 -1.8-1.2 -2.1-.4 -.1-1.7 -1-1.3 .2-1.6 .3-1.6 1.5-.5 1.1-1.2 1.6-.1 1.5 .3 .6-1.4 -.1-2 1.1-1.6 1.1-2.7 2.6-1.2 2 1.7 1.4 2.1 -.3 1.7 -.4 1.6 -.6 1.6zM491.8 606l-1 1.7 -1.6 1.1 -1.7 .7 -1.7 .7 -1.8-1.3 -2.2 .3 -1.6 1.3 -2 .6 .4 1.6 -1 1.1 -1.4 .8 -.9 1.2 -1.1 1.1 -2-.1 -1.8-.6 -1.5-1.3 -2 .1 1.9-1.8 2.2-1.5 2-.9 2-.7 2.3-1.1 2.4-.7 2-1 1.1-1.9 2-1 2.2 .5 2.2 1.2zM462.7 599l-1.8 .1 -1.6 .8 -1.6-1 -1.8 .4 .3 .7 -1 1.4 -.2 1.6 -1.5 .5 -1.2 1.1 -1.5-.6 -1.6 0 -.8-1.6 -1.5-1.1 -.4-2.3 2.8-.2 2.8-.6 1.9-.1 1-2.5 2.3-1.2 2.6 .4 1.6 .5 1.7 .4 1.7-.1 1.7 0 -2.3 1.3zM499.7 627.6l-2.4 1.7 -2.4 1.8 -.9 1 -.7 2.2 -2 1.6 -2 1.4 -1.1 1.2 -1.4 .9 -1.6-.4 -1.6 .6 -1-2.1 1.5-2 1.8-1.6 1.7 .5 1.6-.5 1.3-1 1.3-.9 -.4-1 2.2-.6 1.2-2 -.2-2.3 1.3-1.8 2.9-.3 2.8-.7 -1.8 1.8zM440.3 655.6l-3-.2 .3 2.1 .3 2.1 -1.4 2.2 -1.1 2.3 -.9-1.8 -.8-1.9 -1.1-1 -.9-1.2 1.5-1.6 .1-2.2 2.2-1.3 .9-1.4 1-1.3 .7-1.5 1.8-.9 1.9-1 1.2 2.2 -.3 2.4 -1.4 1.8zM567.1 523.6l-1.7-.9 -2-1 -.4-2 2.3 2 2.1 .3zM588 556.7l-2.4-1.3 -3-.1 .4-2 2.2 .8 2.2 .7zM639.8 510.5l-2.7 .6 -3.1-3.5 0-2.8 -2.1-3.2 1.6-1.1 2.8-.9 1.6 4.7 -.8 1.5zM626.9 524.1l-.8 3 -3-3.2 -.8-2.8 .9-1 0-2.1 2.3-2.1 1.7 4.6 -1.2 1.5zM592.4 566.5l-2.4 .2 -2.7-3.9 -3.2-2.2 -3.5-5.3 3.2-.7 4.2 6.4 3.2-.7 3.5 4.7zM653.7 528.1l-1.5-.1 -1.7-2.2 0-1.3 1.2-.8 1.9 2.8zM668.1 519.1l-.9 .8 -.9-1.3 -.1-.9 .9-.5 1.4 .9zM588.8 579.1l-2.2-.3 -2.5-3.8 .9-.8 .6-3.2 1.2 5.1zM577.3 533.3l-.7-2.4 -2.1-1.3 1.4-1.3 .8 2.4 1.7 1.3zM679.4 571.2l-.3 2 -1.7-2.6 1.3-.4 .7-.3 2.4 1.7zM591.1 537.6l-.9 1.3 -1-2.1 .5-.7 .7-1.1 .9 1.8zM661.2 497.9l-1 1.9 -.2-2.7 -.5-1.3 1.3-.3 .9 1.6zM661.2 489.1l.4 2.2 -1.9-2.8 -1.5-1.6 1.5-.3 2.7 2.2zM594.9 565l-1.6-1.6 -.5-1.4 .3-1.4 1.2 .7 .1 1.3zM655.3 494l-4.5-3.3 -1.8-.9 -1.9-3.1 3.3 2.2 1.5 1.1zM627.4 564.9l-1.2-2 -2.5-3.8 1.3-2.3 1.4 5.1 3.3 3zM608.1 543l-.1 2.2 -2.3-3.7 1.2 0 -.1-2.9 2.4 4.3zM632 523.5l-2.2-3.4 -2.1-2.2 .2-3.2 2.4 2.9 1.5 2.6zM652.8 502.5l-.9-.6 -1.8-1.5 1.6-.1 .8-.3 1 1.6zM621.6 554l-.9 1.2 -2.6-4.4 1.2-.8 1.3 .6 3.2 3.7zM564.7 572.8l-1.3-2.2 -2.8-3 2-.6 1.2 2.1 2.3 2.6zM587.7 494l-1.7-1.2 -2.2 2 -8.1-6.6 1.5-3.7 6.3 4.5 1-.6 5.3 1.6 8.1 9.1z" fill="#f3f3f6"/>
<g fill="none" stroke="#f3f3f6" stroke-linecap="round" stroke-linejoin="round">
<path d="M283 470l2.3 0 2-1.1 2.2 .1 2.2-.3 2.3 .1 1.9-1.1 2.4-.2 1.7-1.5 2.3-.9 2.5 .5 2.3 .1 2.4-.1 2.3 1.1 2.4 .3 2.1 1.3 1.7 1.7 2.5-.2 2.2 1 2.1-1.3 2.4-.5 2.3 .7 1.6 1.9 1.7 1.6 2.2 .8 2.2-.6 2.1-1 2.4-.1 2.1 1 1.8-1.4 2.3-.1 1.9-1.2 2.2-.6 2 1.7 2.1 1.7 1.8 2 2.1 1.6" stroke-width="2.5"/>
<path d="M360 477l-1.2 1.9 -1.6 1.6 -1.5 1.8 -2 1 -.6 2.2 -1 2 .4 2.3 -.5 2.2 -1.7 2.6 -1.9 2.4 -3.1 .8 -2.3 2.2 1.3 2.8 2.4 2 1.7 2.6 1.6 2.6" stroke-width="2.5"/>
<path d="M303 490l3.7-1.5 3.9-.1 3.6-1.4 3.8-1 3.5 1.9 1.8 3.6 3.4 1.6 3.3 1.9" stroke-width="1.8"/>
<path d="M300 520l2.2-.8 2.3-.2 2.4-.3 2.3 .7 2.4 .1 1.9 1.4 2.4 .1 2.1 1 1.4-1.6 .5-2 1.8-1 1.4-1.4 1.9-1.1 2.1 0 1.1-1.7 1.8-1.2 2-.7 1.5-1.5 2.1-.7 1.4-1.6 2.1-.9 2.2 .7 1.5-1.8 2.2-.5" stroke-width="1.8"/>
<path d="M425 537l-.9 3.5 -1.3 3.4 -.8 3.7 -3 2.4 1.9 2.6 .2 3.2 -.4 3.2 1.3 3 .2 2.7 -1.1 2.5 -1.7 2.2 -.5 2.6 -1.1 2.6 -1.3 2.4 -1.9 1.9 -2.6 1.1 -1.8 1.1 -1.4 1.7 -.7 2 0 2.1 -2.8 2.9 -3.3 2.2" stroke-width="2.2"/>
<path d="M433 583l1.5 3.6 3.3 2 3.5 1 3.7 .4 3.6 1 2.4 3 1.9 3.1 2.1 2.9 -1.5 2.8 .1 3.2 -1.9 2.7 .3 3.3 2.5 2.2 1.6 2.9 2.4 2.5 3.5 .4 1.6-2.6 2.7-1.1 1.4-2.5 2.3-1.8 2.1 .7 2.2-.1 2.2-.3 2-.8 1.8-1.6 .5-2.3 2-1.1 2.2-.5" stroke-width="2.2"/>
<path d="M470 633l3.1-2.2 3-2.3 1.9-3.3 2-3.2 3.5-.8 2.6-2.6 3.4-1.1 2.5-2.5 2.6-2.7 .9-3.6 1.6-3.4 2.9-2.3 2.8-1.5 3-.7 3-1.4 3.2 .6" stroke-width="2"/>
<path d="M440 600l-.9 3.3 -2.7 2 -3 1.6 -1.4 3.1 .4 3.2 .2 3.3 2.6 2.2 .8 3.3" stroke-width="2"/>
<path d="M543 580l-.7 2.1 -1.2 1.7 .5 2.2 -.8 2.1 -1.2 1.7 -1 1.9 -.9 2 -1.7 1.3 -1.3 1.8 -.5 2.1 -.6 2 -.9 2 -1.6 1.6 -2 1.1 -1 2.1 -.1 2.3 -1.6 3.3 .4 3.6 -2.5 2.5 -2.3 2.6" stroke-width="2.4"/>
<path d="M238 409l-.2-2.5 -1.4-2 -2.2-1.2 -1.2-2.1 1.2-2.2 -.4-2.5 -1.1-2.2 -.7-2.3 .1-3.3 -.8-3.1 -1.5-2.9 -1.8-2.7" stroke-width="2.5"/>
<path d="M322 560l2.4-1.9 1.2-2.8 2.8-1.3 2-2.2 2.6-1.9 3.3 0 2-2.3 1.7-2.6 2-2.3 3-.6 3 .5 2.7-1.1 2.9-.8 2.4-1.5 1.8-2.4 2.2-1.8 2.1-.5 1.8-1.1 2 .6 2.1 .1 2-.6 1.3-1.6 1.9-.9 1.6-1.2 2-.5 2.1-.3 2.1 .2 1.9 .8 2-.7 1.6-1.3 2.1-.4 1.4-1.6 1.5 1.6 2 1 2.2 .3 2.2-.4 1.9-1.1 1.9-.9 2.2 .2 2.1 .2 1.8-1.2 2-.9 .7-2.1 1.4-1.7 1.9-1.1 1.8-1.1 2.2-.2 2.2 .4" stroke-width="4.5"/>
<path d="M330 500l2.2-.3 2.3-.1 2-1.1 2.3-.1 1.3-1.9 .8-2.3 2.1-.9 2-1.3 2-1.6 2.3-1.4 2.5-.9 1.7-2.1 1.2-2.5 2.1-1.9 2.8-.2 2.4-1.4 1.8-3.1 2.5-2.6 2.8-2.3 2.9-2" stroke-width="2.5"/>
<path d="M300 503l1.7 1.2 .7 2 1.7 1.1 1.8 1 1.5 3.7 2.6 3 -.5 2 -1 1.8 -.2 2 0 2 0 2.1 -.6 2 -1.4 1.5 -1.3 1.6 1.8 1.6 .5 2.3 1 2 1.1 2 1.3 2 .6 2.3 2.1 1 1.6 1.8" stroke-width="2"/>
<path d="M245 440l2.4-.1 2.1 1.2 2.3 .7 1.4 1.9 2 1.4 2.3 .2 2.2 .8 2.3-.1 3.7-.4 3-2.2 3.6-.9 2.7-2.5" stroke-width="1.8"/>
<path d="M232 470l3.8 .6 3.7 1.2 .8 2 1.7 1.2 2 .7 2 .3 1.8-1.4 2.2-.2 2.1-.6 2.2-.1 1.9-1.1 1.6-1.5 2.2-.3 2-.8" stroke-width="1.4"/>
</g><g fill="none" stroke="#e9edf1" stroke-linecap="round" stroke-linejoin="round">
<path d="M255 89l1.6 2.3 2.4 1.6 1.5 2.3 1.3 2.5 2.1 2.1 3 .4 2.1 2 1 2.8 2.1 3.3 .1 4 2.6 2.8 3.6 1.5 2.7 2.5 2.2 3 2.8 2.6 3.9 .3 2.6 2.4 3.4 0 3.1 1.2 3.1 1 1.4 3.1 .9 3.3 2.5 2.3 3 1.7 2 2.1 2.6 1.2 2.6 1.3 2.9 .3 2.6 1.3 1.8 2.3 2.7 1.1 2.8 .4 3.8 2 2.3 3.6 3.8 1.6 3.9 1.3 4.7 .4 3.7-2.8 3.7 2.4 4.1 1.5 2.7-.1 2.5 .8 2.7 0 2.6-.2 1.6 2.2 2.6 1.1 2.4 1.6 2.9-.4 3-2.7 3-2.7 2-3.7 3.6-2.1 2.1-4 -.5-4.5 4.4-1.4 2.4-3.9 3.7-2.9 3.1-3.7 4.2-2.4 4.8-.2 2.7-3.9 .8-4.7 4.1-2.6 1.6-4.6 2.3-1 1.9-1.7 1-2.4 2.1-1.6 1.4-4.8 2.4-4.4 2.3-1.2 2.6 0 2.5 .5 2.5 .5 1.7-1.9 2.3-1.2 2.4-1.1 2.6 .3" stroke-width="1.1"/>
<path d="M380 165l3.2 3.5 2.8 3.9 .9 4.7 -.4 4.8 2.1 4.4 -.2 4.9 -1.4 4.5 -2 4.3 2.1 1.6 2.6 .7 1.7 2 .4 2.7 2.2 4.3 2 4.5 -.7 2.6 1.1 2.4 .6 2.5 1.3 2.2 .6 2.7 -.7 2.6 -1 2.5 -2.2 1.7 2.1 4 3.6 2.8 -.7 4.4 1.1 4.4 3.1 3.1 2.6 3.4 4.2 1.2 4 1.7 1.7 1.9 1.6 1.9 1.8 1.8 2.3 1.1 .9 2.4 2.1 1.6 1.1 2.3 1.5 2 2.7 3.3 2.2 3.6 1.9 3.8 .2 4.3" stroke-width="0.8"/>
<path d="M183 360l1.9 1.9 1.6 2.2 .1 2.7 -.1 2.7 2.5 .9 1.5 2.2 2.1 1.5 2.4 .9 3.5 1.2 3 2.3 2.2 3 1.3 3.5" stroke-width="0.8"/>
<path d="M435 290l.7 3.2 2.4 2.2 -.9 3 .1 3.1 1.6 2.7 2 2.3 2.9 1 3 .8 .2 2.7 -.6 2.7 .7 2.8 -.7 2.7 -1.2 2.5 .1 2.8 -1.2 2.7 .9 2.8 -.9 2.6 -.7 2.6 -1.3 2.5 -2.4 1.5 -2.1 1.9 -1.2 2.6 .1 2.7 -.5 2.8 .2 2.8 -.1 2.8 2.5 1.7 .9 2.8 -.1 2.7 -.4 2.7 1.3 2.5 -.3 2.8 -2.4 2.5 -2.2 2.6 -3 1.8 -3.5 .6 -3.2 1 -3.2 .8 -3.4-1.2 -3.4 1.2 -2.7 2 -1.3 3.1 -3.1 1.6 -1.5 3.1 -1.9 3.1 -3.5 1.2 -1.6 3.1 -.1 3.5 -3.1 1.2 -2.5 2.2 -2.3 2.2 -1.8 2.7 -1.8 3 .5 3.5 -2.6 2.1 -1.4 3.1 1 3.9 -.9 3.9 1.1 3.8 -.6 3.9 -.8 4 -2.7 3 .4 4.1 -2.5 3.4" stroke-width="0.6"/>
<path d="M1083 407l2.5-3.9 1.8-4.3 2.8-3.9 -.1-4.9 1-3.7 2.1-3.2 3-2.6 3.9-.5 2.5 1.5 1.4 2.5 2.6 .9 2.7 .9 2.7 .5 2.7-.1 2.7-.6 2.7-.6 2.8 .7 1.7 2.3 2 2 .8 2.7 2.4 1.3 1.4 2.4 1.4 2.4 2.5 1.2" stroke-width="0.9"/>
<path d="M1100 380l1.1-2.5 .4-2.6 .6-2.7 -.4-2.7 2.6-1.1 1.4-2.4 2.4-1.2 1.9-1.9 2.6-.8 2.7 0 2.2-1.6 2.2-1.4 1.1-2.5 .5-2.7 1.7-2.1 2-1.8 -.3-4.1 1.8-3.7 1.8-3.6 1.2-3.8 1.7-3.7 2.4-3.2 -.5-4.1 1.9-3.8 -.7-2.7 -.8-2.7 -.6-2.9 -2-2.2 0-3 -1.3-2.8 -2.1-2 -2.5-1.7 -2.3-3.1 -2.3-3.1 -3.3-2.2 -2-3.5 -3.9 .2 -3.9-.7 -3.9-.6 -3.4-2 -3.3-1.6 -1.8-3.3 -.9-3.4 -1.3-3.3 0-3.5 -1.7-3.1 .1-3.5 -1.1-3.3 -.6-2.6 .9-2.4 -1.1-2.3 -1.6-1.9 -2.1-1.6 -.7-2.6 -2.6-.1 -2.2-1.5" stroke-width="0.9"/>
<path d="M1362 803l2.9 2.2 3.7-.1 1.6 3.2 3.1 1.8 3 2.3 .7 3.6 1.1 3.5 -1.1 3.5 2.7 3.1 1.8 3.7 3.7 1.8 3.8 1.4 .7 4.2 .3 4.3 -1 4.2 0 4.3" stroke-width="0.9"/>
<path d="M1389 790l.7-2.9 1-2.7 2.7-1.3 2.1-2 .8-2.8 .2-2.8 -1.2-2.6 -.3-2.9 -2.6-1.7 -2.7-1.4 -.9-3.1 -2.6-1.9 .2-3 -.4-3 -.8-2.9 -.2-3 2.6-.4 2.6-.2 2-1.8 1.5-2.1 3.2-3.7 3.1-3.8" stroke-width="0.9"/>
<path d="M1389 800l3.3 1.5 1.8 3.2 3.5 .1 3.4 .6 1.2 3.3 1.7 3 3.2 1.4 2.9 1.9 4 .1 3.7-1.4 3.9 .7 4-.4 2.8 3.1 4.1 .6 3.9 .8 3.6 1.5 1.9 3.3 3.6 1.4 2.8 2.3 3.4 1.3 .3 3.8 2.2 3.2 3.8 1.2 2 3.5 1.2 2.7 1.8 2.2 -.2 2.9 1.1 2.8 1.6 2.5 .3 2.9 2.3 1.8 1.9 2.2 2.8 1.5 3.1 .6 3.1-.4 3.1-.7 2.1 2.3 2.7 1.4 2.6 1.5 2.5 1.8" stroke-width="0.8"/>
<path d="M1385 885l-1.4 2.1 -1.5 2.1 -.5 2.6 -.3 2.5 1.8 1.9 .9 2.5 1.2 2.4 -.7 2.7 -3.9 3 -1.9 4.5 -1 4.7 -2.7 4 .6 4.1 -.8 4 -1.4 4 .3 4.1 -.8 4.2 -2.2 3.6 -2.6 3.2 -3.1 2.8 -1.3 4 -3.3 2.6 0 4.1 -2.2 3.6 1.3 4 2.4 3.5 -1.4 4 -.5 4.2" stroke-width="0.8"/>
<path d="M788 800l1.6 3.9 3.4 2.5 2.6 3.4 -.1 4.3 -1.9 3.7 .2 4.2 .1 4.1 1.1 3.9 -.8 4 1.7 3.8 1.7 3.5 2.1 3.3 -.6 3.9 0 3.8 -.9 4 1.8 3.7 -1.3 3.9 -1.3 3.9 .9 4.1 -1.5 4 2.3 3.4 1.9 3.6 1.5 3.9 2.5 3.2 2.3 2.2 2.9 1.1 1.5 2.7 1.7 2.6 1.2 2.9 -.2 3.2 1.8 2.5 1.5 2.7 3 1.1 2.7 1.7 2.3 2.4 1.3 2.9 .7 3.4 -1.4 3.2 1.8 2.7 1.9 2.7" stroke-width="0.6"/>
<path d="M860 830l3-.2 2.5 1.5 3-.3 2.3-1.8 2.6 .9 2.4 1.3 2.7 1.2 1.5 2.4 2.6-.9 2.3-1.6 2.6 .6 2.8 .4 2.4-1 2.1-1.6 2.7 0 2.5-.9 4 1.9 4.4-.6 4.2-1.1 3.3-2.9 3.2 2.7 2.5 3.5 4.4-.5 4 2" stroke-width="0.9"/>
<path d="M707 880l3.5 3 4.2 1.8 4.4-1.7 4.7 1 3.2 3.2 4.3 1.4 4.4 .5 4.3 .8 1.9 2 2.6 1 2 1.9 2.1 1.7 2.4 1.5 2.9 .1 2.6-1.2 2.9 .4 2.7-.5 2.7 .2 2.5-.9 2.7-.1 2.9-.1 2.9 .1 1.3 2.8 2.9 1.1 3.9 2.6 3.3 3.3 1.6 4.3 2.3 4.1 4.5 2.1 2.9 4 .7 4.8 .8 4.8 -.3 4.2 -2.6 3.3 1.2 4.1 -1.7 3.9 -3.4 2.5 -2.3 3.7 -.9 4.1 0 4.2" stroke-width="0.5"/>
<path d="M1457 500l2.7 1.7 1.4 2.9 .9 2.9 .7 3 1.5 2.6 1.4 2.7 2.2 2.1 2.2 2.1" stroke-width="0.5"/>
</g><g fill="none" stroke="#565b63" stroke-width="1.35" stroke-linejoin="round">
<path d="M1606 89l-46 51 -71 79 -10 13 -7 27 -23 0 -10 10 -29.3 31 -17.7 23 -8 2.5 -6.4 14.5 -31.1 33 -22.5 28 1 5.5 -13 8.5 -1 13.6 -3.3 12.4 -1.1 5 -10 7 6.4 15.5 -26.3 33.5"/>
<path d="M1362 803l10 10 5 10 12 10 0 10 -7 17 -6 7 -30 6 -10 14 -4 20 -16 20 -4 23 -5 10 -1 17 -30 31"/>
</g>
<g font-family="'Liberation Sans',sans-serif" text-anchor="middle" paint-order="stroke" stroke="#fff" stroke-opacity=".75" stroke-width="2" stroke-linejoin="round">
<text x="425" y="106.85" font-size="11" fill="#6f7277">Vammala</text>
<text x="324" y="141.85" font-size="11" fill="#6f7277">Kokemäki</text>
<text x="387" y="170.85" font-size="11" fill="#6f7277">Huittinen</text>
<text x="170" y="188.85" font-size="11" fill="#6f7277">Rauma</text>
<text x="284" y="187.85" font-size="11" fill="#6f7277">Eura</text>
<text x="153" y="311.85" font-size="11" fill="#6f7277">Uusikaupunki</text>
<text x="451" y="294.85" font-size="11" fill="#6f7277">Loimaa</text>
<text x="557" y="306.85" font-size="11" fill="#6f7277">Forssa</text>
<text x="374" y="333.85" font-size="11" fill="#6f7277">Pöytyä</text>
<text x="535" y="375.85" font-size="11" fill="#6f7277">Somero</text>
<text x="343" y="421.85" font-size="11" fill="#6f7277">Lieto</text>
<text x="266" y="434.85" font-size="11" fill="#6f7277">Naantali</text>
<text x="354" y="451.85" font-size="11" fill="#6f7277">Piikkiö</text>
<text x="465" y="466.85" font-size="11" fill="#6f7277">Salo</text>
<text x="316" y="497.85" font-size="11" fill="#6f7277">Pargas</text>
<text x="637" y="515.85" font-size="11" fill="#6f7277">Lohja</text>
<text x="347" y="580.85" font-size="11" fill="#6f7277">Dragsfjärd</text>
<text x="562" y="580.85" font-size="11" fill="#6f7277">Karis</text>
<text x="521" y="616.85" font-size="11" fill="#6f7277">Ekenäs</text>
<text x="437" y="670.85" font-size="11" fill="#6f7277">Hanko</text>
<text x="578" y="117.85" font-size="11" fill="#6f7277">Lempäälä</text>
<text x="631" y="137.85" font-size="11" fill="#6f7277">Valkeakoski</text>
<text x="692" y="213.85" font-size="11" fill="#6f7277">Hattula</text>
<text x="994" y="160.85" font-size="11" fill="#6f7277">Heinola</text>
<text x="1134" y="260.85" font-size="11" fill="#6f7277">Valkeala</text>
<text x="1133" y="323.85" font-size="11" fill="#6f7277">Myllykoski</text>
<text x="783" y="374.85" font-size="11" fill="#6f7277">Hyvinkää</text>
<text x="864" y="374.85" font-size="11" fill="#6f7277">Mäntsälä</text>
<text x="771" y="437.85" font-size="11" fill="#6f7277">Nurmijärvi</text>
<text x="812" y="459.85" font-size="11" fill="#6f7277">Tuusula</text>
<text x="705" y="561.85" font-size="11" fill="#6f7277">Kirkkonummi</text>
<text x="1122" y="424.85" font-size="11" fill="#6f7277">Pyhtää</text>
<text x="1205" y="397.85" font-size="11" fill="#6f7277">Hamina</text>
<text x="1441" y="193.85" font-size="11" fill="#6f7277">Joutseno</text>
<text x="1455" y="375.85" font-size="11" fill="#6f7277">Vysotsk</text>
<text x="1472" y="411.85" font-size="11" fill="#6f7277">Sovetsk</text>
<text x="1469" y="480.85" font-size="11" fill="#6f7277">Karasev</text>
<text x="937" y="757.85" font-size="11" fill="#6f7277">Loksa</text>
<text x="804" y="799.85" font-size="11" fill="#6f7277">Maardu</text>
<text x="701" y="854.85" font-size="11" fill="#6f7277">Keila</text>
<text x="1054" y="841.85" font-size="11" fill="#6f7277">Rakvere</text>
<text x="981" y="872.85" font-size="11" fill="#6f7277">Tapa</text>
<text x="1164" y="838.85" font-size="11" fill="#6f7277">Kiviõli</text>
<text x="1223" y="822.85" font-size="11" fill="#6f7277">Kohtla-Järve</text>
<text x="1310" y="824.85" font-size="11" fill="#6f7277">Sillamäe</text>
<text x="1361" y="801.85" font-size="11" fill="#6f7277">Narva-Jõesuu</text>
<text x="1461" y="832.85" font-size="11" fill="#6f7277">Kingisepp</text>
<text x="1369" y="923.85" font-size="11" fill="#6f7277">Slantsy</text>
<text x="1329" y="936.85" font-size="11" fill="#6f7277">Radovel</text>
<text x="1483" y="911.85" font-size="11" fill="#6f7277">Lozhgolovo</text>
<text x="394" y="964.85" font-size="11" fill="#6f7277">Kärdla</text>
<text x="540" y="986.85" font-size="11" fill="#6f7277">Haapsalu</text>
<text x="910" y="1005.85" font-size="11" fill="#6f7277">Paide</text>
<text x="1400" y="778.85" font-size="11" fill="#6f7277">Куровицы</text>
<text x="1513" y="724.85" font-size="11" fill="#6f7277">Itsipino</text>
<text x="1603" y="718.85" font-size="11" fill="#6f7277">Никольское</text>
<text x="1533" y="761.85" font-size="11" fill="#6f7277">Ratchino</text>
<text x="1502" y="801.85" font-size="11" fill="#6f7277">Фёдоровка</text>
<text x="1622" y="806.85" font-size="11" fill="#6f7277">Volosovo</text>
<text x="1737" y="813.85" font-size="11" fill="#6f7277">Koprina</text>
<text x="1780" y="818.85" font-size="11" fill="#6f7277">Vyritsa</text>
<text x="1703" y="840.85" font-size="11" fill="#6f7277">Zamost'e</text>
<text x="1797" y="858.85" font-size="11" fill="#6f7277">Malye Slud</text>
<text x="1702" y="894.85" font-size="11" fill="#6f7277">Беково</text>
<text x="1776" y="576.85" font-size="11" fill="#6f7277">golovo</text>
<text x="1815" y="597.85" font-size="11" fill="#6f7277">Vse</text>
<text x="1780" y="410.85" font-size="11" fill="#6f7277">novo</text>
<text x="710" y="238.375" font-size="12.5" fill="#5c5f64">Hämeenlinna</text>
<text x="927" y="242.375" font-size="12.5" fill="#5c5f64">Lahti</text>
<text x="1117" y="285.375" font-size="12.5" fill="#5c5f64">Kouvola</text>
<text x="927" y="461.375" font-size="12.5" fill="#5c5f64">Porvoo</text>
<text x="814" y="499.375" font-size="12.5" fill="#5c5f64">Vantaa</text>
<text x="745" y="530.375" font-size="12.5" fill="#5c5f64">Espoo</text>
<text x="1160" y="434.375" font-size="12.5" fill="#5c5f64">Kotka</text>
<text x="1386" y="214.375" font-size="12.5" fill="#5c5f64">Lappeenranta</text>
<text x="1388" y="831.375" font-size="12.5" fill="#5c5f64">Narva</text>
<text x="1741" y="761.375" font-size="12.5" fill="#5c5f64">Gatchina</text>
<text x="1792" y="706.375" font-size="12.5" fill="#5c5f64">Pushkin</text>
<text x="309" y="439.425" font-size="15.5" fill="#3c3f44">Turku</text>
<text x="833" y="567.425" font-size="15.5" fill="#3c3f44">Helsinki</text>
<text x="728" y="808.425" font-size="15.5" fill="#3c3f44">Tallinn</text>
<text x="1799" y="650.425" font-size="15.5" fill="#3c3f44">Saint</text>
<text x="1800" y="669.425" font-size="15.5" fill="#3c3f44">Peter</text>
<text x="1470" y="344.375" font-size="12.5" fill="#5c5f64" text-anchor="start">Vyborg</text>
<text x="1194" y="516.025" font-size="11.5" fill="#54585f" stroke-width="1.6">Eastern Gulf of Finland</text>
<text x="1194" y="530.025" font-size="11.5" fill="#54585f" stroke-width="1.6">National Park</text>
<text x="952" y="777.025" font-size="11.5" fill="#54585f" stroke-width="1.6">Lahemaa</text>
<text x="952" y="792.025" font-size="11.5" fill="#54585f" stroke-width="1.6">National Park</text>
<text transform="translate(1055 642) rotate(-4.5)" font-size="16.5" font-style="italic" fill="#7b7e84" letter-spacing="2.2" stroke-width="1.5">Gulf of Finland</text>
</g>
<g stroke-linejoin="round"><path transform="translate(673 693) rotate(255) scale(1.05)" d="M0-9L6 7 0 3.4-6 7z" fill="#f4322c" stroke="#a31410" stroke-width="0.761905"/><path transform="translate(790 668) rotate(255) scale(0.675)" d="M0-9L6 7 0 3.4-6 7z" fill="#f4322c" stroke="#a31410" stroke-width="1.18519"/><path transform="translate(863 656) rotate(255) scale(0.72)" d="M0-9L6 7 0 3.4-6 7z" fill="#f4322c" stroke="#a31410" stroke-width="1.11111"/><path transform="translate(923 644) rotate(250) scale(1.05)" d="M0-9L6 7 0 3.4-6 7z" fill="#f4322c" stroke="#a31410" stroke-width="0.761905"/><path transform="translate(828 683) rotate(105) scale(1)" d="M0-9L6 7 0 3.4-6 7z" fill="#f4322c" stroke="#a31410" stroke-width="0.8"/><path transform="translate(843 682) rotate(100) scale(1)" d="M0-9L6 7 0 3.4-6 7z" fill="#f4322c" stroke="#a31410" stroke-width="0.8"/><path transform="translate(876 675) rotate(105) scale(1.05)" d="M0-9L6 7 0 3.4-6 7z" fill="#f4322c" stroke="#a31410" stroke-width="0.761905"/><path transform="translate(989 628) rotate(250) scale(1)" d="M0-9L6 7 0 3.4-6 7z" fill="#f4322c" stroke="#a31410" stroke-width="0.8"/><path transform="translate(974 654) rotate(120) scale(1)" d="M0-9L6 7 0 3.4-6 7z" fill="#f4322c" stroke="#a31410" stroke-width="0.8"/><path transform="translate(1253 571) rotate(-35) scale(1)" d="M0-9L6 7 0 3.4-6 7z" fill="#f4322c" stroke="#a31410" stroke-width="0.8"/><path transform="translate(1415 581) rotate(150) scale(1.1)" d="M0-9L6 7 0 3.4-6 7z" fill="#f4322c" stroke="#a31410" stroke-width="0.727273"/><path transform="translate(1441 570) rotate(40) scale(1.1)" d="M0-9L6 7 0 3.4-6 7z" fill="#f4322c" stroke="#a31410" stroke-width="0.727273"/><path transform="translate(1461 604) rotate(190) scale(1.1)" d="M0-9L6 7 0 3.4-6 7z" fill="#f4322c" stroke="#a31410" stroke-width="0.727273"/><path transform="translate(550 760) rotate(100) scale(0.63)" d="M0-9L6 7 0 3.4-6 7z" fill="#f4322c" stroke="#a31410" stroke-width="1.26984"/><path transform="translate(446 793) rotate(80) scale(0.63)" d="M0-9L6 7 0 3.4-6 7z" fill="#f4322c" stroke="#a31410" stroke-width="1.26984"/><path transform="translate(141 997) rotate(200) scale(0.72)" d="M0-9L6 7 0 3.4-6 7z" fill="#f4322c" stroke="#a31410" stroke-width="1.11111"/><path transform="translate(763 674) rotate(250) scale(0.72)" d="M0-9L6 7 0 3.4-6 7z" fill="#6fe27a" stroke="#1f8a2f" stroke-width="1.11111"/><path transform="translate(734 705) rotate(100) scale(1)" d="M0-9L6 7 0 3.4-6 7z" fill="#6fe27a" stroke="#1f8a2f" stroke-width="0.8"/><path transform="translate(755 704) rotate(100) scale(1)" d="M0-9L6 7 0 3.4-6 7z" fill="#6fe27a" stroke="#1f8a2f" stroke-width="0.8"/><path transform="translate(773 696) rotate(95) scale(0.63)" d="M0-9L6 7 0 3.4-6 7z" fill="#6fe27a" stroke="#1f8a2f" stroke-width="1.26984"/><path transform="translate(801 694) rotate(100) scale(0.95)" d="M0-9L6 7 0 3.4-6 7z" fill="#6fe27a" stroke="#1f8a2f" stroke-width="0.842105"/><path transform="translate(1014 599) rotate(-40) scale(0.72)" d="M0-9L6 7 0 3.4-6 7z" fill="#6fe27a" stroke="#1f8a2f" stroke-width="1.11111"/><path transform="translate(1050 611) rotate(260) scale(0.63)" d="M0-9L6 7 0 3.4-6 7z" fill="#6fe27a" stroke="#1f8a2f" stroke-width="1.26984"/><path transform="translate(1084 619) rotate(105) scale(1)" d="M0-9L6 7 0 3.4-6 7z" fill="#6fe27a" stroke="#1f8a2f" stroke-width="0.8"/><path transform="translate(1027 635) rotate(90) scale(0.72)" d="M0-9L6 7 0 3.4-6 7z" fill="#6fe27a" stroke="#1f8a2f" stroke-width="1.11111"/><path transform="translate(1040 633) rotate(90) scale(0.63)" d="M0-9L6 7 0 3.4-6 7z" fill="#6fe27a" stroke="#1f8a2f" stroke-width="1.26984"/><path transform="translate(1153 611) rotate(260) scale(0.63)" d="M0-9L6 7 0 3.4-6 7z" fill="#6fe27a" stroke="#1f8a2f" stroke-width="1.26984"/><path transform="translate(1189 619) rotate(50) scale(0.675)" d="M0-9L6 7 0 3.4-6 7z" fill="#6fe27a" stroke="#1f8a2f" stroke-width="1.18519"/><path transform="translate(1213 603) rotate(55) scale(1)" d="M0-9L6 7 0 3.4-6 7z" fill="#6fe27a" stroke="#1f8a2f" stroke-width="0.8"/><path transform="translate(1234 581) rotate(250) scale(0.72)" d="M0-9L6 7 0 3.4-6 7z" fill="#6fe27a" stroke="#1f8a2f" stroke-width="1.11111"/><path transform="translate(1245 584) rotate(110) scale(0.72)" d="M0-9L6 7 0 3.4-6 7z" fill="#6fe27a" stroke="#1f8a2f" stroke-width="1.11111"/><path transform="translate(1313 539) rotate(260) scale(1)" d="M0-9L6 7 0 3.4-6 7z" fill="#6fe27a" stroke="#1f8a2f" stroke-width="0.8"/><path transform="translate(1351 488) rotate(40) scale(0.9)" d="M0-9L6 7 0 3.4-6 7z" fill="#6fe27a" stroke="#1f8a2f" stroke-width="0.888889"/><path transform="translate(1352 557) rotate(80) scale(0.72)" d="M0-9L6 7 0 3.4-6 7z" fill="#6fe27a" stroke="#1f8a2f" stroke-width="1.11111"/><path transform="translate(1361 556) rotate(80) scale(0.72)" d="M0-9L6 7 0 3.4-6 7z" fill="#6fe27a" stroke="#1f8a2f" stroke-width="1.11111"/><path transform="translate(560 715) rotate(250) scale(0.63)" d="M0-9L6 7 0 3.4-6 7z" fill="#6fe27a" stroke="#1f8a2f" stroke-width="1.26984"/><path transform="translate(579 723) rotate(250) scale(0.63)" d="M0-9L6 7 0 3.4-6 7z" fill="#6fe27a" stroke="#1f8a2f" stroke-width="1.26984"/><path transform="translate(397 779) rotate(245) scale(0.72)" d="M0-9L6 7 0 3.4-6 7z" fill="#6fe27a" stroke="#1f8a2f" stroke-width="1.11111"/><path transform="translate(363 792) rotate(250) scale(1)" d="M0-9L6 7 0 3.4-6 7z" fill="#6fe27a" stroke="#1f8a2f" stroke-width="0.8"/><path transform="translate(399 809) rotate(105) scale(1.05)" d="M0-9L6 7 0 3.4-6 7z" fill="#6fe27a" stroke="#1f8a2f" stroke-width="0.761905"/><path transform="translate(580 816) rotate(100) scale(0.63)" d="M0-9L6 7 0 3.4-6 7z" fill="#6fe27a" stroke="#1f8a2f" stroke-width="1.26984"/><path transform="translate(501 831) rotate(250) scale(0.63)" d="M0-9L6 7 0 3.4-6 7z" fill="#6fe27a" stroke="#1f8a2f" stroke-width="1.26984"/><path transform="translate(292 842) rotate(-50) scale(0.63)" d="M0-9L6 7 0 3.4-6 7z" fill="#6fe27a" stroke="#1f8a2f" stroke-width="1.26984"/><path transform="translate(283 894) rotate(50) scale(0.765)" d="M0-9L6 7 0 3.4-6 7z" fill="#6fe27a" stroke="#1f8a2f" stroke-width="1.04575"/><path transform="translate(237 926) rotate(50) scale(0.95)" d="M0-9L6 7 0 3.4-6 7z" fill="#6fe27a" stroke="#1f8a2f" stroke-width="0.842105"/><path transform="translate(182 931) rotate(10) scale(1.05)" d="M0-9L6 7 0 3.4-6 7z" fill="#6fe27a" stroke="#1f8a2f" stroke-width="0.761905"/><path transform="translate(177 994) rotate(40) scale(0.765)" d="M0-9L6 7 0 3.4-6 7z" fill="#6fe27a" stroke="#1f8a2f" stroke-width="1.04575"/><path transform="translate(153 557) rotate(10) scale(0.63)" d="M0-9L6 7 0 3.4-6 7z" fill="#6fe27a" stroke="#1f8a2f" stroke-width="1.26984"/><path transform="translate(159 654) rotate(190) scale(0.63)" d="M0-9L6 7 0 3.4-6 7z" fill="#6fe27a" stroke="#1f8a2f" stroke-width="1.26984"/><path transform="translate(131 177) rotate(100) scale(0.72)" d="M0-9L6 7 0 3.4-6 7z" fill="#6fe27a" stroke="#1f8a2f" stroke-width="1.11111"/><path transform="translate(440 618) rotate(100) scale(0.585)" d="M0-9L6 7 0 3.4-6 7z" fill="#6fe27a" stroke="#1f8a2f" stroke-width="1.36752"/><path transform="translate(1404 163) rotate(-40) scale(0.675)" d="M0-9L6 7 0 3.4-6 7z" fill="#6fe27a" stroke="#1f8a2f" stroke-width="1.18519"/><path transform="translate(417 741) rotate(100) scale(0.72)" d="M0-9L6 7 0 3.4-6 7z" fill="#1d5cf2" stroke="#123aa6" stroke-width="1.11111"/><path transform="translate(583 803) rotate(95) scale(0.72)" d="M0-9L6 7 0 3.4-6 7z" fill="#1d5cf2" stroke="#123aa6" stroke-width="1.11111"/><path transform="translate(143 559) rotate(55) scale(1.05)" d="M0-9L6 7 0 3.4-6 7z" fill="#1d5cf2" stroke="#123aa6" stroke-width="0.761905"/><path transform="translate(165 544) rotate(50) scale(0.63)" d="M0-9L6 7 0 3.4-6 7z" fill="#1d5cf2" stroke="#123aa6" stroke-width="1.26984"/><path transform="translate(203 580) rotate(180) scale(0.63)" d="M0-9L6 7 0 3.4-6 7z" fill="#1d5cf2" stroke="#123aa6" stroke-width="1.26984"/><path transform="translate(123 453) rotate(200) scale(0.585)" d="M0-9L6 7 0 3.4-6 7z" fill="#1d5cf2" stroke="#123aa6" stroke-width="1.36752"/><path transform="translate(102 338) rotate(215) scale(0.63)" d="M0-9L6 7 0 3.4-6 7z" fill="#1d5cf2" stroke="#123aa6" stroke-width="1.26984"/><path transform="translate(787 578) rotate(5) scale(1.3)" d="M0-9L6 7 0 3.4-6 7z" fill="#1d5cf2" stroke="#123aa6" stroke-width="0.615385"/><path transform="translate(845 548) rotate(5) scale(1.3)" d="M0-9L6 7 0 3.4-6 7z" fill="#1d5cf2" stroke="#123aa6" stroke-width="0.615385"/><path transform="translate(735 600) rotate(50) scale(0.9)" d="M0-9L6 7 0 3.4-6 7z" fill="#1d5cf2" stroke="#123aa6" stroke-width="0.888889"/><path transform="translate(877 518) rotate(140) scale(0.54)" d="M0-9L6 7 0 3.4-6 7z" fill="#1d5cf2" stroke="#123aa6" stroke-width="1.48148"/><path transform="translate(803 562) rotate(180) scale(0.72)" d="M0-9L6 7 0 3.4-6 7z" fill="#1d5cf2" stroke="#123aa6" stroke-width="1.11111"/><path transform="translate(282 463) rotate(195) scale(0.95)" d="M0-9L6 7 0 3.4-6 7z" fill="#1d5cf2" stroke="#123aa6" stroke-width="0.842105"/><path transform="translate(278 527) rotate(180) scale(0.72)" d="M0-9L6 7 0 3.4-6 7z" fill="#1d5cf2" stroke="#123aa6" stroke-width="1.11111"/><path transform="translate(251 525) rotate(100) scale(0.54)" d="M0-9L6 7 0 3.4-6 7z" fill="#1d5cf2" stroke="#123aa6" stroke-width="1.48148"/><path transform="translate(336 646) rotate(150) scale(0.63)" d="M0-9L6 7 0 3.4-6 7z" fill="#1d5cf2" stroke="#123aa6" stroke-width="1.26984"/><path transform="translate(337 657) rotate(200) scale(0.63)" d="M0-9L6 7 0 3.4-6 7z" fill="#1d5cf2" stroke="#123aa6" stroke-width="1.26984"/><path transform="translate(757 790) rotate(230) scale(0.765)" d="M0-9L6 7 0 3.4-6 7z" fill="#1d5cf2" stroke="#123aa6" stroke-width="1.04575"/><path transform="translate(790 768) rotate(60) scale(0.585)" d="M0-9L6 7 0 3.4-6 7z" fill="#1d5cf2" stroke="#123aa6" stroke-width="1.36752"/><path transform="translate(1195 456) rotate(170) scale(0.63)" d="M0-9L6 7 0 3.4-6 7z" fill="#1d5cf2" stroke="#123aa6" stroke-width="1.26984"/><path transform="translate(485 1006) rotate(270) scale(0.72)" d="M0-9L6 7 0 3.4-6 7z" fill="#1d5cf2" stroke="#123aa6" stroke-width="1.11111"/><path transform="translate(514 1001) rotate(120) scale(0.63)" d="M0-9L6 7 0 3.4-6 7z" fill="#1d5cf2" stroke="#123aa6" stroke-width="1.26984"/><path transform="translate(707 613) rotate(10) scale(1.3)" d="M0-9L6 7 0 3.4-6 7z" fill="#e25cf2" stroke="#a030b4" stroke-width="0.615385"/><path transform="translate(728 609) rotate(40) scale(0.624)" d="M0-9L6 7 0 3.4-6 7z" fill="#e25cf2" stroke="#a030b4" stroke-width="1.28205"/><path transform="translate(867 539) rotate(10) scale(0.546)" d="M0-9L6 7 0 3.4-6 7z" fill="#e25cf2" stroke="#a030b4" stroke-width="1.4652"/><path transform="translate(865 506) rotate(-10) scale(0.546)" d="M0-9L6 7 0 3.4-6 7z" fill="#e25cf2" stroke="#a030b4" stroke-width="1.4652"/><path transform="translate(922 501) rotate(-30) scale(0.507)" d="M0-9L6 7 0 3.4-6 7z" fill="#e25cf2" stroke="#a030b4" stroke-width="1.57791"/><path transform="translate(935 489) rotate(60) scale(0.468)" d="M0-9L6 7 0 3.4-6 7z" fill="#e25cf2" stroke="#a030b4" stroke-width="1.7094"/><path transform="translate(922 482) rotate(-60) scale(0.468)" d="M0-9L6 7 0 3.4-6 7z" fill="#e25cf2" stroke="#a030b4" stroke-width="1.7094"/><path transform="translate(349 609) rotate(0) scale(0.585)" d="M0-9L6 7 0 3.4-6 7z" fill="#e25cf2" stroke="#a030b4" stroke-width="1.36752"/><path transform="translate(352 628) rotate(-20) scale(0.546)" d="M0-9L6 7 0 3.4-6 7z" fill="#e25cf2" stroke="#a030b4" stroke-width="1.4652"/><path transform="translate(353 638) rotate(-30) scale(0.468)" d="M0-9L6 7 0 3.4-6 7z" fill="#e25cf2" stroke="#a030b4" stroke-width="1.7094"/><path transform="translate(368 641) rotate(-60) scale(0.546)" d="M0-9L6 7 0 3.4-6 7z" fill="#e25cf2" stroke="#a030b4" stroke-width="1.4652"/><path transform="translate(382 629) rotate(-20) scale(0.546)" d="M0-9L6 7 0 3.4-6 7z" fill="#e25cf2" stroke="#a030b4" stroke-width="1.4652"/><path transform="translate(323 677) rotate(30) scale(1)" d="M0-9L6 7 0 3.4-6 7z" fill="#e25cf2" stroke="#a030b4" stroke-width="0.8"/><path transform="translate(400 587) rotate(-70) scale(0.507)" d="M0-9L6 7 0 3.4-6 7z" fill="#e25cf2" stroke="#a030b4" stroke-width="1.57791"/><path transform="translate(430 650) rotate(-50) scale(0.585)" d="M0-9L6 7 0 3.4-6 7z" fill="#e25cf2" stroke="#a030b4" stroke-width="1.36752"/><path transform="translate(468 682) rotate(-10) scale(0.546)" d="M0-9L6 7 0 3.4-6 7z" fill="#e25cf2" stroke="#a030b4" stroke-width="1.4652"/><path transform="translate(534 671) rotate(-70) scale(0.546)" d="M0-9L6 7 0 3.4-6 7z" fill="#e25cf2" stroke="#a030b4" stroke-width="1.4652"/><path transform="translate(552 657) rotate(70) scale(0.546)" d="M0-9L6 7 0 3.4-6 7z" fill="#e25cf2" stroke="#a030b4" stroke-width="1.4652"/><path transform="translate(542 578) rotate(10) scale(0.546)" d="M0-9L6 7 0 3.4-6 7z" fill="#e25cf2" stroke="#a030b4" stroke-width="1.4652"/><path transform="translate(315 571) rotate(-30) scale(0.507)" d="M0-9L6 7 0 3.4-6 7z" fill="#e25cf2" stroke="#a030b4" stroke-width="1.57791"/><path transform="translate(292 442) rotate(20) scale(0.546)" d="M0-9L6 7 0 3.4-6 7z" fill="#e25cf2" stroke="#a030b4" stroke-width="1.4652"/><path transform="translate(250 451) rotate(-30) scale(0.546)" d="M0-9L6 7 0 3.4-6 7z" fill="#e25cf2" stroke="#a030b4" stroke-width="1.4652"/><path transform="translate(223 473) rotate(-20) scale(0.624)" d="M0-9L6 7 0 3.4-6 7z" fill="#e25cf2" stroke="#a030b4" stroke-width="1.28205"/><path transform="translate(165 472) rotate(-60) scale(0.546)" d="M0-9L6 7 0 3.4-6 7z" fill="#e25cf2" stroke="#a030b4" stroke-width="1.4652"/><path transform="translate(268 499) rotate(20) scale(0.546)" d="M0-9L6 7 0 3.4-6 7z" fill="#e25cf2" stroke="#a030b4" stroke-width="1.4652"/><path transform="translate(264 516) rotate(-60) scale(0.546)" d="M0-9L6 7 0 3.4-6 7z" fill="#e25cf2" stroke="#a030b4" stroke-width="1.4652"/><path transform="translate(270 518) rotate(-70) scale(0.546)" d="M0-9L6 7 0 3.4-6 7z" fill="#e25cf2" stroke="#a030b4" stroke-width="1.4652"/><path transform="translate(276 514) rotate(-50) scale(0.546)" d="M0-9L6 7 0 3.4-6 7z" fill="#e25cf2" stroke="#a030b4" stroke-width="1.4652"/><path transform="translate(281 516) rotate(-80) scale(0.624)" d="M0-9L6 7 0 3.4-6 7z" fill="#e25cf2" stroke="#a030b4" stroke-width="1.28205"/><path transform="translate(283 512) rotate(-40) scale(0.468)" d="M0-9L6 7 0 3.4-6 7z" fill="#e25cf2" stroke="#a030b4" stroke-width="1.7094"/><path transform="translate(200 522) rotate(-60) scale(0.468)" d="M0-9L6 7 0 3.4-6 7z" fill="#e25cf2" stroke="#a030b4" stroke-width="1.7094"/><path transform="translate(148 322) rotate(20) scale(0.507)" d="M0-9L6 7 0 3.4-6 7z" fill="#e25cf2" stroke="#a030b4" stroke-width="1.57791"/><path transform="translate(1204 416) rotate(190) scale(0.546)" d="M0-9L6 7 0 3.4-6 7z" fill="#e25cf2" stroke="#a030b4" stroke-width="1.4652"/><path transform="translate(781 769) rotate(10) scale(0.507)" d="M0-9L6 7 0 3.4-6 7z" fill="#e25cf2" stroke="#a030b4" stroke-width="1.57791"/><path transform="translate(768 791) rotate(-60) scale(0.468)" d="M0-9L6 7 0 3.4-6 7z" fill="#e25cf2" stroke="#a030b4" stroke-width="1.7094"/><path transform="translate(765 806) rotate(70) scale(0.546)" d="M0-9L6 7 0 3.4-6 7z" fill="#e25cf2" stroke="#a030b4" stroke-width="1.4652"/><path transform="translate(112 406) rotate(75) scale(0.546)" d="M0-9L6 7 0 3.4-6 7z" fill="#e25cf2" stroke="#a030b4" stroke-width="1.4652"/><path transform="translate(202 436) rotate(-50) scale(0.468)" d="M0-9L6 7 0 3.4-6 7z" fill="#e25cf2" stroke="#a030b4" stroke-width="1.7094"/><path transform="translate(209 438) rotate(20) scale(0.468)" d="M0-9L6 7 0 3.4-6 7z" fill="#e25cf2" stroke="#a030b4" stroke-width="1.7094"/><path transform="translate(800 577) rotate(-60) scale(0.468)" d="M0-9L6 7 0 3.4-6 7z" fill="#e25cf2" stroke="#a030b4" stroke-width="1.7094"/><path transform="translate(819 572) rotate(-70) scale(0.468)" d="M0-9L6 7 0 3.4-6 7z" fill="#e25cf2" stroke="#a030b4" stroke-width="1.7094"/><path transform="translate(768 573) rotate(70) scale(0.468)" d="M0-9L6 7 0 3.4-6 7z" fill="#e25cf2" stroke="#a030b4" stroke-width="1.7094"/><path transform="translate(214 618) rotate(190) scale(0.63)" d="M0-9L6 7 0 3.4-6 7z" fill="#35dfe8" stroke="#1a9aa2" stroke-width="1.26984"/><path transform="translate(183 693) rotate(170) scale(0.63)" d="M0-9L6 7 0 3.4-6 7z" fill="#35dfe8" stroke="#1a9aa2" stroke-width="1.26984"/><path transform="translate(177 703) rotate(100) scale(0.585)" d="M0-9L6 7 0 3.4-6 7z" fill="#35dfe8" stroke="#1a9aa2" stroke-width="1.36752"/><path transform="translate(178 704) rotate(90) scale(0.54)" d="M0-9L6 7 0 3.4-6 7z" fill="#35dfe8" stroke="#1a9aa2" stroke-width="1.48148"/><path transform="translate(144 182) rotate(215) scale(0.63)" d="M0-9L6 7 0 3.4-6 7z" fill="#35dfe8" stroke="#1a9aa2" stroke-width="1.26984"/><path transform="translate(1166 458) rotate(0) scale(0.63)" d="M0-9L6 7 0 3.4-6 7z" fill="#35dfe8" stroke="#1a9aa2" stroke-width="1.26984"/><path transform="translate(1162 475) rotate(90) scale(0.585)" d="M0-9L6 7 0 3.4-6 7z" fill="#35dfe8" stroke="#1a9aa2" stroke-width="1.36752"/><path transform="translate(845 778) rotate(270) scale(0.63)" d="M0-9L6 7 0 3.4-6 7z" fill="#35dfe8" stroke="#1a9aa2" stroke-width="1.26984"/><path transform="translate(1084 773) rotate(-10) scale(0.63)" d="M0-9L6 7 0 3.4-6 7z" fill="#35dfe8" stroke="#1a9aa2" stroke-width="1.26984"/><path transform="translate(1372 122) rotate(215) scale(0.72)" d="M0-9L6 7 0 3.4-6 7z" fill="#35dfe8" stroke="#1a9aa2" stroke-width="1.11111"/><path transform="translate(1401 112) rotate(-50) scale(0.72)" d="M0-9L6 7 0 3.4-6 7z" fill="#35dfe8" stroke="#1a9aa2" stroke-width="1.11111"/><path transform="translate(1386 674) rotate(170) scale(0.72)" d="M0-9L6 7 0 3.4-6 7z" fill="#35dfe8" stroke="#1a9aa2" stroke-width="1.11111"/><path transform="translate(1407 687) rotate(190) scale(0.63)" d="M0-9L6 7 0 3.4-6 7z" fill="#35dfe8" stroke="#1a9aa2" stroke-width="1.26984"/><path transform="translate(1419 700) rotate(-50) scale(0.63)" d="M0-9L6 7 0 3.4-6 7z" fill="#35dfe8" stroke="#1a9aa2" stroke-width="1.26984"/><path transform="translate(1424 710) rotate(200) scale(0.54)" d="M0-9L6 7 0 3.4-6 7z" fill="#35dfe8" stroke="#1a9aa2" stroke-width="1.48148"/><path transform="translate(1411 720) rotate(230) scale(0.54)" d="M0-9L6 7 0 3.4-6 7z" fill="#35dfe8" stroke="#1a9aa2" stroke-width="1.48148"/><path transform="translate(1372 648) rotate(170) scale(0.495)" d="M0-9L6 7 0 3.4-6 7z" fill="#f39468" stroke="#c06038" stroke-width="1.61616"/><path transform="translate(1372 204) rotate(0) scale(0.45)" d="M0-9L6 7 0 3.4-6 7z" fill="#f39468" stroke="#c06038" stroke-width="1.77778"/><path transform="translate(67 516) rotate(250) scale(0.63)" d="M0-9L6 7 0 3.4-6 7z" fill="#f39468" stroke="#c06038" stroke-width="1.26984"/><circle cx="659" cy="740" r="4" fill="#f4322c" stroke="#a31410" stroke-width=".8"/><circle cx="664" cy="737" r="4" fill="#f4322c" stroke="#a31410" stroke-width=".8"/><circle cx="669" cy="734" r="4" fill="#f4322c" stroke="#a31410" stroke-width=".8"/><circle cx="674" cy="732" r="4" fill="#f4322c" stroke="#a31410" stroke-width=".8"/><circle cx="894" cy="602" r="3" fill="#f4322c" stroke="#a31410" stroke-width=".8"/><circle cx="902" cy="603" r="3.2" fill="#f4322c" stroke="#a31410" stroke-width=".8"/><circle cx="906" cy="497" r="3.6" fill="#f4322c" stroke="#a31410" stroke-width=".8"/><circle cx="1385" cy="424" r="5.5" fill="#f4322c" stroke="#a31410" stroke-width=".8"/><circle cx="1356" cy="486" r="3.5" fill="#f4322c" stroke="#a31410" stroke-width=".8"/><circle cx="1305" cy="818" r="4" fill="#f4322c" stroke="#a31410" stroke-width=".8"/><circle cx="609" cy="606" r="5.2" fill="#f4322c" stroke="#a31410" stroke-width=".8"/><circle cx="616" cy="608" r="3.2" fill="#f4322c" stroke="#a31410" stroke-width=".8"/><circle cx="657" cy="741" r="3.5" fill="#f4322c" stroke="#a31410" stroke-width=".8"/><circle cx="632" cy="846" r="3" fill="#f4322c" stroke="#a31410" stroke-width=".8"/><circle cx="953" cy="666" r="4" fill="#f4322c" stroke="#a31410" stroke-width=".8"/><circle cx="965" cy="660" r="4" fill="#f4322c" stroke="#a31410" stroke-width=".8"/><circle cx="987" cy="667" r="4" fill="#f4322c" stroke="#a31410" stroke-width=".8"/><circle cx="993" cy="658" r="4" fill="#f4322c" stroke="#a31410" stroke-width=".8"/><circle cx="998" cy="658" r="4" fill="#f4322c" stroke="#a31410" stroke-width=".8"/><circle cx="1006" cy="653" r="4" fill="#f4322c" stroke="#a31410" stroke-width=".8"/><circle cx="1445" cy="621" r="3.5" fill="#f4322c" stroke="#a31410" stroke-width=".8"/><circle cx="1477" cy="488" r="4" fill="#f4322c" stroke="#a31410" stroke-width=".8"/><circle cx="1485" cy="494" r="3.5" fill="#f4322c" stroke="#a31410" stroke-width=".8"/><circle cx="1475" cy="493" r="3" fill="#f4322c" stroke="#a31410" stroke-width=".8"/><circle cx="1452" cy="393" r="3.5" fill="#f4322c" stroke="#a31410" stroke-width=".8"/><circle cx="721" cy="796" r="3" fill="#f4322c" stroke="#a31410" stroke-width=".8"/><circle cx="753" cy="806" r="3" fill="#f4322c" stroke="#a31410" stroke-width=".8"/><circle cx="800" cy="795" r="2.8" fill="#f4322c" stroke="#a31410" stroke-width=".8"/><circle cx="790" cy="623" r="3.6" fill="#6fe27a" stroke="#1f8a2f" stroke-width=".8"/><circle cx="629" cy="752" r="3" fill="#6fe27a" stroke="#1f8a2f" stroke-width=".8"/><circle cx="940" cy="671" r="4" fill="#6fe27a" stroke="#1f8a2f" stroke-width=".8"/><circle cx="945" cy="672" r="3.5" fill="#6fe27a" stroke="#1f8a2f" stroke-width=".8"/><circle cx="949" cy="672" r="3.5" fill="#6fe27a" stroke="#1f8a2f" stroke-width=".8"/><circle cx="953" cy="673" r="3.2" fill="#6fe27a" stroke="#1f8a2f" stroke-width=".8"/><circle cx="961" cy="665" r="3.5" fill="#6fe27a" stroke="#1f8a2f" stroke-width=".8"/><circle cx="970" cy="665" r="4" fill="#6fe27a" stroke="#1f8a2f" stroke-width=".8"/><circle cx="969" cy="674" r="4" fill="#6fe27a" stroke="#1f8a2f" stroke-width=".8"/><circle cx="984" cy="662" r="4" fill="#6fe27a" stroke="#1f8a2f" stroke-width=".8"/><circle cx="983" cy="671" r="4" fill="#6fe27a" stroke="#1f8a2f" stroke-width=".8"/><circle cx="990" cy="675" r="3.5" fill="#6fe27a" stroke="#1f8a2f" stroke-width=".8"/><circle cx="993" cy="671" r="3.5" fill="#6fe27a" stroke="#1f8a2f" stroke-width=".8"/><circle cx="991" cy="653" r="3.5" fill="#6fe27a" stroke="#1f8a2f" stroke-width=".8"/><circle cx="998" cy="651" r="3.5" fill="#6fe27a" stroke="#1f8a2f" stroke-width=".8"/><circle cx="1450" cy="614" r="4.5" fill="#6fe27a" stroke="#1f8a2f" stroke-width=".8"/><circle cx="1451" cy="627" r="4.5" fill="#6fe27a" stroke="#1f8a2f" stroke-width=".8"/><circle cx="1153" cy="457" r="4" fill="#6fe27a" stroke="#1f8a2f" stroke-width=".8"/><circle cx="1155" cy="452" r="3.5" fill="#6fe27a" stroke="#1f8a2f" stroke-width=".8"/><circle cx="1200" cy="413" r="3" fill="#6fe27a" stroke="#1f8a2f" stroke-width=".8"/><circle cx="1201" cy="419" r="3" fill="#6fe27a" stroke="#1f8a2f" stroke-width=".8"/><circle cx="1454" cy="383" r="4" fill="#6fe27a" stroke="#1f8a2f" stroke-width=".8"/><circle cx="140" cy="318" r="3" fill="#6fe27a" stroke="#1f8a2f" stroke-width=".8"/><circle cx="145" cy="319" r="3" fill="#6fe27a" stroke="#1f8a2f" stroke-width=".8"/><circle cx="157" cy="194" r="3.5" fill="#6fe27a" stroke="#1f8a2f" stroke-width=".8"/><circle cx="160" cy="198" r="3.5" fill="#6fe27a" stroke="#1f8a2f" stroke-width=".8"/><circle cx="433" cy="676" r="3.5" fill="#6fe27a" stroke="#1f8a2f" stroke-width=".8"/><circle cx="806" cy="791" r="3" fill="#6fe27a" stroke="#1f8a2f" stroke-width=".8"/><circle cx="795" cy="794" r="2.8" fill="#6fe27a" stroke="#1f8a2f" stroke-width=".8"/><circle cx="742" cy="805" r="3" fill="#6fe27a" stroke="#1f8a2f" stroke-width=".8"/><circle cx="752" cy="807" r="2.8" fill="#6fe27a" stroke="#1f8a2f" stroke-width=".8"/><circle cx="298" cy="452" r="3" fill="#6fe27a" stroke="#1f8a2f" stroke-width=".8"/><circle cx="312" cy="507" r="3" fill="#6fe27a" stroke="#1f8a2f" stroke-width=".8"/><circle cx="1034" cy="460" r="2.6" fill="#6fe27a" stroke="#1f8a2f" stroke-width=".8"/><circle cx="282" cy="445" r="5.2" fill="#1d5cf2" stroke="#123aa6" stroke-width=".8"/><circle cx="267" cy="444" r="4.6" fill="#6fe27a" stroke="#1f8a2f" stroke-width=".8"/><circle cx="266" cy="443" r="2.6" fill="#35dfe8" stroke="#1a9aa2" stroke-width=".8"/><circle cx="764" cy="811" r="4" fill="#1d5cf2" stroke="#123aa6" stroke-width=".8"/><circle cx="638" cy="852" r="3" fill="#6fe27a" stroke="#1f8a2f" stroke-width=".8"/><circle cx="640" cy="852" r="2.6" fill="#1d5cf2" stroke="#123aa6" stroke-width=".8"/><circle cx="293" cy="519" r="3.6" fill="#e25cf2" stroke="#a030b4" stroke-width=".8"/><circle cx="205" cy="136" r="2.6" fill="#f7a5a5" stroke="#f08080" stroke-width=".8"/><circle cx="1450" cy="254" r="2.6" fill="#f7a5a5" stroke="#f08080" stroke-width=".8"/><circle cx="1486" cy="352" r="2.8" fill="#6fe27a" stroke="#1f8a2f" stroke-width=".8"/><circle cx="309" cy="447" r="3.6" fill="none" stroke="#222" stroke-width="1.3"/><circle cx="761" cy="815" r="4.2" fill="none" stroke="#222" stroke-width="1.3"/><circle cx="761" cy="815" r="2" fill="none" stroke="#222" stroke-width="1"/><circle cx="1774" cy="633" r="3.4" fill="none" stroke="#222" stroke-width="1.3"/><circle cx="1468.72" cy="645.385" r="3.23771" fill="#6fe27a" stroke="#1f8a2f" stroke-width=".8"/><circle cx="1466.52" cy="648.207" r="4.37117" fill="#f4322c" stroke="#a31410" stroke-width=".8"/><circle cx="1461.58" cy="641.567" r="3.69499" fill="#f4322c" stroke="#a31410" stroke-width=".8"/><circle cx="1461.43" cy="638.491" r="3.7306" fill="#f4322c" stroke="#a31410" stroke-width=".8"/><circle cx="1462.55" cy="647.144" r="3.40749" fill="#6fe27a" stroke="#1f8a2f" stroke-width=".8"/><circle cx="1471.16" cy="636.943" r="3.77829" fill="#6fe27a" stroke="#1f8a2f" stroke-width=".8"/><circle cx="1461.85" cy="648.613" r="3.47229" fill="#f4322c" stroke="#a31410" stroke-width=".8"/><circle cx="1463.02" cy="648.754" r="3.5761" fill="#f4322c" stroke="#a31410" stroke-width=".8"/><circle cx="1473.46" cy="642.549" r="3.43617" fill="#f4322c" stroke="#a31410" stroke-width=".8"/><rect x="1459.1" y="634.1" width="3.8" height="3.8" fill="#35dfe8" stroke="#1a9aa2" stroke-width=".7"/><circle cx="1431.5" cy="684.6" r="3.19758" fill="#6fe27a" stroke="#1f8a2f" stroke-width=".8"/><circle cx="1421.78" cy="682.621" r="3.12762" fill="#f4322c" stroke="#a31410" stroke-width=".8"/><circle cx="1414.87" cy="724.314" r="2.60677" fill="#6fe27a" stroke="#1f8a2f" stroke-width=".8"/><circle cx="1426.85" cy="693.625" r="3.3107" fill="#f4322c" stroke="#a31410" stroke-width=".8"/><circle cx="1417.04" cy="716.571" r="3.56244" fill="#f4322c" stroke="#a31410" stroke-width=".8"/><circle cx="1427.27" cy="675.648" r="4.49844" fill="#f4322c" stroke="#a31410" stroke-width=".8"/><circle cx="1421.72" cy="697.875" r="4.17548" fill="#6fe27a" stroke="#1f8a2f" stroke-width=".8"/><circle cx="1420.52" cy="709.025" r="3.50564" fill="#f4322c" stroke="#a31410" stroke-width=".8"/><circle cx="1425.02" cy="711.918" r="2.83804" fill="#f4322c" stroke="#a31410" stroke-width=".8"/><circle cx="1413.45" cy="724.448" r="3.28876" fill="#6fe27a" stroke="#1f8a2f" stroke-width=".8"/><circle cx="1421.48" cy="705.581" r="2.81611" fill="#6fe27a" stroke="#1f8a2f" stroke-width=".8"/><circle cx="1421.97" cy="723.023" r="2.67326" fill="#f4322c" stroke="#a31410" stroke-width=".8"/><circle cx="1431.13" cy="677.836" r="3.62576" fill="#f4322c" stroke="#a31410" stroke-width=".8"/><circle cx="1421.8" cy="681.485" r="4.4484" fill="#f4322c" stroke="#a31410" stroke-width=".8"/><circle cx="1424.72" cy="691.997" r="3.21234" fill="#f4322c" stroke="#a31410" stroke-width=".8"/><circle cx="1426.41" cy="712.116" r="3.97835" fill="#35dfe8" stroke="#1a9aa2" stroke-width=".8"/><circle cx="1431.95" cy="682.338" r="2.76192" fill="#f4322c" stroke="#a31410" stroke-width=".8"/><circle cx="1416.91" cy="731.111" r="3.07467" fill="#f4322c" stroke="#a31410" stroke-width=".8"/><circle cx="1418.88" cy="724.883" r="3.90193" fill="#6fe27a" stroke="#1f8a2f" stroke-width=".8"/><circle cx="1408.44" cy="734.659" r="2.66544" fill="#35dfe8" stroke="#1a9aa2" stroke-width=".8"/><path transform="translate(1425 676) rotate(180) scale(1)" d="M0-9L6 7 0 3.4-6 7z" fill="#f4322c" stroke="#a31410" stroke-width="0.8"/><path transform="translate(1782.85 635.9) rotate(47.0059) scale(0.479624)" d="M0-9L6 7 0 3.4-6 7z" fill="#1d5cf2" stroke="#123aa6" stroke-width="1.66797"/><path transform="translate(1793.8 633.195) rotate(283.683) scale(0.338992)" d="M0-9L6 7 0 3.4-6 7z" fill="#1d5cf2" stroke="#123aa6" stroke-width="2.35994"/><path transform="translate(1781.43 626.94) rotate(304.104) scale(0.381333)" d="M0-9L6 7 0 3.4-6 7z" fill="#1d5cf2" stroke="#123aa6" stroke-width="2.0979"/><path transform="translate(1781.88 637.991) rotate(306.811) scale(0.534602)" d="M0-9L6 7 0 3.4-6 7z" fill="#1d5cf2" stroke="#123aa6" stroke-width="1.49644"/><path transform="translate(1781.88 631.346) rotate(262.622) scale(0.422785)" d="M0-9L6 7 0 3.4-6 7z" fill="#1d5cf2" stroke="#123aa6" stroke-width="1.89222"/><path transform="translate(1777.98 630.249) rotate(52.7423) scale(0.399825)" d="M0-9L6 7 0 3.4-6 7z" fill="#1d5cf2" stroke="#123aa6" stroke-width="2.00087"/><path transform="translate(1794.72 637.478) rotate(225.707) scale(0.427348)" d="M0-9L6 7 0 3.4-6 7z" fill="#1d5cf2" stroke="#123aa6" stroke-width="1.87201"/><path transform="translate(1779.12 626.159) rotate(98.0316) scale(0.490954)" d="M0-9L6 7 0 3.4-6 7z" fill="#1d5cf2" stroke="#123aa6" stroke-width="1.62948"/><path transform="translate(1791.82 629.697) rotate(282.968) scale(0.489352)" d="M0-9L6 7 0 3.4-6 7z" fill="#1d5cf2" stroke="#123aa6" stroke-width="1.63481"/><path transform="translate(1787.67 633.632) rotate(273.47) scale(0.396772)" d="M0-9L6 7 0 3.4-6 7z" fill="#1d5cf2" stroke="#123aa6" stroke-width="2.01627"/><path transform="translate(1787.91 628.651) rotate(174.847) scale(0.488193)" d="M0-9L6 7 0 3.4-6 7z" fill="#1d5cf2" stroke="#123aa6" stroke-width="1.6387"/><path transform="translate(1787.58 628.82) rotate(340.397) scale(0.461181)" d="M0-9L6 7 0 3.4-6 7z" fill="#1d5cf2" stroke="#123aa6" stroke-width="1.73468"/><path transform="translate(1784.94 625.151) rotate(196.917) scale(0.371406)" d="M0-9L6 7 0 3.4-6 7z" fill="#1d5cf2" stroke="#123aa6" stroke-width="2.15398"/><path transform="translate(1787.12 631.018) rotate(294.005) scale(0.460673)" d="M0-9L6 7 0 3.4-6 7z" fill="#1d5cf2" stroke="#123aa6" stroke-width="1.73659"/><rect x="1798.1" y="655.1" width="3.8" height="3.8" fill="#1d5cf2" stroke="#123aa6" stroke-width=".7"/><rect x="1804.1" y="661.1" width="3.8" height="3.8" fill="#1d5cf2" stroke="#123aa6" stroke-width=".7"/><rect x="1792.1" y="644.1" width="3.8" height="3.8" fill="#35dfe8" stroke="#1a9aa2" stroke-width=".7"/><rect x="1764.25" y="636.25" width="3.5" height="3.5" fill="#f39468" stroke="#c06038" stroke-width=".7"/><rect x="1762.25" y="640.25" width="3.5" height="3.5" fill="#6fe27a" stroke="#1f8a2f" stroke-width=".7"/><rect x="1766.25" y="643.25" width="3.5" height="3.5" fill="#35dfe8" stroke="#1a9aa2" stroke-width=".7"/><path transform="translate(1819 300) rotate(30) scale(0.63)" d="M0-9L6 7 0 3.4-6 7z" fill="#1d5cf2" stroke="#123aa6" stroke-width="1.26984"/><path d="M1398 714l4 3-1.5 4.5h-5l-1.5-4.5z" fill="#f39468" stroke="#c06038" stroke-width=".6"/><path d="M1396 719l4 3-1.5 4.5h-5l-1.5-4.5z" fill="#6fe27a" stroke="#1f8a2f" stroke-width=".6"/><g transform="translate(863 587)" fill="none" stroke="#f59a9a" stroke-width="1.1"><path d="M0-7.5L7.5 0 0 7.5-7.5 0z"/><path d="M0-4L4 0 0 4-4 0z"/><circle r="1" fill="#f59a9a"/></g><g transform="translate(906 592)" fill="none" stroke="#f59a9a" stroke-width="1.1"><path d="M0-7.5L7.5 0 0 7.5-7.5 0z"/><path d="M0-4L4 0 0 4-4 0z"/><circle r="1" fill="#f59a9a"/></g><g transform="translate(854 601)" fill="none" stroke="#f59a9a" stroke-width="1.1"><path d="M0-7.5L7.5 0 0 7.5-7.5 0z"/><path d="M0-4L4 0 0 4-4 0z"/><circle r="1" fill="#f59a9a"/></g><g transform="translate(89 191)" fill="none" stroke="#f59a9a" stroke-width="1.1"><path d="M0-7.5L7.5 0 0 7.5-7.5 0z"/><path d="M0-4L4 0 0 4-4 0z"/><circle r="1" fill="#f59a9a"/></g><g transform="translate(611 606)" fill="none" stroke="#f59a9a" stroke-width="1.1"><path d="M0-7.5L7.5 0 0 7.5-7.5 0z"/><path d="M0-4L4 0 0 4-4 0z"/><circle r="1" fill="#f59a9a"/></g><path transform="translate(695 634)" d="M0-4.2L4.2 0 0 4.2-4.2 0z" fill="#f9b3b3"/><path transform="translate(695 634)" d="M-2 0H2M0-2V2" stroke="#ee7d7d" stroke-width="1"/><path transform="translate(731 728)" d="M0-4.2L4.2 0 0 4.2-4.2 0z" fill="#f9b3b3"/><path transform="translate(731 728)" d="M-2 0H2M0-2V2" stroke="#ee7d7d" stroke-width="1"/><path transform="translate(783 722)" d="M0-4.2L4.2 0 0 4.2-4.2 0z" fill="#f9b3b3"/><path transform="translate(783 722)" d="M-2 0H2M0-2V2" stroke="#ee7d7d" stroke-width="1"/><path transform="translate(783 735)" d="M0-4.2L4.2 0 0 4.2-4.2 0z" fill="#f9b3b3"/><path transform="translate(783 735)" d="M-2 0H2M0-2V2" stroke="#ee7d7d" stroke-width="1"/><path transform="translate(746 752)" d="M0-4.2L4.2 0 0 4.2-4.2 0z" fill="#f9b3b3"/><path transform="translate(746 752)" d="M-2 0H2M0-2V2" stroke="#ee7d7d" stroke-width="1"/><path transform="translate(755 753)" d="M0-4.2L4.2 0 0 4.2-4.2 0z" fill="#f9b3b3"/><path transform="translate(755 753)" d="M-2 0H2M0-2V2" stroke="#ee7d7d" stroke-width="1"/><path transform="translate(814 756)" d="M0-4.2L4.2 0 0 4.2-4.2 0z" fill="#f9b3b3"/><path transform="translate(814 756)" d="M-2 0H2M0-2V2" stroke="#ee7d7d" stroke-width="1"/><path transform="translate(828 761)" d="M0-4.2L4.2 0 0 4.2-4.2 0z" fill="#f9b3b3"/><path transform="translate(828 761)" d="M-2 0H2M0-2V2" stroke="#ee7d7d" stroke-width="1"/><path transform="translate(840 761)" d="M0-4.2L4.2 0 0 4.2-4.2 0z" fill="#f9b3b3"/><path transform="translate(840 761)" d="M-2 0H2M0-2V2" stroke="#ee7d7d" stroke-width="1"/><path transform="translate(823 771)" d="M0-4.2L4.2 0 0 4.2-4.2 0z" fill="#f9b3b3"/><path transform="translate(823 771)" d="M-2 0H2M0-2V2" stroke="#ee7d7d" stroke-width="1"/><path transform="translate(746 783)" d="M0-4.2L4.2 0 0 4.2-4.2 0z" fill="#f9b3b3"/><path transform="translate(746 783)" d="M-2 0H2M0-2V2" stroke="#ee7d7d" stroke-width="1"/><path transform="translate(757 783)" d="M0-4.2L4.2 0 0 4.2-4.2 0z" fill="#f9b3b3"/><path transform="translate(757 783)" d="M-2 0H2M0-2V2" stroke="#ee7d7d" stroke-width="1"/><path transform="translate(919 716)" d="M0-4.2L4.2 0 0 4.2-4.2 0z" fill="#f9b3b3"/><path transform="translate(919 716)" d="M-2 0H2M0-2V2" stroke="#ee7d7d" stroke-width="1"/><path transform="translate(1133 729)" d="M0-4.2L4.2 0 0 4.2-4.2 0z" fill="#f9b3b3"/><path transform="translate(1133 729)" d="M-2 0H2M0-2V2" stroke="#ee7d7d" stroke-width="1"/><path transform="translate(1003 499)" d="M0-4.2L4.2 0 0 4.2-4.2 0z" fill="#f9b3b3"/><path transform="translate(1003 499)" d="M-2 0H2M0-2V2" stroke="#ee7d7d" stroke-width="1"/><path transform="translate(801 573)" d="M0-4.2L4.2 0 0 4.2-4.2 0z" fill="#f9b3b3"/><path transform="translate(801 573)" d="M-2 0H2M0-2V2" stroke="#ee7d7d" stroke-width="1"/><path transform="translate(685 792)" d="M0-4.2L4.2 0 0 4.2-4.2 0z" fill="#f9b3b3"/><path transform="translate(685 792)" d="M-2 0H2M0-2V2" stroke="#ee7d7d" stroke-width="1"/><path transform="translate(715 791)" d="M0-4.2L4.2 0 0 4.2-4.2 0z" fill="#f9b3b3"/><path transform="translate(715 791)" d="M-2 0H2M0-2V2" stroke="#ee7d7d" stroke-width="1"/><path transform="translate(311 896)" d="M0-4.2L4.2 0 0 4.2-4.2 0z" fill="#f9b3b3"/><path transform="translate(311 896)" d="M-2 0H2M0-2V2" stroke="#ee7d7d" stroke-width="1"/><path transform="translate(414 890)" d="M0-4.2L4.2 0 0 4.2-4.2 0z" fill="#f9b3b3"/><path transform="translate(414 890)" d="M-2 0H2M0-2V2" stroke="#ee7d7d" stroke-width="1"/><path transform="translate(536 847)" d="M0-4.2L4.2 0 0 4.2-4.2 0z" fill="#f9b3b3"/><path transform="translate(536 847)" d="M-2 0H2M0-2V2" stroke="#ee7d7d" stroke-width="1"/><path transform="translate(630 821)" d="M0-4.2L4.2 0 0 4.2-4.2 0z" fill="#f9b3b3"/><path transform="translate(630 821)" d="M-2 0H2M0-2V2" stroke="#ee7d7d" stroke-width="1"/><path transform="translate(630 832)" d="M0-4.2L4.2 0 0 4.2-4.2 0z" fill="#f9b3b3"/><path transform="translate(630 832)" d="M-2 0H2M0-2V2" stroke="#ee7d7d" stroke-width="1"/><path transform="translate(268 991)" d="M0-4.2L4.2 0 0 4.2-4.2 0z" fill="#f9b3b3"/><path transform="translate(268 991)" d="M-2 0H2M0-2V2" stroke="#ee7d7d" stroke-width="1"/><path transform="translate(296 998)" d="M0-4.2L4.2 0 0 4.2-4.2 0z" fill="#f9b3b3"/><path transform="translate(296 998)" d="M-2 0H2M0-2V2" stroke="#ee7d7d" stroke-width="1"/><path transform="translate(219 1003)" d="M0-4.2L4.2 0 0 4.2-4.2 0z" fill="#f9b3b3"/><path transform="translate(219 1003)" d="M-2 0H2M0-2V2" stroke="#ee7d7d" stroke-width="1"/><path transform="translate(511 991)" d="M0-4.2L4.2 0 0 4.2-4.2 0z" fill="#f9b3b3"/><path transform="translate(511 991)" d="M-2 0H2M0-2V2" stroke="#ee7d7d" stroke-width="1"/><path transform="translate(1084 774)" d="M0-4.2L4.2 0 0 4.2-4.2 0z" fill="#f9b3b3"/><path transform="translate(1084 774)" d="M-2 0H2M0-2V2" stroke="#ee7d7d" stroke-width="1"/><path transform="translate(440 680)" d="M0-4.2L4.2 0 0 4.2-4.2 0z" fill="#f9b3b3"/><path transform="translate(440 680)" d="M-2 0H2M0-2V2" stroke="#ee7d7d" stroke-width="1"/><rect x="821.2" y="467.2" width="3.6" height="3.6" fill="#e25cf2" stroke="#a030b4" stroke-width=".7"/><rect x="995.2" y="456.2" width="3.6" height="3.6" fill="#e25cf2" stroke="#a030b4" stroke-width=".7"/><rect x="956.2" y="504.2" width="3.6" height="3.6" fill="#e25cf2" stroke="#a030b4" stroke-width=".7"/><rect x="924.2" y="514.2" width="3.6" height="3.6" fill="#e25cf2" stroke="#a030b4" stroke-width=".7"/><rect x="895.2" y="532.2" width="3.6" height="3.6" fill="#e25cf2" stroke="#a030b4" stroke-width=".7"/><rect x="901.2" y="535.2" width="3.6" height="3.6" fill="#e25cf2" stroke="#a030b4" stroke-width=".7"/><rect x="873.2" y="563.2" width="3.6" height="3.6" fill="#e25cf2" stroke="#a030b4" stroke-width=".7"/><rect x="760.2" y="571.2" width="3.6" height="3.6" fill="#e25cf2" stroke="#a030b4" stroke-width=".7"/><rect x="699.2" y="598.2" width="3.6" height="3.6" fill="#e25cf2" stroke="#a030b4" stroke-width=".7"/><rect x="1143.2" y="436.2" width="3.6" height="3.6" fill="#e25cf2" stroke="#a030b4" stroke-width=".7"/><rect x="1126.2" y="457.2" width="3.6" height="3.6" fill="#e25cf2" stroke="#a030b4" stroke-width=".7"/><rect x="109.2" y="446.2" width="3.6" height="3.6" fill="#e25cf2" stroke="#a030b4" stroke-width=".7"/><rect x="156.2" y="428.2" width="3.6" height="3.6" fill="#e25cf2" stroke="#a030b4" stroke-width=".7"/><rect x="75.2" y="494.2" width="3.6" height="3.6" fill="#e25cf2" stroke="#a030b4" stroke-width=".7"/><rect x="216.2" y="597.2" width="3.6" height="3.6" fill="#e25cf2" stroke="#a030b4" stroke-width=".7"/><rect x="76.2" y="622.2" width="3.6" height="3.6" fill="#e25cf2" stroke="#a030b4" stroke-width=".7"/><rect x="206.2" y="640.2" width="3.6" height="3.6" fill="#e25cf2" stroke="#a030b4" stroke-width=".7"/><rect x="216.2" y="651.2" width="3.6" height="3.6" fill="#e25cf2" stroke="#a030b4" stroke-width=".7"/><rect x="143.2" y="688.2" width="3.6" height="3.6" fill="#e25cf2" stroke="#a030b4" stroke-width=".7"/><rect x="299.2" y="619.2" width="3.6" height="3.6" fill="#e25cf2" stroke="#a030b4" stroke-width=".7"/><rect x="294.2" y="657.2" width="3.6" height="3.6" fill="#e25cf2" stroke="#a030b4" stroke-width=".7"/><rect x="325.2" y="626.2" width="3.6" height="3.6" fill="#e25cf2" stroke="#a030b4" stroke-width=".7"/><rect x="367.2" y="614.2" width="3.6" height="3.6" fill="#e25cf2" stroke="#a030b4" stroke-width=".7"/><rect x="368.2" y="645.2" width="3.6" height="3.6" fill="#e25cf2" stroke="#a030b4" stroke-width=".7"/><rect x="420.2" y="597.2" width="3.6" height="3.6" fill="#e25cf2" stroke="#a030b4" stroke-width=".7"/><rect x="482.2" y="647.2" width="3.6" height="3.6" fill="#e25cf2" stroke="#a030b4" stroke-width=".7"/><rect x="521.2" y="621.2" width="3.6" height="3.6" fill="#e25cf2" stroke="#a030b4" stroke-width=".7"/><rect x="555.2" y="631.2" width="3.6" height="3.6" fill="#e25cf2" stroke="#a030b4" stroke-width=".7"/><rect x="571.2" y="647.2" width="3.6" height="3.6" fill="#e25cf2" stroke="#a030b4" stroke-width=".7"/><rect x="544.2" y="671.2" width="3.6" height="3.6" fill="#e25cf2" stroke="#a030b4" stroke-width=".7"/><rect x="605.2" y="616.2" width="3.6" height="3.6" fill="#e25cf2" stroke="#a030b4" stroke-width=".7"/><rect x="629.2" y="610.2" width="3.6" height="3.6" fill="#e25cf2" stroke="#a030b4" stroke-width=".7"/><rect x="161.2" y="187.2" width="3.6" height="3.6" fill="#e25cf2" stroke="#a030b4" stroke-width=".7"/><rect x="162.2" y="192.2" width="3.6" height="3.6" fill="#e25cf2" stroke="#a030b4" stroke-width=".7"/><rect x="1385.2" y="215.2" width="3.6" height="3.6" fill="#e25cf2" stroke="#a030b4" stroke-width=".7"/><rect x="1404.2" y="209.2" width="3.6" height="3.6" fill="#e25cf2" stroke="#a030b4" stroke-width=".7"/><rect x="915.2" y="759.2" width="3.6" height="3.6" fill="#e25cf2" stroke="#a030b4" stroke-width=".7"/><rect x="772.2" y="802.2" width="3.6" height="3.6" fill="#e25cf2" stroke="#a030b4" stroke-width=".7"/><rect x="732.2" y="806.2" width="3.6" height="3.6" fill="#e25cf2" stroke="#a030b4" stroke-width=".7"/><rect x="711.2" y="805.2" width="3.6" height="3.6" fill="#e25cf2" stroke="#a030b4" stroke-width=".7"/><rect x="659.2" y="825.2" width="3.6" height="3.6" fill="#e25cf2" stroke="#a030b4" stroke-width=".7"/><rect x="660.2" y="886.2" width="3.6" height="3.6" fill="#e25cf2" stroke="#a030b4" stroke-width=".7"/><rect x="855.2" y="783.2" width="3.6" height="3.6" fill="#e25cf2" stroke="#a030b4" stroke-width=".7"/><rect x="833.2" y="779.2" width="3.6" height="3.6" fill="#e25cf2" stroke="#a030b4" stroke-width=".7"/><rect x="395.2" y="965.2" width="3.6" height="3.6" fill="#e25cf2" stroke="#a030b4" stroke-width=".7"/><rect x="531.2" y="894.2" width="3.6" height="3.6" fill="#e25cf2" stroke="#a030b4" stroke-width=".7"/><rect x="535.2" y="982.2" width="3.6" height="3.6" fill="#e25cf2" stroke="#a030b4" stroke-width=".7"/><rect x="1403.2" y="729.2" width="3.6" height="3.6" fill="#e25cf2" stroke="#a030b4" stroke-width=".7"/><rect x="164.2" y="605.2" width="3.6" height="3.6" fill="#e25cf2" stroke="#a030b4" stroke-width=".7"/><rect x="242.533" y="441.533" width="3.6" height="3.6" fill="#e25cf2" stroke="#a030b4" stroke-width=".7"/><rect x="247.2" y="441.533" width="3.6" height="3.6" fill="#e25cf2" stroke="#a030b4" stroke-width=".7"/><rect x="283.2" y="448.2" width="3.6" height="3.6" fill="#e25cf2" stroke="#a030b4" stroke-width=".7"/><rect x="294.867" y="445.867" width="3.6" height="3.6" fill="#e25cf2" stroke="#a030b4" stroke-width=".7"/><rect x="222.533" y="460.533" width="3.6" height="3.6" fill="#e25cf2" stroke="#a030b4" stroke-width=".7"/><rect x="249.2" y="470.533" width="3.6" height="3.6" fill="#e25cf2" stroke="#a030b4" stroke-width=".7"/><rect x="253.867" y="479.2" width="3.6" height="3.6" fill="#e25cf2" stroke="#a030b4" stroke-width=".7"/><rect x="234.867" y="474.2" width="3.6" height="3.6" fill="#e25cf2" stroke="#a030b4" stroke-width=".7"/><rect x="261.533" y="474.867" width="3.6" height="3.6" fill="#e25cf2" stroke="#a030b4" stroke-width=".7"/><rect x="278.2" y="479.867" width="3.6" height="3.6" fill="#e25cf2" stroke="#a030b4" stroke-width=".7"/><rect x="290.867" y="467.533" width="3.6" height="3.6" fill="#e25cf2" stroke="#a030b4" stroke-width=".7"/><rect x="294.867" y="467.533" width="3.6" height="3.6" fill="#e25cf2" stroke="#a030b4" stroke-width=".7"/><rect x="306.533" y="464.2" width="3.6" height="3.6" fill="#e25cf2" stroke="#a030b4" stroke-width=".7"/><rect x="317.533" y="466.533" width="3.6" height="3.6" fill="#e25cf2" stroke="#a030b4" stroke-width=".7"/><rect x="254.867" y="461.533" width="3.6" height="3.6" fill="#e25cf2" stroke="#a030b4" stroke-width=".7"/><rect x="244.867" y="494.867" width="3.6" height="3.6" fill="#e25cf2" stroke="#a030b4" stroke-width=".7"/><rect x="250.533" y="495.867" width="3.6" height="3.6" fill="#e25cf2" stroke="#a030b4" stroke-width=".7"/><rect x="221.533" y="494.867" width="3.6" height="3.6" fill="#e25cf2" stroke="#a030b4" stroke-width=".7"/><rect x="239.867" y="507.533" width="3.6" height="3.6" fill="#e25cf2" stroke="#a030b4" stroke-width=".7"/><rect x="200.533" y="533.867" width="3.6" height="3.6" fill="#e25cf2" stroke="#a030b4" stroke-width=".7"/><rect x="215.867" y="535.867" width="3.6" height="3.6" fill="#e25cf2" stroke="#a030b4" stroke-width=".7"/><rect x="244.867" y="531.533" width="3.6" height="3.6" fill="#e25cf2" stroke="#a030b4" stroke-width=".7"/><rect x="291.533" y="529.867" width="3.6" height="3.6" fill="#e25cf2" stroke="#a030b4" stroke-width=".7"/><rect x="282.533" y="543.867" width="3.6" height="3.6" fill="#e25cf2" stroke="#a030b4" stroke-width=".7"/><rect x="312.533" y="553.2" width="3.6" height="3.6" fill="#e25cf2" stroke="#a030b4" stroke-width=".7"/><rect x="309.2" y="507.533" width="3.6" height="3.6" fill="#e25cf2" stroke="#a030b4" stroke-width=".7"/><rect x="321.533" y="500.867" width="3.6" height="3.6" fill="#e25cf2" stroke="#a030b4" stroke-width=".7"/><rect x="185.533" y="568.867" width="3.6" height="3.6" fill="#e25cf2" stroke="#a030b4" stroke-width=".7"/><rect x="786.346" y="562.71" width="3.8" height="3.8" fill="#e25cf2" stroke="#a030b4" stroke-width=".7"/><rect x="754.507" y="580.935" width="3.8" height="3.8" fill="#e25cf2" stroke="#a030b4" stroke-width=".7"/><rect x="790.92" y="569.188" width="3.8" height="3.8" fill="#e25cf2" stroke="#a030b4" stroke-width=".7"/><rect x="771.513" y="577.949" width="3.8" height="3.8" fill="#35dfe8" stroke="#1a9aa2" stroke-width=".7"/><rect x="737.803" y="583.189" width="3.8" height="3.8" fill="#35dfe8" stroke="#1a9aa2" stroke-width=".7"/><rect x="841.915" y="548.618" width="3.8" height="3.8" fill="#e25cf2" stroke="#a030b4" stroke-width=".7"/><rect x="751.173" y="575.318" width="3.8" height="3.8" fill="#e25cf2" stroke="#a030b4" stroke-width=".7"/><rect x="748.329" y="586.651" width="3.8" height="3.8" fill="#e25cf2" stroke="#a030b4" stroke-width=".7"/><rect x="740.383" y="587.056" width="3.8" height="3.8" fill="#35dfe8" stroke="#1a9aa2" stroke-width=".7"/><rect x="835.135" y="550.948" width="3.8" height="3.8" fill="#e25cf2" stroke="#a030b4" stroke-width=".7"/><rect x="810.637" y="558.146" width="3.8" height="3.8" fill="#e25cf2" stroke="#a030b4" stroke-width=".7"/><rect x="835.401" y="548.495" width="3.8" height="3.8" fill="#e25cf2" stroke="#a030b4" stroke-width=".7"/><rect x="778.702" y="565.414" width="3.8" height="3.8" fill="#e25cf2" stroke="#a030b4" stroke-width=".7"/><rect x="756.041" y="583.647" width="3.8" height="3.8" fill="#e25cf2" stroke="#a030b4" stroke-width=".7"/><rect x="739.401" y="582.515" width="3.8" height="3.8" fill="#e25cf2" stroke="#a030b4" stroke-width=".7"/><rect x="749.101" y="576.167" width="3.8" height="3.8" fill="#35dfe8" stroke="#1a9aa2" stroke-width=".7"/><rect x="837.337" y="537.113" width="3.8" height="3.8" fill="#e25cf2" stroke="#a030b4" stroke-width=".7"/><rect x="733.546" y="591.143" width="3.8" height="3.8" fill="#e25cf2" stroke="#a030b4" stroke-width=".7"/><rect x="836.06" y="539.106" width="3.8" height="3.8" fill="#e25cf2" stroke="#a030b4" stroke-width=".7"/><rect x="835.735" y="538.124" width="3.8" height="3.8" fill="#e25cf2" stroke="#a030b4" stroke-width=".7"/><rect x="790.692" y="564.079" width="3.8" height="3.8" fill="#e25cf2" stroke="#a030b4" stroke-width=".7"/><rect x="839.007" y="541.341" width="3.8" height="3.8" fill="#e25cf2" stroke="#a030b4" stroke-width=".7"/><rect x="755.199" y="582.057" width="3.8" height="3.8" fill="#35dfe8" stroke="#1a9aa2" stroke-width=".7"/><rect x="799.777" y="553.857" width="3.8" height="3.8" fill="#e25cf2" stroke="#a030b4" stroke-width=".7"/><rect x="815.858" y="545.001" width="3.8" height="3.8" fill="#e25cf2" stroke="#a030b4" stroke-width=".7"/><rect x="796.932" y="561.993" width="3.8" height="3.8" fill="#e25cf2" stroke="#a030b4" stroke-width=".7"/><rect x="818.792" y="554.899" width="3.8" height="3.8" fill="#e25cf2" stroke="#a030b4" stroke-width=".7"/><rect x="847.866" y="532.84" width="3.8" height="3.8" fill="#35dfe8" stroke="#1a9aa2" stroke-width=".7"/><rect x="779.372" y="574.164" width="3.8" height="3.8" fill="#e25cf2" stroke="#a030b4" stroke-width=".7"/><rect x="803.38" y="550.271" width="3.8" height="3.8" fill="#e25cf2" stroke="#a030b4" stroke-width=".7"/><rect x="830.352" y="546.607" width="3.8" height="3.8" fill="#e25cf2" stroke="#a030b4" stroke-width=".7"/><rect x="822.182" y="543.073" width="3.8" height="3.8" fill="#e25cf2" stroke="#a030b4" stroke-width=".7"/><rect x="745.746" y="587.896" width="3.8" height="3.8" fill="#e25cf2" stroke="#a030b4" stroke-width=".7"/><rect x="785" y="563.737" width="3.8" height="3.8" fill="#e25cf2" stroke="#a030b4" stroke-width=".7"/><rect x="818.855" y="549.146" width="3.8" height="3.8" fill="#e25cf2" stroke="#a030b4" stroke-width=".7"/><rect x="770.902" y="570.16" width="3.8" height="3.8" fill="#e25cf2" stroke="#a030b4" stroke-width=".7"/><rect x="758.596" y="572.706" width="3.8" height="3.8" fill="#e25cf2" stroke="#a030b4" stroke-width=".7"/><rect x="768.423" y="568.823" width="3.8" height="3.8" fill="#e25cf2" stroke="#a030b4" stroke-width=".7"/><rect x="823.271" y="541.634" width="3.8" height="3.8" fill="#e25cf2" stroke="#a030b4" stroke-width=".7"/><rect x="825.968" y="548.053" width="3.8" height="3.8" fill="#35dfe8" stroke="#1a9aa2" stroke-width=".7"/><rect x="822.545" y="550.59" width="3.8" height="3.8" fill="#e25cf2" stroke="#a030b4" stroke-width=".7"/><rect x="781.976" y="562.267" width="3.8" height="3.8" fill="#e25cf2" stroke="#a030b4" stroke-width=".7"/><rect x="791.736" y="569.766" width="3.8" height="3.8" fill="#e25cf2" stroke="#a030b4" stroke-width=".7"/><rect x="775.576" y="571.94" width="3.8" height="3.8" fill="#e25cf2" stroke="#a030b4" stroke-width=".7"/><rect x="812.754" y="559.653" width="3.8" height="3.8" fill="#e25cf2" stroke="#a030b4" stroke-width=".7"/><rect x="738.908" y="592.265" width="3.8" height="3.8" fill="#e25cf2" stroke="#a030b4" stroke-width=".7"/><rect x="90.2" y="420.2" width="3.6" height="3.6" fill="#1d5cf2" stroke="#123aa6" stroke-width=".7"/><rect x="121.2" y="424.2" width="3.6" height="3.6" fill="#1d5cf2" stroke="#123aa6" stroke-width=".7"/><rect x="148.2" y="448.2" width="3.6" height="3.6" fill="#1d5cf2" stroke="#123aa6" stroke-width=".7"/><rect x="65.2" y="496.2" width="3.6" height="3.6" fill="#1d5cf2" stroke="#123aa6" stroke-width=".7"/><rect x="155.2" y="504.2" width="3.6" height="3.6" fill="#1d5cf2" stroke="#123aa6" stroke-width=".7"/><rect x="169.2" y="525.2" width="3.6" height="3.6" fill="#1d5cf2" stroke="#123aa6" stroke-width=".7"/><rect x="182.2" y="542.2" width="3.6" height="3.6" fill="#1d5cf2" stroke="#123aa6" stroke-width=".7"/><rect x="241.2" y="539.2" width="3.6" height="3.6" fill="#1d5cf2" stroke="#123aa6" stroke-width=".7"/><rect x="261.2" y="565.2" width="3.6" height="3.6" fill="#1d5cf2" stroke="#123aa6" stroke-width=".7"/><rect x="532.2" y="636.2" width="3.6" height="3.6" fill="#1d5cf2" stroke="#123aa6" stroke-width=".7"/><rect x="178.2" y="110.2" width="3.6" height="3.6" fill="#1d5cf2" stroke="#123aa6" stroke-width=".7"/><rect x="1031.2" y="456.2" width="3.6" height="3.6" fill="#1d5cf2" stroke="#123aa6" stroke-width=".7"/><rect x="433.2" y="676.2" width="3.6" height="3.6" fill="#1d5cf2" stroke="#123aa6" stroke-width=".7"/><rect x="188.1" y="426.1" width="3.8" height="3.8" fill="#35dfe8" stroke="#1a9aa2" stroke-width=".7"/><rect x="146.1" y="464.1" width="3.8" height="3.8" fill="#35dfe8" stroke="#1a9aa2" stroke-width=".7"/><rect x="145.1" y="526.1" width="3.8" height="3.8" fill="#35dfe8" stroke="#1a9aa2" stroke-width=".7"/><rect x="174.1" y="550.1" width="3.8" height="3.8" fill="#35dfe8" stroke="#1a9aa2" stroke-width=".7"/><rect x="203.1" y="550.1" width="3.8" height="3.8" fill="#35dfe8" stroke="#1a9aa2" stroke-width=".7"/><rect x="246.1" y="541.1" width="3.8" height="3.8" fill="#35dfe8" stroke="#1a9aa2" stroke-width=".7"/><rect x="276.1" y="496.1" width="3.8" height="3.8" fill="#35dfe8" stroke="#1a9aa2" stroke-width=".7"/><rect x="335.1" y="564.1" width="3.8" height="3.8" fill="#35dfe8" stroke="#1a9aa2" stroke-width=".7"/><rect x="380.1" y="594.1" width="3.8" height="3.8" fill="#35dfe8" stroke="#1a9aa2" stroke-width=".7"/><rect x="417.1" y="541.1" width="3.8" height="3.8" fill="#35dfe8" stroke="#1a9aa2" stroke-width=".7"/><rect x="430.1" y="516.1" width="3.8" height="3.8" fill="#35dfe8" stroke="#1a9aa2" stroke-width=".7"/><rect x="480.1" y="652.1" width="3.8" height="3.8" fill="#35dfe8" stroke="#1a9aa2" stroke-width=".7"/><rect x="622.1" y="594.1" width="3.8" height="3.8" fill="#35dfe8" stroke="#1a9aa2" stroke-width=".7"/><rect x="1066.1" y="509.1" width="3.8" height="3.8" fill="#35dfe8" stroke="#1a9aa2" stroke-width=".7"/><rect x="1066.1" y="477.1" width="3.8" height="3.8" fill="#35dfe8" stroke="#1a9aa2" stroke-width=".7"/><rect x="917.1" y="534.1" width="3.8" height="3.8" fill="#35dfe8" stroke="#1a9aa2" stroke-width=".7"/><rect x="685.1" y="602.1" width="3.8" height="3.8" fill="#35dfe8" stroke="#1a9aa2" stroke-width=".7"/><rect x="693.1" y="619.1" width="3.8" height="3.8" fill="#35dfe8" stroke="#1a9aa2" stroke-width=".7"/><rect x="1378.1" y="416.1" width="3.8" height="3.8" fill="#35dfe8" stroke="#1a9aa2" stroke-width=".7"/><rect x="1462.1" y="478.1" width="3.8" height="3.8" fill="#35dfe8" stroke="#1a9aa2" stroke-width=".7"/><rect x="1463.1" y="486.1" width="3.8" height="3.8" fill="#35dfe8" stroke="#1a9aa2" stroke-width=".7"/><rect x="1473.1" y="493.1" width="3.8" height="3.8" fill="#35dfe8" stroke="#1a9aa2" stroke-width=".7"/><rect x="1480.1" y="486.1" width="3.8" height="3.8" fill="#35dfe8" stroke="#1a9aa2" stroke-width=".7"/><rect x="1449.1" y="387.1" width="3.8" height="3.8" fill="#35dfe8" stroke="#1a9aa2" stroke-width=".7"/><rect x="128.1" y="206.1" width="3.8" height="3.8" fill="#35dfe8" stroke="#1a9aa2" stroke-width=".7"/><rect x="1400.1" y="209.1" width="3.8" height="3.8" fill="#35dfe8" stroke="#1a9aa2" stroke-width=".7"/><rect x="1040.1" y="765.1" width="3.8" height="3.8" fill="#35dfe8" stroke="#1a9aa2" stroke-width=".7"/><rect x="1085.1" y="781.1" width="3.8" height="3.8" fill="#35dfe8" stroke="#1a9aa2" stroke-width=".7"/><rect x="940.1" y="737.1" width="3.8" height="3.8" fill="#35dfe8" stroke="#1a9aa2" stroke-width=".7"/><rect x="767.1" y="769.1" width="3.8" height="3.8" fill="#35dfe8" stroke="#1a9aa2" stroke-width=".7"/><rect x="366.1" y="937.1" width="3.8" height="3.8" fill="#35dfe8" stroke="#1a9aa2" stroke-width=".7"/><rect x="1398.1" y="735.1" width="3.8" height="3.8" fill="#35dfe8" stroke="#1a9aa2" stroke-width=".7"/><rect x="1303.1" y="820.1" width="3.8" height="3.8" fill="#35dfe8" stroke="#1a9aa2" stroke-width=".7"/><rect x="155.1" y="194.1" width="3.8" height="3.8" fill="#35dfe8" stroke="#1a9aa2" stroke-width=".7"/><rect x="298.1" y="448.1" width="3.8" height="3.8" fill="#35dfe8" stroke="#1a9aa2" stroke-width=".7"/><rect x="302.1" y="446.1" width="3.8" height="3.8" fill="#35dfe8" stroke="#1a9aa2" stroke-width=".7"/><rect x="127.1" y="240.1" width="3.8" height="3.8" fill="#f39468" stroke="#c06038" stroke-width=".7"/><rect x="114.1" y="280.1" width="3.8" height="3.8" fill="#f39468" stroke="#c06038" stroke-width=".7"/><rect x="988.1" y="465.1" width="3.8" height="3.8" fill="#f39468" stroke="#c06038" stroke-width=".7"/><rect x="422.1" y="976.1" width="3.8" height="3.8" fill="#f39468" stroke="#c06038" stroke-width=".7"/><rect x="516.1" y="1001.1" width="3.8" height="3.8" fill="#f39468" stroke="#c06038" stroke-width=".7"/><rect x="281.1" y="566.1" width="3.8" height="3.8" fill="#f39468" stroke="#c06038" stroke-width=".7"/><rect x="313.1" y="510.1" width="3.8" height="3.8" fill="#6fe27a" stroke="#1f8a2f" stroke-width=".7"/><rect x="268.1" y="544.1" width="3.8" height="3.8" fill="#6fe27a" stroke="#1f8a2f" stroke-width=".7"/><rect x="895" y="738" width="4" height="4" fill="none" stroke="#888" stroke-width=".8"/></g>
</svg>
</div>
<style>
#search{position:absolute;left:773px;top:91px;width:320px;height:32px;border-radius:16px;background:rgba(52,62,73,.92);box-shadow:0 1px 3px rgba(0,0,0,.2)}
#search span{position:absolute;left:94px;top:7px;font-size:14.5px;color:#98a1ab;white-space:nowrap}
#layers{position:absolute;left:1486px;top:95px;width:272px;height:578px;border-radius:9px;background:#3a404d;box-shadow:0 1px 3px rgba(0,0,0,.18);color:#fff}
#layers .hd{position:absolute;left:40px;top:14px;font-size:14.4px;-webkit-text-stroke:.45px #fff;letter-spacing:-.2px}
#layers .div{position:absolute;left:0;top:46px;width:272px;height:1px;background:#525967}
#unlock{position:absolute;left:16px;top:55px;width:163px;height:31px;border-radius:3px;background:#f9534a;color:#fff;font-size:12.3px;font-weight:bold;line-height:31px;padding-left:25px;white-space:nowrap;letter-spacing:-.1px;-webkit-text-stroke:.3px #fff}
.sec{position:absolute;left:17px;font-size:14.6px;-webkit-text-stroke:.45px #fff;letter-spacing:-.25px;white-space:nowrap;color:#fff}
.itm{position:absolute;left:40px;font-size:13.9px;-webkit-text-stroke:.4px #fff;letter-spacing:-.25px;white-space:nowrap;color:#fff}
.lk{position:absolute;left:16px;width:13px;height:14px}
.chev{position:absolute;left:245px;width:14px;height:10px}
#rt1,#rt2{position:absolute;left:1767px;width:43px;border-radius:7px;background:rgba(68,78,89,.93)}
#rt1{top:95px;height:295px}
#rt2{top:399px;height:130px}
.rb{position:absolute;left:7px;width:29px;height:29px;border-radius:4px;background:#2b343f}
.rb svg{position:absolute;left:5px;top:5px;width:19px;height:19px}
#zoomc{position:absolute;left:1777px;top:874px;width:31px;height:97px;border-radius:5px;background:#454f5a;color:#fff;text-align:center}
#coords{position:absolute;left:1566px;top:905px;width:200px;text-align:right;font-size:11.3px;color:#333;line-height:16.5px;white-space:nowrap}
#attr{position:absolute;left:1664px;top:992px;width:154px;height:13px;background:rgba(255,255,255,.75);font-size:8.1px;color:#555;line-height:13px;padding-left:5px;white-space:nowrap;letter-spacing:-.1px}
#attr b{font-weight:normal;color:#0a7fb0}
#scale{position:absolute;left:53px;top:976px;font-size:8px;color:#444}
</style>
<div id="search"><svg class="abs" style="left:68px;top:8px" width="17" height="17" viewBox="0 0 17 17"><circle cx="7" cy="7" r="5" fill="none" stroke="#fff" stroke-width="1.9"/><path d="M10.8 10.8 L15.2 15.2" stroke="#fff" stroke-width="2.2" stroke-linecap="round"/></svg><span>Search MarineTraffic</span></div>

<div id="layers">
  <svg class="abs" style="left:11px;top:13px" width="19" height="19" viewBox="0 0 20 20" fill="none" stroke="#fff" stroke-width="1.5" stroke-linejoin="round"><path d="M10 2.2 L17.6 6.2 L10 10.2 L2.4 6.2 Z"/><path d="M2.4 9.8 L10 13.8 L17.6 9.8"/><path d="M2.4 13.4 L10 17.4 L17.6 13.4"/></svg>
  <div class="hd">Layers</div>
  <svg class="abs" style="left:246px;top:17px" width="12" height="12" viewBox="0 0 12 12"><path d="M1 1 L11 11 M11 1 L1 11" stroke="#aeb4bd" stroke-width="1.5"/></svg>
  <div class="div"></div>
  <div id="unlock"><svg class="abs" style="left:8px;top:10px" width="10" height="12" viewBox="0 0 10 12"><rect x="0.5" y="5" width="9" height="6.5" rx="1" fill="#fff"/><path d="M2.6 5 V3.4 A2.4 2.4 0 0 1 7.4 3.4 V5" fill="none" stroke="#fff" stroke-width="1.5"/></svg>UNLOCK ALL LAYERS</div>
  <div class="sec" style="top:103px">Map Features</div>
  <svg class="chev" style="top:107px" viewBox="0 0 14 10"><path d="M2 2.5 L7 7.5 L12 2.5" fill="none" stroke="#c9ced6" stroke-width="1.7"/></svg>
  <div class="sec" style="top:152px">Points of Interest</div>
  <svg class="chev" style="top:156px" viewBox="0 0 14 10"><path d="M2 2.5 L7 7.5 L12 2.5" fill="none" stroke="#c9ced6" stroke-width="1.7"/></svg>
  <div class="sec" style="top:201px">SafetyNET Areas</div>
  <svg class="abs" style="left:134px;top:200px" width="15" height="15" viewBox="0 0 15 15"><circle cx="7.5" cy="7.5" r="6" fill="none" stroke="#fff" stroke-width="1.3"/><path d="M7.5 6.6 V10.8" stroke="#fff" stroke-width="1.4"/><circle cx="7.5" cy="4.6" r=".9" fill="#fff"/></svg>
  <svg class="chev" style="top:204px" viewBox="0 0 14 10"><path d="M2 7.5 L7 2.5 L12 7.5" fill="none" stroke="#c9ced6" stroke-width="1.7"/></svg>
  <svg class="lk" style="top:241px" viewBox="0 0 13 14"><rect x="1" y="6" width="11" height="7.4" rx="1.2" fill="#a8434b"/><path d="M3.6 6 V4.4 A2.9 2.9 0 0 1 9.4 4.4 V6" fill="none" stroke="#a8434b" stroke-width="1.7"/><path d="M6.5 6.4 V13" stroke="#3a404d" stroke-width=".9"/></svg><div class="itm" style="top:241px">Meteorological</div>
  <svg class="lk" style="top:275px" viewBox="0 0 13 14"><rect x="1" y="6" width="11" height="7.4" rx="1.2" fill="#a8434b"/><path d="M3.6 6 V4.4 A2.9 2.9 0 0 1 9.4 4.4 V6" fill="none" stroke="#a8434b" stroke-width="1.7"/><path d="M6.5 6.4 V13" stroke="#3a404d" stroke-width=".9"/></svg><div class="itm" style="top:275px">Piracy</div>
  <svg class="lk" style="top:309px" viewBox="0 0 13 14"><rect x="1" y="6" width="11" height="7.4" rx="1.2" fill="#a8434b"/><path d="M3.6 6 V4.4 A2.9 2.9 0 0 1 9.4 4.4 V6" fill="none" stroke="#a8434b" stroke-width="1.7"/><path d="M6.5 6.4 V13" stroke="#3a404d" stroke-width=".9"/></svg><div class="itm" style="top:309px">Military</div>
  <svg class="lk" style="top:343px" viewBox="0 0 13 14"><rect x="1" y="6" width="11" height="7.4" rx="1.2" fill="#a8434b"/><path d="M3.6 6 V4.4 A2.9 2.9 0 0 1 9.4 4.4 V6" fill="none" stroke="#a8434b" stroke-width="1.7"/><path d="M6.5 6.4 V13" stroke="#3a404d" stroke-width=".9"/></svg><div class="itm" style="top:343px">Operations</div>
  <svg class="lk" style="top:377px" viewBox="0 0 13 14"><rect x="1" y="6" width="11" height="7.4" rx="1.2" fill="#a8434b"/><path d="M3.6 6 V4.4 A2.9 2.9 0 0 1 9.4 4.4 V6" fill="none" stroke="#a8434b" stroke-width="1.7"/><path d="M6.5 6.4 V13" stroke="#3a404d" stroke-width=".9"/></svg><div class="itm" style="top:377px">Rescue</div>
  <svg class="lk" style="top:411px" viewBox="0 0 13 14"><rect x="1" y="6" width="11" height="7.4" rx="1.2" fill="#a8434b"/><path d="M3.6 6 V4.4 A2.9 2.9 0 0 1 9.4 4.4 V6" fill="none" stroke="#a8434b" stroke-width="1.7"/><path d="M6.5 6.4 V13" stroke="#3a404d" stroke-width=".9"/></svg><div class="itm" style="top:411px">Buoys</div>
  <svg class="lk" style="top:445px" viewBox="0 0 13 14"><rect x="1" y="6" width="11" height="7.4" rx="1.2" fill="#a8434b"/><path d="M3.6 6 V4.4 A2.9 2.9 0 0 1 9.4 4.4 V6" fill="none" stroke="#a8434b" stroke-width="1.7"/><path d="M6.5 6.4 V13" stroke="#3a404d" stroke-width=".9"/></svg><div class="itm" style="top:445px">Rigs</div>
  <svg class="lk" style="top:479px" viewBox="0 0 13 14"><rect x="1" y="6" width="11" height="7.4" rx="1.2" fill="#a8434b"/><path d="M3.6 6 V4.4 A2.9 2.9 0 0 1 9.4 4.4 V6" fill="none" stroke="#a8434b" stroke-width="1.7"/><path d="M6.5 6.4 V13" stroke="#3a404d" stroke-width=".9"/></svg><div class="itm" style="top:479px">Other</div>
  <div class="sec" style="top:538px">Areas of Interest</div>
  <svg class="chev" style="top:542px" viewBox="0 0 14 10"><path d="M2 2.5 L7 7.5 L12 2.5" fill="none" stroke="#c9ced6" stroke-width="1.7"/></svg>
</div>

<div id="rt1">
  <div class="rb" style="top:7px"><svg viewBox="0 0 21 21" fill="none" stroke="#fff" stroke-width="1.4" stroke-linejoin="round"><path d="M3 5.6 L7.6 4 L13.4 5.6 L18 4 V15.4 L13.4 17 L7.6 15.4 L3 17 Z M7.6 4 V15.4 M13.4 5.6 V17"/></svg></div>
  <div class="rb" style="top:43px"><svg viewBox="0 0 21 21" fill="none" stroke="#fff" stroke-width="1.4"><circle cx="10.5" cy="7.6" r="4.4"/><circle cx="7.4" cy="12.8" r="4.4"/><circle cx="13.6" cy="12.8" r="4.4"/></svg></div>
  <div class="rb" style="top:79px"><svg viewBox="0 0 21 21" fill="none" stroke="#fff" stroke-width="1.5" stroke-linejoin="round"><path d="M10.5 17.4 L4.4 11.2 A3.7 3.7 0 0 1 10.5 6.8 A3.7 3.7 0 0 1 16.6 11.2 Z"/></svg><svg style="left:19px;top:1px;width:8px;height:9px" viewBox="0 0 8 9"><rect x="0.3" y="3.6" width="7.4" height="5.2" rx=".8" fill="#f4505a"/><path d="M2 3.6 V2.6 A2 2 0 0 1 6 2.6 V3.6" fill="none" stroke="#f4505a" stroke-width="1.2"/></svg></div>
  <div class="rb" style="top:115px;background:#1a6fdd"><svg viewBox="0 0 21 21" fill="none" stroke="#fff" stroke-width="1.4" stroke-linejoin="round"><path d="M10.5 3.2 L17.4 6.8 L10.5 10.4 L3.6 6.8 Z"/><path d="M3.6 10.2 L10.5 13.8 L17.4 10.2"/><path d="M3.6 13.6 L10.5 17.2 L17.4 13.6"/></svg></div>
  <div class="rb" style="top:151px"><svg viewBox="0 0 21 21" fill="none" stroke="#fff" stroke-width="1.4" stroke-linecap="round"><path d="M4 7.4 H12.4 A2.1 2.1 0 1 0 10.6 4.4"/><path d="M4 10.6 H15.6 A2.1 2.1 0 1 1 13.8 13.6"/><path d="M4 13.8 H10.4 A1.9 1.9 0 1 1 8.8 16.8"/></svg></div>
  <div class="rb" style="top:187px"><svg viewBox="0 0 21 21" fill="#fff" stroke="#fff" stroke-width="1.2"><circle cx="9" cy="10" r="2.2"/><circle cx="8" cy="4.4" r="1.1"/><circle cx="15.6" cy="9.6" r="1.1"/><circle cx="5" cy="14.6" r="1.1"/><circle cx="14.4" cy="16.4" r="1.5"/><path d="M9 10 L8 4.4 M9 10 L15.6 9.6 M9 10 L5 14.6 M9 10 L14.4 16.4"/></svg></div>
  <div class="rb" style="top:223px"><svg viewBox="0 0 21 21" fill="none" stroke="#fff" stroke-width="1.5" stroke-linejoin="round"><path d="M6 4 L16.8 10.5 L6 17 Z"/></svg></div>
  <div class="rb" style="top:259px"><svg viewBox="0 0 21 21" fill="none" stroke="#fff" stroke-width="1.5" stroke-linecap="round"><circle cx="10.5" cy="5.4" r="1.6"/><path d="M9.8 7 L5.4 17.6 M11.2 7 L15.6 17.6 M7.8 12 Q10.5 14.6 13.2 12"/></svg><svg style="left:19px;top:1px;width:8px;height:9px" viewBox="0 0 8 9"><rect x="0.3" y="3.6" width="7.4" height="5.2" rx=".8" fill="#f4505a"/><path d="M2 3.6 V2.6 A2 2 0 0 1 6 2.6 V3.6" fill="none" stroke="#f4505a" stroke-width="1.2"/></svg></div>
</div>
<div id="rt2">
  <svg class="abs" style="left:12px;top:8px" width="19" height="20" viewBox="0 0 19 20"><path d="M9.5 2.4 L15.4 16.6 L9.5 13.2 L3.6 16.6 Z" fill="none" stroke="#fff" stroke-width="1.4" stroke-linejoin="round"/></svg>
  <div class="abs" style="left:0;top:35px;width:43px;text-align:center;color:#fff;font-size:11.5px;font-weight:bold">274K</div>
  <div class="rb" style="top:62px;height:24px"><div style="color:#fff;font-size:13px;font-weight:bold;text-align:center;line-height:22px">∞</div></div>
  <div class="rb" style="top:94px;height:28px"><svg viewBox="0 0 21 21" fill="none" stroke="#fff" stroke-width="1.7" style="top:3.5px"><path d="M5 8.4 V5 H8.4 M12.6 5 H16 V8.4 M16 12.6 V16 H12.6 M8.4 16 H5 V12.6"/></svg></div>
</div>
<div id="zoomc">
  <div class="abs" style="left:0;top:32px;width:31px;height:1px;background:#6a737d"></div>
  <div class="abs" style="left:0;top:65px;width:31px;height:1px;background:#6a737d"></div>
  <div class="abs" style="left:0;top:5px;width:31px;font-size:17px;font-weight:bold;line-height:22px">+</div>
  <div class="abs" style="left:0;top:39px;width:31px;font-size:15.5px;line-height:22px">7</div>
  <div class="abs" style="left:0;top:70px;width:31px;font-size:17px;line-height:22px">−</div>
</div>
<div id="coords">N61°20'00.74<br>E027°33'52.91<br>(61.3335, 027.5647)</div>
<div id="attr"><b>Leaflet</b> | © <b>Mapbox</b> © <b>OpenStreetMap</b></div>
<div id="scale">
  <div class="abs" style="left:0;top:0;width:99px;height:11px;background:rgba(255,255,255,.7);border:2px solid #666;border-top:none;padding-left:6px;line-height:10px">30 km</div>
  <div class="abs" style="left:0;top:11px;width:53px;height:12px;background:rgba(255,255,255,.7);border:2px solid #666;border-top:none;border-bottom:none;padding-left:6px;line-height:13px">10 mi</div>
</div>
<div id="adarea">
  <div class="abs" style="left:521px;top:16px;width:175px;height:90px;background:#146bd8"></div>
  <div class="abs" style="left:696px;top:16px;width:553px;height:90px;background:#fff"></div>
  <div class="abs" style="left:521px;top:41px;width:159px;text-align:right;color:#fff;font-size:23.5px;letter-spacing:-.2px;white-space:nowrap;font-family:'DejaVu Sans','Liberation Sans',sans-serif;-webkit-text-stroke:.5px #fff;transform:scaleX(.93);transform-origin:100% 50%">marinetraffic</div>
  <div class="abs" style="left:521px;top:66px;width:158px;text-align:right;color:#fff;font-size:11.5px;white-space:nowrap">a <b>kpler</b> product</div>
  <div class="abs" style="left:720px;top:23px;width:3px;height:32px;background:#146bd8"></div>
  <div class="abs" style="left:734px;top:26px;color:#1f2a37;font-size:24.8px;font-weight:bold;letter-spacing:-.5px;white-space:nowrap">unmatched AIS tracking</div>
  <div class="abs" style="left:734px;top:61px;color:#1f2a37;font-size:15.65px;line-height:20px;white-space:nowrap;letter-spacing:-.1px">Access the <b>world’s largest AIS network</b> for continuous<br>and <b>real-time</b> ship tracking data.</div>
  <svg class="abs" style="left:1100px;top:16px" width="149" height="90" viewBox="1152 1024 149 90"><path transform="translate(1193 1037)" d="M0-10L11-2 7 10.5-7 10.5-11-2z" fill="#ededee" opacity="0.35"/><path transform="translate(1193 1073)" d="M0-10L11-2 7 10.5-7 10.5-11-2z" fill="#ededee" opacity="0.35"/><path transform="translate(1193 1108)" d="M0-10L11-2 7 10.5-7 10.5-11-2z" fill="#ededee" opacity="0.35"/><path transform="translate(1228 1037)" d="M0-10L11-2 7 10.5-7 10.5-11-2z" fill="#ededee" opacity="0.42"/><path transform="translate(1228 1073)" d="M0-10L11-2 7 10.5-7 10.5-11-2z" fill="#ededee" opacity="0.42"/><path transform="translate(1228 1108)" d="M0-10L11-2 7 10.5-7 10.5-11-2z" fill="#ededee" opacity="0.42"/><path transform="translate(1263 1037)" d="M0-10L11-2 7 10.5-7 10.5-11-2z" fill="#ededee" opacity="0.48"/><path transform="translate(1263 1108)" d="M0-10L11-2 7 10.5-7 10.5-11-2z" fill="#ededee" opacity="0.48"/><path transform="translate(1298 1037)" d="M0-10L11-2 7 10.5-7 10.5-11-2z" fill="#ededee" opacity="0.55"/><path transform="translate(1298 1073)" d="M0-10L11-2 7 10.5-7 10.5-11-2z" fill="#ededee" opacity="0.55"/><path transform="translate(1298 1108)" d="M0-10L11-2 7 10.5-7 10.5-11-2z" fill="#ededee" opacity="0.55"/></svg><svg class="abs" style="left:1198px;top:51.5px" width="26" height="26" viewBox="0 0 28 28"><path d="M14 2.5 L25.5 10.5 L21.3 24.5 L6.7 24.5 L2.5 10.5 Z" fill="#146bd8"/><path d="M14.3 6.2 L22.5 11.7 L19.6 21.8 L14.3 21.8 Z" fill="#fff"/></svg>
</div>
<div id="footer">
  <span style="left:13px">Terms</span><span style="left:68px">Privacy</span>
  <svg class="abs" style="left:121px;top:13px" width="10" height="7" viewBox="0 0 10 7"><path d="M1 5.6 L5 1.6 L9 5.6" fill="none" stroke="#dfe3e8" stroke-width="1.5"/></svg>
  <span style="left:141px">User Agreement</span><span style="left:246px">English (EN)</span>
  <svg class="abs" style="left:330px;top:13px" width="10" height="7" viewBox="0 0 10 7"><path d="M1 5.6 L5 1.6 L9 5.6" fill="none" stroke="#dfe3e8" stroke-width="1.5"/></svg>
  <span style="left:1638px;color:#fff;text-decoration:underline;font-size:13px;top:8px">kpler.com</span>
  <svg class="abs" style="left:1713px;top:7px" width="16" height="18" viewBox="0 0 16 18"><path d="M11.2 4.6 C9.8 4.6 9 5.4 8 5.4 C7 5.4 6 4.6 4.8 4.6 C2.8 4.6 1 6.4 1 9.4 C1 12.6 3.2 16.6 5 16.6 C6 16.6 6.6 15.9 8 15.9 C9.4 15.9 9.8 16.6 11 16.6 C12.6 16.6 14.2 13.8 14.8 12.2 C13 11.4 12.4 9.8 12.4 8.8 C12.4 7.4 13.2 6.4 14.2 5.8 C13.4 4.9 12.3 4.6 11.2 4.6 Z M10.6 1 C9.2 1.2 7.8 2.6 8 4.2 C9.4 4.2 10.8 2.8 10.6 1 Z" fill="#fff"/></svg>
  <svg class="abs" style="left:1747px;top:8px" width="17" height="18" viewBox="0 0 17 18"><path d="M1.5 1.2 L15.5 9 L1.5 16.8 Z" fill="#fff"/><path d="M1.5 1.2 L11 11.6 M1.5 16.8 L11 6.4" stroke="#28323c" stroke-width="1"/></svg>
</div>
</div></body></html>
